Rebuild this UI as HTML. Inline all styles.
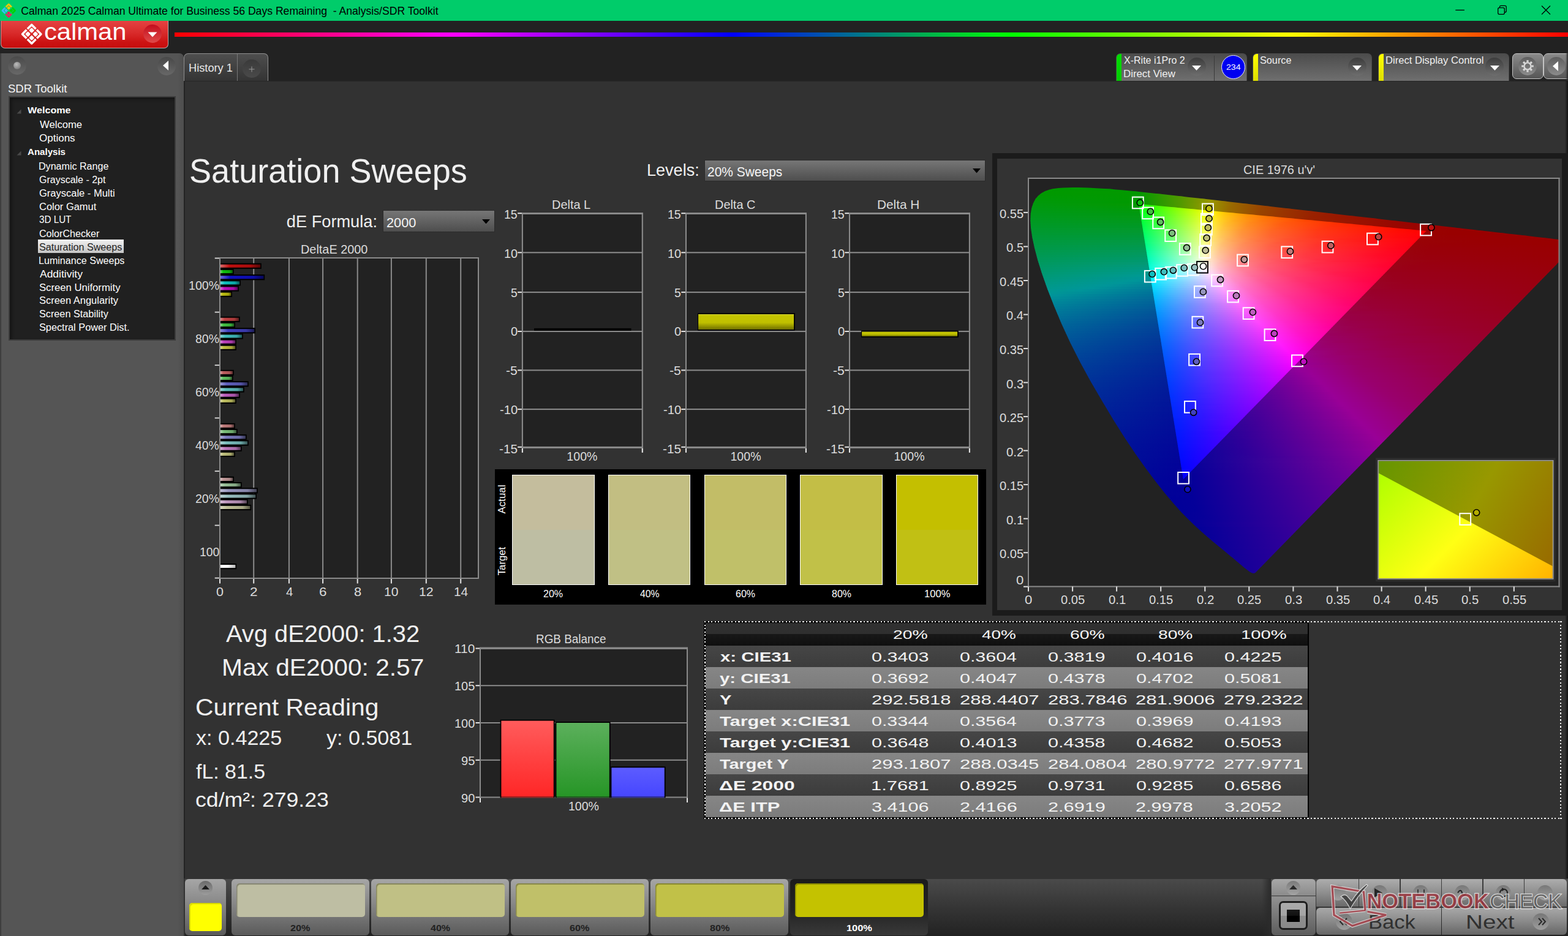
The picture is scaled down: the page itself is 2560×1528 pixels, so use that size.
<!DOCTYPE html>
<html lang="en"><head><meta charset="utf-8"><title>Calman 2025 - Analysis/SDR Toolkit</title>
<style>
*{box-sizing:border-box;margin:0;padding:0}
html,body{width:2560px;height:1528px;overflow:hidden;background:#323232}
body{font-family:"Liberation Sans",sans-serif;color:#f0f0f0}
#app{position:relative;width:2560px;height:1528px;overflow:hidden;background:#323232}
#app div,#app span,#app svg{position:absolute}
.t{white-space:pre;line-height:1;transform-origin:0 0;display:block}
.rb{border-radius:50%}
</style></head>
<body><div id="app">
<div id="titlebar" style="left:0;top:0;width:2560px;height:34px;background:#00cc6a"></div>
<svg style="left:0.8px;top:3.8px" width="26.4" height="26.4" viewBox="-13.2 -13.2 26.4 26.4"><g transform="rotate(45)"><path d="M-7.28 -0.70V-7.28H-0.70" fill="none" stroke="#ffc800" stroke-width="2.7" stroke-linejoin="round"/><rect x="-5.15" y="-5.15" width="4.4" height="4.4" rx="1.2" fill="#ffc800"/><path d="M7.28 -0.70V-7.28H0.70" fill="none" stroke="#00d400" stroke-width="2.7" stroke-linejoin="round"/><rect x="0.75" y="-5.15" width="4.4" height="4.4" rx="1.2" fill="#00d400"/><path d="M7.28 0.70V7.28H0.70" fill="none" stroke="#ff1a60" stroke-width="2.7" stroke-linejoin="round"/><rect x="0.75" y="0.75" width="4.4" height="4.4" rx="1.2" fill="#ff1a60"/><path d="M-7.28 0.70V7.28H-0.70" fill="none" stroke="#38bcff" stroke-width="2.7" stroke-linejoin="round"/><rect x="-5.15" y="0.75" width="4.4" height="4.4" rx="1.2" fill="#38bcff"/></g></svg>
<span class="t" style="left:34.31px;top:9.60px;font-size:17.6px;color:#000;">Calman 2025 Calman Ultimate for Business 56 Days Remaining  - Analysis/SDR Toolkit</span>
<svg style="left:2340px;top:0" width="220" height="34" viewBox="0 0 220 34" fill="none" stroke="#000" stroke-width="1.3">
<path d="M36.3 16.5h14.6"/>
<rect x="105.7" y="12.7" width="10.6" height="10.6" rx="2.2"/><path d="M108.5 12.5v-1.2a2 2 0 0 1 2-2h6.7a2 2 0 0 1 2 2v6.7a2 2 0 0 1-2 2h-1"/>
<path d="M177 9.5l14 14M191 9.5l-14 14"/>
</svg>
<div id="ribbon" style="left:0;top:34px;width:2560px;height:98px;background:#222"></div>
<div style="left:285px;top:52.5px;width:2275px;height:7.5px;background:linear-gradient(90deg,#f00 0%,#f0f 20%,#00f 40%,#0f0 60%,#ff0 80%,#f00 100%)"></div>
<div id="calman" style="left:1px;top:34px;width:274px;height:45px;border:1px solid #b9a9a9;border-top:0;border-radius:0 0 7px 7px;background:linear-gradient(#e44242 0%,#d92b2b 45%,#cc1212 80%,#c80e0e 100%)"></div>
<svg style="left:32.9px;top:36.8px" width="37.4" height="37.4" viewBox="-18.7 -18.7 37.4 37.4"><g transform="rotate(45)"><path d="M-10.77 -1.10V-10.77H-1.10" fill="none" stroke="#fff" stroke-width="3.5" stroke-linejoin="round"/><rect x="-7.60" y="-7.60" width="6.5" height="6.5" rx="1.6" fill="#fff"/><path d="M10.77 -1.10V-10.77H1.10" fill="none" stroke="#fff" stroke-width="3.5" stroke-linejoin="round"/><rect x="1.10" y="-7.60" width="6.5" height="6.5" rx="1.6" fill="#fff"/><path d="M10.77 1.10V10.77H1.10" fill="none" stroke="#fff" stroke-width="3.5" stroke-linejoin="round"/><rect x="1.10" y="1.10" width="6.5" height="6.5" rx="1.6" fill="#fff"/><path d="M-10.77 1.10V10.77H-1.10" fill="none" stroke="#fff" stroke-width="3.5" stroke-linejoin="round"/><rect x="-7.60" y="1.10" width="6.5" height="6.5" rx="1.6" fill="#fff"/></g></svg>
<span class="t" style="left:71.73px;top:32.83px;font-size:38px;color:#fff;transform:scaleX(1.0978);letter-spacing:0">calman</span>
<div class="rb" style="left:234px;top:40px;width:30px;height:30px;background:linear-gradient(#c20d1d,#e04a4a)"></div>
<svg style="left:241px;top:52px" width="16" height="9" viewBox="0 0 16 9"><path d="M0.5 0.5h15l-7.5 8z" fill="#fff"/></svg>
<div style="left:1822px;top:87px;width:214px;height:45px;border-radius:7px 7px 0 0;border:1px solid #4a4a4a;border-bottom:0;background:linear-gradient(#4c4c4c,#6f6f6f);overflow:hidden"><div style="left:0;top:0;width:8px;height:45px;background:linear-gradient(#0d0,#0c0)"></div></div>
<div class="rb" style="left:1938.5px;top:94px;width:30px;height:30px;background:linear-gradient(#3c3c3c,#6e6e6e)"></div>
<svg style="left:1946px;top:106.5px" width="15" height="8" viewBox="0 0 15 8"><path d="M0 0h15l-7.5 8z" fill="#fff"/></svg>
<div style="left:1981.5px;top:91px;width:1px;height:41px;background:#3a3a3a"></div>
<div class="rb" style="left:1994px;top:89.5px;width:39px;height:39px;background:#0000f0;border:1.5px solid #e8e8ff"></div>
<span class="t" style="left:2001.69px;top:103.09px;font-size:13.6px;color:#fff;transform:scaleX(1.0368);">234</span>
<span class="t" style="left:1834.64px;top:90.09px;font-size:16.2px;transform:scaleX(0.9901);">X-Rite i1Pro 2</span>
<span class="t" style="left:1833.62px;top:111.99px;font-size:16.2px;transform:scaleX(1.0402);">Direct View</span>
<div style="left:2045px;top:87px;width:195px;height:45px;border-radius:7px 7px 0 0;border:1px solid #4a4a4a;border-bottom:0;background:linear-gradient(#4c4c4c,#6f6f6f);overflow:hidden"><div style="left:0;top:0;width:8px;height:45px;background:linear-gradient(#ff0,#dd0)"></div></div>
<div class="rb" style="left:2200.5px;top:94px;width:30px;height:30px;background:linear-gradient(#3c3c3c,#6e6e6e)"></div>
<svg style="left:2208px;top:106.5px" width="15" height="8" viewBox="0 0 15 8"><path d="M0 0h15l-7.5 8z" fill="#fff"/></svg>
<span class="t" style="left:2057.26px;top:90.09px;font-size:16.2px;transform:scaleX(1.0032);">Source</span>
<div style="left:2250px;top:87px;width:214px;height:45px;border-radius:7px 7px 0 0;border:1px solid #4a4a4a;border-bottom:0;background:linear-gradient(#4c4c4c,#6f6f6f);overflow:hidden"><div style="left:0;top:0;width:8px;height:45px;background:linear-gradient(#ff0,#dd0)"></div></div>
<div class="rb" style="left:2425px;top:94px;width:30px;height:30px;background:linear-gradient(#3c3c3c,#6e6e6e)"></div>
<svg style="left:2432.5px;top:106.5px" width="15" height="8" viewBox="0 0 15 8"><path d="M0 0h15l-7.5 8z" fill="#fff"/></svg>
<span class="t" style="left:2261.64px;top:90.09px;font-size:16.2px;transform:scaleX(1.0252);">Direct Display Control</span>
<div style="left:2469px;top:86.5px;width:50.5px;height:42px;border-radius:7px;border:1.5px solid #c4c4c4;background:linear-gradient(#8a8a8a,#565656)"></div>
<div class="rb" style="left:2479px;top:92.5px;width:30px;height:30px;background:linear-gradient(#5e5e5e,#8c8c8c)"></div>
<svg style="left:2483px;top:96.5px" width="22" height="22" viewBox="-11 -11 22 22"><g fill="none" stroke="#d9d9d9">
<circle r="5.6" stroke-width="2.4"/><g stroke-width="3.2" stroke-linecap="butt">
<path d="M0 -6.5V-9.8M0 6.5V9.8M-6.5 0H-9.8M6.5 0H9.8M4.6 4.6L6.9 6.9M-4.6 4.6L-6.9 6.9M4.6 -4.6L6.9 -6.9M-4.6 -4.6L-6.9 -6.9"/></g></g></svg>
<div style="left:2520px;top:86.5px;width:50px;height:42px;border-radius:7px;border:1.5px solid #c4c4c4;background:linear-gradient(#8a8a8a,#565656)"></div>
<div class="rb" style="left:2525.5px;top:92.5px;width:30px;height:30px;background:linear-gradient(#5e5e5e,#8c8c8c)"></div>
<svg style="left:2535px;top:99.5px" width="9" height="16" viewBox="0 0 9 16"><path d="M9 0v16l-9 -8z" fill="#fff"/></svg>
<div style="left:2556px;top:86px;width:4px;height:46px;background:linear-gradient(90deg,rgba(30,30,30,0),#2a2a2a)"></div>
<div style="left:300px;top:86.5px;width:138px;height:45.5px;border-radius:7px 7px 0 0;border:1.2px solid #909090;border-bottom:0;background:linear-gradient(#4e4e4e,#343434)"></div>
<div style="left:387.2px;top:88px;width:1.2px;height:44px;background:#787878"></div>
<span class="t" style="left:308.00px;top:101.76px;font-size:18.6px;color:#e8e8e8;transform:scaleX(0.9799);">History 1</span>
<div class="rb" style="left:396.2px;top:97px;width:30px;height:30px;background:linear-gradient(#3a3a3a,#4a4a4a)"></div>
<svg style="left:406.2px;top:107.5px" width="10" height="10" viewBox="0 0 10 10"><path d="M5 0.5v9M0.5 5h9" stroke="#9a9a9a" stroke-width="1" fill="none"/></svg>
<div id="sidebar" style="left:0;top:87px;width:299.5px;height:1441px;border-radius:0 7px 0 0;background:linear-gradient(90deg,#4a4a4a 0,#555 3px,#555 290px,#4e4e4e 100%)"></div>
<div style="left:0;top:87px;width:1.5px;height:1441px;background:#3e3e3e"></div>
<div class="rb" style="left:13px;top:92px;width:30px;height:30px;background:linear-gradient(#4a4a4a,#686868)"></div>
<div class="rb" style="left:21.5px;top:100.5px;width:12px;height:12px;background:radial-gradient(circle at 40% 35%,#bdbdbd,#8a8a8a 60%,#6a6a6a)"></div>
<div class="rb" style="left:256.5px;top:92.5px;width:30px;height:30px;background:linear-gradient(#484848,#686868)"></div>
<svg style="left:266px;top:99px" width="9" height="16" viewBox="0 0 9 16"><path d="M9 0v16l-9 -8z" fill="#fff"/></svg>
<span class="t" style="left:12.66px;top:134.72px;font-size:19px;color:#f4f4f4;transform:scaleX(0.9754);">SDR Toolkit</span>
<div id="tree" style="left:14px;top:157px;width:273px;height:399px;border:2px solid #3c3c3c;background:#202020;box-shadow:inset 3px 3px 5px #141414"></div>
<svg style="left:27px;top:178px" width="8" height="8" viewBox="0 0 8 8"><path d="M7.5 0.5v7h-7z" fill="#4a4a4a"/></svg>
<svg style="left:27px;top:245.5px" width="8" height="8" viewBox="0 0 8 8"><path d="M7.5 0.5v7h-7z" fill="#4a4a4a"/></svg>
<span class="t" style="left:44.98px;top:171.86px;font-size:15.4px;font-weight:700;color:#fff;transform:scaleX(1.0486);">Welcome</span>
<span class="t" style="left:44.62px;top:239.86px;font-size:15.4px;font-weight:700;color:#fff;transform:scaleX(0.9792);">Analysis</span>
<span class="t" style="left:64.73px;top:195.83px;font-size:15.8px;color:#fff;transform:scaleX(1.0542);">Welcome</span>
<span class="t" style="left:63.99px;top:218.03px;font-size:15.8px;color:#fff;transform:scaleX(1.0765);">Options</span>
<span class="t" style="left:63.48px;top:264.03px;font-size:15.8px;color:#fff;transform:scaleX(1.0173);">Dynamic Range</span>
<span class="t" style="left:64.00px;top:286.03px;font-size:15.8px;color:#fff;transform:scaleX(1.0123);">Grayscale - 2pt</span>
<span class="t" style="left:63.97px;top:307.83px;font-size:15.8px;color:#fff;transform:scaleX(1.0442);">Grayscale - Multi</span>
<span class="t" style="left:63.96px;top:329.83px;font-size:15.8px;color:#fff;transform:scaleX(1.0414);">Color Gamut</span>
<span class="t" style="left:64.22px;top:351.13px;font-size:15.8px;color:#fff;transform:scaleX(0.9631);">3D LUT</span>
<span class="t" style="left:63.98px;top:373.83px;font-size:15.8px;color:#fff;transform:scaleX(1.0177);">ColorChecker</span>
<div style="left:62px;top:391px;width:140px;height:22px;background:linear-gradient(#f2f2f2,#c4c4c4)"></div>
<span class="t" style="left:64.07px;top:396.03px;font-size:15.8px;color:#222;transform:scaleX(1.0204);">Saturation Sweeps</span>
<span class="t" style="left:63.48px;top:417.53px;font-size:15.8px;color:#fff;transform:scaleX(1.0183);">Luminance Sweeps</span>
<span class="t" style="left:64.77px;top:439.93px;font-size:15.8px;color:#fff;transform:scaleX(1.1052);">Additivity</span>
<span class="t" style="left:64.04px;top:462.03px;font-size:15.8px;color:#fff;transform:scaleX(1.0553);">Screen Uniformity</span>
<span class="t" style="left:64.05px;top:482.83px;font-size:15.8px;color:#fff;transform:scaleX(1.0416);">Screen Angularity</span>
<span class="t" style="left:64.06px;top:505.03px;font-size:15.8px;color:#fff;transform:scaleX(1.0274);">Screen Stability</span>
<span class="t" style="left:64.06px;top:526.83px;font-size:15.8px;color:#fff;transform:scaleX(1.0309);">Spectral Power Dist.</span>
<div id="content" style="left:300px;top:132px;width:2260px;height:1302px;background:#323232"></div>
<div style="left:300px;top:132px;width:1.6px;height:1302px;background:#242424"></div>
<div style="left:300px;top:132px;width:2260px;height:1.3px;background:#262626"></div>
<div style="left:2554.5px;top:132px;width:5.5px;height:1302px;background:linear-gradient(90deg,rgba(16,16,16,0),rgba(16,16,16,.55) 55%,#121212)"></div>
<span class="t" style="left:309.04px;top:251.77px;font-size:55.2px;color:#f0f0f0;transform:scaleX(0.9798);">Saturation Sweeps</span>
<span class="t" style="left:467.86px;top:348.28px;font-size:27.2px;color:#f0f0f0;">dE Formula:</span>
<div style="left:624.5px;top:342.5px;width:183px;height:36px;border:1.5px solid #2b2b2b;background:linear-gradient(#767676,#4e4e4e)"></div>
<span class="t" style="left:630.91px;top:353.02px;font-size:22.3px;color:#f4f4f4;transform:scaleX(0.9744);">2000</span>
<svg style="left:786.5px;top:357.75px" width="13" height="7.5" viewBox="0 0 13 7.5"><path d="M0 0h13l-6.5 7.5z" fill="#000"/></svg>
<span class="t" style="left:1055.78px;top:264.38px;font-size:27.2px;color:#f0f0f0;transform:scaleX(0.9946);">Levels:</span>
<div style="left:1150px;top:260.5px;width:459px;height:35px;border:1.5px solid #2b2b2b;background:linear-gradient(#767676,#4e4e4e)"></div>
<span class="t" style="left:1155.45px;top:269.92px;font-size:22.3px;color:#f4f4f4;transform:scaleX(0.9397);">20% Sweeps</span>
<svg style="left:1588px;top:275.25px" width="13" height="7.5" viewBox="0 0 13 7.5"><path d="M0 0h13l-6.5 7.5z" fill="#000"/></svg>
<svg id="dechart" style="left:300px;top:400px" width="520" height="570" viewBox="300 400 520 570">
<defs>
<linearGradient id="b1" gradientUnits="userSpaceOnUse" x1="360.0" x2="425.1" y1="0" y2="0"><stop offset="0" stop-color="#d76a6a"/><stop offset=".22" stop-color="#be0f0f"/><stop offset=".75" stop-color="#a70d0d"/><stop offset="1" stop-color="#560707"/></linearGradient>
<linearGradient id="b2" gradientUnits="userSpaceOnUse" x1="360.0" x2="380.0" y1="0" y2="0"><stop offset="0" stop-color="#6ad76a"/><stop offset=".22" stop-color="#0fbe0f"/><stop offset=".75" stop-color="#0da70d"/><stop offset="1" stop-color="#075607"/></linearGradient>
<linearGradient id="b3" gradientUnits="userSpaceOnUse" x1="360.0" x2="430.5" y1="0" y2="0"><stop offset="0" stop-color="#6a6ad7"/><stop offset=".22" stop-color="#0f0fbe"/><stop offset=".75" stop-color="#0d0da7"/><stop offset="1" stop-color="#070756"/></linearGradient>
<linearGradient id="b4" gradientUnits="userSpaceOnUse" x1="360.0" x2="391.3" y1="0" y2="0"><stop offset="0" stop-color="#6ad7d7"/><stop offset=".22" stop-color="#0fbebe"/><stop offset=".75" stop-color="#0da7a7"/><stop offset="1" stop-color="#075656"/></linearGradient>
<linearGradient id="b5" gradientUnits="userSpaceOnUse" x1="360.0" x2="388.3" y1="0" y2="0"><stop offset="0" stop-color="#d76ad7"/><stop offset=".22" stop-color="#be0fbe"/><stop offset=".75" stop-color="#a70da7"/><stop offset="1" stop-color="#560756"/></linearGradient>
<linearGradient id="b6" gradientUnits="userSpaceOnUse" x1="360.0" x2="377.3" y1="0" y2="0"><stop offset="0" stop-color="#d7d76a"/><stop offset=".22" stop-color="#bebe0f"/><stop offset=".75" stop-color="#a7a70d"/><stop offset="1" stop-color="#565607"/></linearGradient>
<linearGradient id="b7" gradientUnits="userSpaceOnUse" x1="360.0" x2="390.0" y1="0" y2="0"><stop offset="0" stop-color="#d78989"/><stop offset=".22" stop-color="#be4141"/><stop offset=".75" stop-color="#a73939"/><stop offset="1" stop-color="#561d1d"/></linearGradient>
<linearGradient id="b8" gradientUnits="userSpaceOnUse" x1="360.0" x2="382.3" y1="0" y2="0"><stop offset="0" stop-color="#89d789"/><stop offset=".22" stop-color="#41be41"/><stop offset=".75" stop-color="#39a739"/><stop offset="1" stop-color="#1d561d"/></linearGradient>
<linearGradient id="b9" gradientUnits="userSpaceOnUse" x1="360.0" x2="415.3" y1="0" y2="0"><stop offset="0" stop-color="#8989d7"/><stop offset=".22" stop-color="#4141be"/><stop offset=".75" stop-color="#3939a7"/><stop offset="1" stop-color="#1d1d56"/></linearGradient>
<linearGradient id="b10" gradientUnits="userSpaceOnUse" x1="360.0" x2="395.1" y1="0" y2="0"><stop offset="0" stop-color="#89d7d7"/><stop offset=".22" stop-color="#41bebe"/><stop offset=".75" stop-color="#39a7a7"/><stop offset="1" stop-color="#1d5656"/></linearGradient>
<linearGradient id="b11" gradientUnits="userSpaceOnUse" x1="360.0" x2="384.2" y1="0" y2="0"><stop offset="0" stop-color="#d789d7"/><stop offset=".22" stop-color="#be41be"/><stop offset=".75" stop-color="#a739a7"/><stop offset="1" stop-color="#561d56"/></linearGradient>
<linearGradient id="b12" gradientUnits="userSpaceOnUse" x1="360.0" x2="384.2" y1="0" y2="0"><stop offset="0" stop-color="#d7d789"/><stop offset=".22" stop-color="#bebe41"/><stop offset=".75" stop-color="#a7a739"/><stop offset="1" stop-color="#56561d"/></linearGradient>
<linearGradient id="b13" gradientUnits="userSpaceOnUse" x1="360.0" x2="380.1" y1="0" y2="0"><stop offset="0" stop-color="#d79c9c"/><stop offset=".22" stop-color="#be5f5f"/><stop offset=".75" stop-color="#a75454"/><stop offset="1" stop-color="#562b2b"/></linearGradient>
<linearGradient id="b14" gradientUnits="userSpaceOnUse" x1="360.0" x2="378.9" y1="0" y2="0"><stop offset="0" stop-color="#9cd79c"/><stop offset=".22" stop-color="#5fbe5f"/><stop offset=".75" stop-color="#54a754"/><stop offset="1" stop-color="#2b562b"/></linearGradient>
<linearGradient id="b15" gradientUnits="userSpaceOnUse" x1="360.0" x2="404.1" y1="0" y2="0"><stop offset="0" stop-color="#9c9cd7"/><stop offset=".22" stop-color="#5f5fbe"/><stop offset=".75" stop-color="#5454a7"/><stop offset="1" stop-color="#2b2b56"/></linearGradient>
<linearGradient id="b16" gradientUnits="userSpaceOnUse" x1="360.0" x2="397.0" y1="0" y2="0"><stop offset="0" stop-color="#9cd7d7"/><stop offset=".22" stop-color="#5fbebe"/><stop offset=".75" stop-color="#54a7a7"/><stop offset="1" stop-color="#2b5656"/></linearGradient>
<linearGradient id="b17" gradientUnits="userSpaceOnUse" x1="360.0" x2="390.1" y1="0" y2="0"><stop offset="0" stop-color="#d79cd7"/><stop offset=".22" stop-color="#be5fbe"/><stop offset=".75" stop-color="#a754a7"/><stop offset="1" stop-color="#562b56"/></linearGradient>
<linearGradient id="b18" gradientUnits="userSpaceOnUse" x1="360.0" x2="384.1" y1="0" y2="0"><stop offset="0" stop-color="#d7d79c"/><stop offset=".22" stop-color="#bebe5f"/><stop offset=".75" stop-color="#a7a754"/><stop offset="1" stop-color="#56562b"/></linearGradient>
<linearGradient id="b19" gradientUnits="userSpaceOnUse" x1="360.0" x2="382.1" y1="0" y2="0"><stop offset="0" stop-color="#d7adad"/><stop offset=".22" stop-color="#be7a7a"/><stop offset=".75" stop-color="#a76b6b"/><stop offset="1" stop-color="#563737"/></linearGradient>
<linearGradient id="b20" gradientUnits="userSpaceOnUse" x1="360.0" x2="386.0" y1="0" y2="0"><stop offset="0" stop-color="#add7ad"/><stop offset=".22" stop-color="#7abe7a"/><stop offset=".75" stop-color="#6ba76b"/><stop offset="1" stop-color="#375637"/></linearGradient>
<linearGradient id="b21" gradientUnits="userSpaceOnUse" x1="360.0" x2="401.0" y1="0" y2="0"><stop offset="0" stop-color="#adadd7"/><stop offset=".22" stop-color="#7a7abe"/><stop offset=".75" stop-color="#6b6ba7"/><stop offset="1" stop-color="#373756"/></linearGradient>
<linearGradient id="b22" gradientUnits="userSpaceOnUse" x1="360.0" x2="404.1" y1="0" y2="0"><stop offset="0" stop-color="#add7d7"/><stop offset=".22" stop-color="#7abebe"/><stop offset=".75" stop-color="#6ba7a7"/><stop offset="1" stop-color="#375656"/></linearGradient>
<linearGradient id="b23" gradientUnits="userSpaceOnUse" x1="360.0" x2="393.0" y1="0" y2="0"><stop offset="0" stop-color="#d7add7"/><stop offset=".22" stop-color="#be7abe"/><stop offset=".75" stop-color="#a76ba7"/><stop offset="1" stop-color="#563756"/></linearGradient>
<linearGradient id="b24" gradientUnits="userSpaceOnUse" x1="360.0" x2="382.1" y1="0" y2="0"><stop offset="0" stop-color="#d7d7ad"/><stop offset=".22" stop-color="#bebe7a"/><stop offset=".75" stop-color="#a7a76b"/><stop offset="1" stop-color="#565637"/></linearGradient>
<linearGradient id="b25" gradientUnits="userSpaceOnUse" x1="360.0" x2="380.3" y1="0" y2="0"><stop offset="0" stop-color="#d7bebe"/><stop offset=".22" stop-color="#be9696"/><stop offset=".75" stop-color="#a78484"/><stop offset="1" stop-color="#564444"/></linearGradient>
<linearGradient id="b26" gradientUnits="userSpaceOnUse" x1="360.0" x2="393.0" y1="0" y2="0"><stop offset="0" stop-color="#bed7be"/><stop offset=".22" stop-color="#96be96"/><stop offset=".75" stop-color="#84a784"/><stop offset="1" stop-color="#445644"/></linearGradient>
<linearGradient id="b27" gradientUnits="userSpaceOnUse" x1="360.0" x2="419.1" y1="0" y2="0"><stop offset="0" stop-color="#bebed7"/><stop offset=".22" stop-color="#9696be"/><stop offset=".75" stop-color="#8484a7"/><stop offset="1" stop-color="#444456"/></linearGradient>
<linearGradient id="b28" gradientUnits="userSpaceOnUse" x1="360.0" x2="417.3" y1="0" y2="0"><stop offset="0" stop-color="#bed7d7"/><stop offset=".22" stop-color="#96bebe"/><stop offset=".75" stop-color="#84a7a7"/><stop offset="1" stop-color="#445656"/></linearGradient>
<linearGradient id="b29" gradientUnits="userSpaceOnUse" x1="360.0" x2="403.0" y1="0" y2="0"><stop offset="0" stop-color="#d7bed7"/><stop offset=".22" stop-color="#be96be"/><stop offset=".75" stop-color="#a784a7"/><stop offset="1" stop-color="#564456"/></linearGradient>
<linearGradient id="b30" gradientUnits="userSpaceOnUse" x1="360.0" x2="408.4" y1="0" y2="0"><stop offset="0" stop-color="#d7d7be"/><stop offset=".22" stop-color="#bebe96"/><stop offset=".75" stop-color="#a7a784"/><stop offset="1" stop-color="#565644"/></linearGradient>
<linearGradient id="bw" gradientUnits="userSpaceOnUse" x1="360.0" x2="384.4" y1="0" y2="0"><stop offset="0" stop-color="#fff"/><stop offset=".5" stop-color="#f4f4f4"/><stop offset="1" stop-color="#b8b8b8"/></linearGradient>
</defs>
<rect x="359.0" y="421.0" width="422.0" height="523.0" fill="#222"/>
<rect x="413.2" y="421.0" width="2" height="523.0" fill="#8a8a8a"/>
<rect x="413.2" y="945.0" width="2" height="7.5" fill="#e4e4e4"/>
<rect x="470.9" y="421.0" width="2" height="523.0" fill="#8a8a8a"/>
<rect x="470.9" y="945.0" width="2" height="7.5" fill="#e4e4e4"/>
<rect x="526.1" y="421.0" width="2" height="523.0" fill="#8a8a8a"/>
<rect x="526.1" y="945.0" width="2" height="7.5" fill="#e4e4e4"/>
<rect x="582.7" y="421.0" width="2" height="523.0" fill="#8a8a8a"/>
<rect x="582.7" y="945.0" width="2" height="7.5" fill="#e4e4e4"/>
<rect x="637.9" y="421.0" width="2" height="523.0" fill="#8a8a8a"/>
<rect x="637.9" y="945.0" width="2" height="7.5" fill="#e4e4e4"/>
<rect x="694.8" y="421.0" width="2" height="523.0" fill="#8a8a8a"/>
<rect x="694.8" y="945.0" width="2" height="7.5" fill="#e4e4e4"/>
<rect x="751.2" y="421.0" width="2" height="523.0" fill="#8a8a8a"/>
<rect x="751.2" y="945.0" width="2" height="7.5" fill="#e4e4e4"/>
<rect x="358.0" y="420.0" width="424.0" height="2" fill="#8a8a8a"/>
<rect x="780.0" y="420.0" width="2" height="525.0" fill="#8a8a8a"/>
<rect x="358.0" y="943.0" width="424.0" height="2" fill="#8a8a8a"/>
<rect x="358.0" y="420.0" width="2" height="525.0" fill="#8a8a8a"/>
<rect x="358.0" y="945.0" width="2" height="7.5" fill="#e4e4e4"/>
<rect x="350.7" y="420.60" width="7.3" height="1.8" fill="#dcdcdc"/>
<rect x="350.7" y="508.70" width="7.3" height="1.8" fill="#dcdcdc"/>
<rect x="350.7" y="595.30" width="7.3" height="1.8" fill="#dcdcdc"/>
<rect x="350.7" y="681.50" width="7.3" height="1.8" fill="#dcdcdc"/>
<rect x="350.7" y="768.30" width="7.3" height="1.8" fill="#dcdcdc"/>
<rect x="350.7" y="856.70" width="7.3" height="1.8" fill="#dcdcdc"/>
<rect x="350.7" y="942.70" width="7.3" height="1.8" fill="#dcdcdc"/>
<rect x="360.0" y="429.70" width="66.8" height="9.2" fill="#000"/>
<rect x="360.0" y="431.70" width="65.1" height="5.1" fill="url(#b1)"/>
<rect x="360.0" y="438.90" width="21.7" height="9.2" fill="#000"/>
<rect x="360.0" y="440.90" width="20.0" height="5.1" fill="url(#b2)"/>
<rect x="360.0" y="448.10" width="72.2" height="9.2" fill="#000"/>
<rect x="360.0" y="450.10" width="70.5" height="5.1" fill="url(#b3)"/>
<rect x="360.0" y="457.30" width="33.0" height="9.2" fill="#000"/>
<rect x="360.0" y="459.30" width="31.3" height="5.1" fill="url(#b4)"/>
<rect x="360.0" y="466.50" width="30.0" height="9.2" fill="#000"/>
<rect x="360.0" y="468.50" width="28.3" height="5.1" fill="url(#b5)"/>
<rect x="360.0" y="475.70" width="19.0" height="9.2" fill="#000"/>
<rect x="360.0" y="477.70" width="17.3" height="5.1" fill="url(#b6)"/>
<rect x="360.0" y="516.75" width="31.7" height="9.2" fill="#000"/>
<rect x="360.0" y="518.75" width="30.0" height="5.1" fill="url(#b7)"/>
<rect x="360.0" y="525.95" width="24.0" height="9.2" fill="#000"/>
<rect x="360.0" y="527.95" width="22.3" height="5.1" fill="url(#b8)"/>
<rect x="360.0" y="535.15" width="57.0" height="9.2" fill="#000"/>
<rect x="360.0" y="537.15" width="55.3" height="5.1" fill="url(#b9)"/>
<rect x="360.0" y="544.35" width="36.8" height="9.2" fill="#000"/>
<rect x="360.0" y="546.35" width="35.1" height="5.1" fill="url(#b10)"/>
<rect x="360.0" y="553.55" width="25.9" height="9.2" fill="#000"/>
<rect x="360.0" y="555.55" width="24.2" height="5.1" fill="url(#b11)"/>
<rect x="360.0" y="562.75" width="25.9" height="9.2" fill="#000"/>
<rect x="360.0" y="564.75" width="24.2" height="5.1" fill="url(#b12)"/>
<rect x="360.0" y="603.80" width="21.8" height="9.2" fill="#000"/>
<rect x="360.0" y="605.80" width="20.1" height="5.1" fill="url(#b13)"/>
<rect x="360.0" y="613.00" width="20.6" height="9.2" fill="#000"/>
<rect x="360.0" y="615.00" width="18.9" height="5.1" fill="url(#b14)"/>
<rect x="360.0" y="622.20" width="45.8" height="9.2" fill="#000"/>
<rect x="360.0" y="624.20" width="44.1" height="5.1" fill="url(#b15)"/>
<rect x="360.0" y="631.40" width="38.7" height="9.2" fill="#000"/>
<rect x="360.0" y="633.40" width="37.0" height="5.1" fill="url(#b16)"/>
<rect x="360.0" y="640.60" width="31.8" height="9.2" fill="#000"/>
<rect x="360.0" y="642.60" width="30.1" height="5.1" fill="url(#b17)"/>
<rect x="360.0" y="649.80" width="25.8" height="9.2" fill="#000"/>
<rect x="360.0" y="651.80" width="24.1" height="5.1" fill="url(#b18)"/>
<rect x="360.0" y="690.85" width="23.8" height="9.2" fill="#000"/>
<rect x="360.0" y="692.85" width="22.1" height="5.1" fill="url(#b19)"/>
<rect x="360.0" y="700.05" width="27.7" height="9.2" fill="#000"/>
<rect x="360.0" y="702.05" width="26.0" height="5.1" fill="url(#b20)"/>
<rect x="360.0" y="709.25" width="42.7" height="9.2" fill="#000"/>
<rect x="360.0" y="711.25" width="41.0" height="5.1" fill="url(#b21)"/>
<rect x="360.0" y="718.45" width="45.8" height="9.2" fill="#000"/>
<rect x="360.0" y="720.45" width="44.1" height="5.1" fill="url(#b22)"/>
<rect x="360.0" y="727.65" width="34.7" height="9.2" fill="#000"/>
<rect x="360.0" y="729.65" width="33.0" height="5.1" fill="url(#b23)"/>
<rect x="360.0" y="736.85" width="23.8" height="9.2" fill="#000"/>
<rect x="360.0" y="738.85" width="22.1" height="5.1" fill="url(#b24)"/>
<rect x="360.0" y="777.90" width="22.0" height="9.2" fill="#000"/>
<rect x="360.0" y="779.90" width="20.3" height="5.1" fill="url(#b25)"/>
<rect x="360.0" y="787.10" width="34.7" height="9.2" fill="#000"/>
<rect x="360.0" y="789.10" width="33.0" height="5.1" fill="url(#b26)"/>
<rect x="360.0" y="796.30" width="60.8" height="9.2" fill="#000"/>
<rect x="360.0" y="798.30" width="59.1" height="5.1" fill="url(#b27)"/>
<rect x="360.0" y="805.50" width="59.0" height="9.2" fill="#000"/>
<rect x="360.0" y="807.50" width="57.3" height="5.1" fill="url(#b28)"/>
<rect x="360.0" y="814.70" width="44.7" height="9.2" fill="#000"/>
<rect x="360.0" y="816.70" width="43.0" height="5.1" fill="url(#b29)"/>
<rect x="360.0" y="823.90" width="50.1" height="9.2" fill="#000"/>
<rect x="360.0" y="825.90" width="48.4" height="5.1" fill="url(#b30)"/>
<rect x="360.0" y="920.00" width="26.1" height="9.2" fill="#000"/>
<rect x="360.0" y="922.00" width="24.4" height="5.1" fill="url(#bw)"/>
</svg>
<span class="t" style="left:490.67px;top:397.51px;font-size:19.6px;color:#dcdcdc;transform:scaleX(1.0145);">DeltaE 2000</span>
<span class="t" style="left:308.01px;top:456.81px;font-size:19.6px;color:#dcdcdc;">100%</span>
<span class="t" style="left:319.05px;top:543.81px;font-size:19.6px;color:#dcdcdc;transform:scaleX(0.9929);">80%</span>
<span class="t" style="left:318.91px;top:630.81px;font-size:19.6px;color:#dcdcdc;transform:scaleX(0.9967);">60%</span>
<span class="t" style="left:319.46px;top:717.81px;font-size:19.6px;color:#dcdcdc;transform:scaleX(0.9824);">40%</span>
<span class="t" style="left:318.92px;top:804.81px;font-size:19.6px;color:#dcdcdc;transform:scaleX(0.9964);">20%</span>
<span class="t" style="left:325.62px;top:891.81px;font-size:19.6px;color:#dcdcdc;transform:scaleX(0.9920);">100</span>
<span class="t" style="left:353.01px;top:957.01px;font-size:19.6px;color:#dcdcdc;transform:scaleX(1.0987);">0</span>
<span class="t" style="left:408.31px;top:957.01px;font-size:19.6px;color:#dcdcdc;transform:scaleX(1.1528);">2</span>
<span class="t" style="left:466.68px;top:957.01px;font-size:19.6px;color:#dcdcdc;transform:scaleX(1.0423);">4</span>
<span class="t" style="left:521.22px;top:957.01px;font-size:19.6px;color:#dcdcdc;transform:scaleX(1.1382);">6</span>
<span class="t" style="left:578.00px;top:957.01px;font-size:19.6px;color:#dcdcdc;transform:scaleX(1.1192);">8</span>
<span class="t" style="left:627.20px;top:957.01px;font-size:19.6px;color:#dcdcdc;transform:scaleX(1.0748);">10</span>
<span class="t" style="left:684.08px;top:957.01px;font-size:19.6px;color:#dcdcdc;transform:scaleX(1.0871);">12</span>
<span class="t" style="left:740.51px;top:957.01px;font-size:19.6px;color:#dcdcdc;transform:scaleX(1.0644);">14</span>
<svg style="left:807px;top:340px" width="260" height="410" viewBox="807 340 260 410">
<rect x="852.9" y="348.5" width="195.89999999999998" height="381.9" fill="#222"/>
<rect x="852.9" y="411.25" width="195.89999999999998" height="2.1" fill="#8a8a8a"/>
<rect x="852.9" y="476.05" width="195.89999999999998" height="2.1" fill="#8a8a8a"/>
<rect x="852.9" y="539.95" width="195.89999999999998" height="2.1" fill="#8a8a8a"/>
<rect x="852.9" y="603.35" width="195.89999999999998" height="2.1" fill="#8a8a8a"/>
<rect x="852.9" y="667.05" width="195.89999999999998" height="2.1" fill="#8a8a8a"/>
<rect x="851.9" y="347.0" width="197.89999999999998" height="3" fill="#8a8a8a"/>
<rect x="851.9" y="728.9" width="197.89999999999998" height="3" fill="#8a8a8a"/>
<rect x="851.85" y="347.5" width="2.1" height="383.9" fill="#8a8a8a"/>
<rect x="1047.75" y="347.5" width="2.1" height="383.9" fill="#8a8a8a"/>
<rect x="851.85" y="731.9" width="2.1" height="7" fill="#e4e4e4"/>
<rect x="1047.75" y="731.9" width="2.1" height="7" fill="#e4e4e4"/>
<rect x="845.1999999999999" y="347.20" width="6.7" height="2" fill="#e4e4e4"/>
<rect x="845.1999999999999" y="411.30" width="6.7" height="2" fill="#e4e4e4"/>
<rect x="845.1999999999999" y="476.10" width="6.7" height="2" fill="#e4e4e4"/>
<rect x="845.1999999999999" y="540.00" width="6.7" height="2" fill="#e4e4e4"/>
<rect x="845.1999999999999" y="603.40" width="6.7" height="2" fill="#e4e4e4"/>
<rect x="845.1999999999999" y="667.10" width="6.7" height="2" fill="#e4e4e4"/>
<rect x="845.1999999999999" y="728.80" width="6.7" height="2" fill="#e4e4e4"/>
<rect x="872.0" y="535.9" width="158.5" height="4.0" fill="#000"/>
</svg>
<span class="t" style="left:901.01px;top:324.74px;font-size:19.8px;color:#dcdcdc;transform:scaleX(1.0082);">Delta L</span>
<span class="t" style="left:823.11px;top:341.01px;font-size:19.6px;color:#dcdcdc;transform:scaleX(0.9958);">15</span>
<span class="t" style="left:822.69px;top:404.79px;font-size:19.6px;color:#dcdcdc;transform:scaleX(1.0134);">10</span>
<span class="t" style="left:834.02px;top:468.57px;font-size:19.6px;color:#dcdcdc;transform:scaleX(0.9894);">5</span>
<span class="t" style="left:833.62px;top:531.75px;font-size:19.6px;color:#dcdcdc;transform:scaleX(1.0240);">0</span>
<span class="t" style="left:826.06px;top:595.53px;font-size:19.6px;color:#dcdcdc;transform:scaleX(1.0798);">-5</span>
<span class="t" style="left:815.50px;top:659.91px;font-size:19.6px;color:#dcdcdc;transform:scaleX(1.0340);">-10</span>
<span class="t" style="left:814.77px;top:723.69px;font-size:19.6px;color:#dcdcdc;transform:scaleX(1.0625);">-15</span>
<span class="t" style="left:925.35px;top:735.81px;font-size:19.6px;color:#dcdcdc;">100%</span>
<svg style="left:1075px;top:340px" width="260" height="410" viewBox="1075 340 260 410">
<rect x="1120.0" y="348.5" width="195.9000000000001" height="381.9" fill="#222"/>
<rect x="1120.0" y="411.25" width="195.9000000000001" height="2.1" fill="#8a8a8a"/>
<rect x="1120.0" y="476.05" width="195.9000000000001" height="2.1" fill="#8a8a8a"/>
<rect x="1120.0" y="539.95" width="195.9000000000001" height="2.1" fill="#8a8a8a"/>
<rect x="1120.0" y="603.35" width="195.9000000000001" height="2.1" fill="#8a8a8a"/>
<rect x="1120.0" y="667.05" width="195.9000000000001" height="2.1" fill="#8a8a8a"/>
<rect x="1119.0" y="347.0" width="197.9000000000001" height="3" fill="#8a8a8a"/>
<rect x="1119.0" y="728.9" width="197.9000000000001" height="3" fill="#8a8a8a"/>
<rect x="1118.95" y="347.5" width="2.1" height="383.9" fill="#8a8a8a"/>
<rect x="1314.8500000000001" y="347.5" width="2.1" height="383.9" fill="#8a8a8a"/>
<rect x="1118.95" y="731.9" width="2.1" height="7" fill="#e4e4e4"/>
<rect x="1314.8500000000001" y="731.9" width="2.1" height="7" fill="#e4e4e4"/>
<rect x="1112.3" y="347.20" width="6.7" height="2" fill="#e4e4e4"/>
<rect x="1112.3" y="411.30" width="6.7" height="2" fill="#e4e4e4"/>
<rect x="1112.3" y="476.10" width="6.7" height="2" fill="#e4e4e4"/>
<rect x="1112.3" y="540.00" width="6.7" height="2" fill="#e4e4e4"/>
<rect x="1112.3" y="603.40" width="6.7" height="2" fill="#e4e4e4"/>
<rect x="1112.3" y="667.10" width="6.7" height="2" fill="#e4e4e4"/>
<rect x="1112.3" y="728.80" width="6.7" height="2" fill="#e4e4e4"/>
<defs><linearGradient id="dg1" x1="0" x2="0" y1="0" y2="1"><stop offset="0" stop-color="#d2d23c"/><stop offset=".08" stop-color="#c4c400"/><stop offset=".55" stop-color="#c0c000"/><stop offset="1" stop-color="#6e6e00"/></linearGradient></defs>
<rect x="1139.1" y="511.0" width="158.80000000000024" height="28.700000000000045" fill="#000"/>
<rect x="1140.1" y="512.9" width="156.00000000000023" height="25.100000000000044" fill="url(#dg1)"/>
</svg>
<span class="t" style="left:1166.57px;top:324.74px;font-size:19.8px;color:#dcdcdc;transform:scaleX(1.0064);">Delta C</span>
<span class="t" style="left:1090.21px;top:341.01px;font-size:19.6px;color:#dcdcdc;transform:scaleX(0.9958);">15</span>
<span class="t" style="left:1089.79px;top:404.79px;font-size:19.6px;color:#dcdcdc;transform:scaleX(1.0134);">10</span>
<span class="t" style="left:1101.12px;top:468.57px;font-size:19.6px;color:#dcdcdc;transform:scaleX(0.9894);">5</span>
<span class="t" style="left:1100.72px;top:531.75px;font-size:19.6px;color:#dcdcdc;transform:scaleX(1.0240);">0</span>
<span class="t" style="left:1093.16px;top:595.53px;font-size:19.6px;color:#dcdcdc;transform:scaleX(1.0798);">-5</span>
<span class="t" style="left:1082.60px;top:659.91px;font-size:19.6px;color:#dcdcdc;transform:scaleX(1.0340);">-10</span>
<span class="t" style="left:1081.87px;top:723.69px;font-size:19.6px;color:#dcdcdc;transform:scaleX(1.0625);">-15</span>
<span class="t" style="left:1192.45px;top:735.81px;font-size:19.6px;color:#dcdcdc;">100%</span>
<svg style="left:1342px;top:340px" width="260" height="410" viewBox="1342 340 260 410">
<rect x="1387.0" y="348.5" width="195.9000000000001" height="381.9" fill="#222"/>
<rect x="1387.0" y="411.25" width="195.9000000000001" height="2.1" fill="#8a8a8a"/>
<rect x="1387.0" y="476.05" width="195.9000000000001" height="2.1" fill="#8a8a8a"/>
<rect x="1387.0" y="539.95" width="195.9000000000001" height="2.1" fill="#8a8a8a"/>
<rect x="1387.0" y="603.35" width="195.9000000000001" height="2.1" fill="#8a8a8a"/>
<rect x="1387.0" y="667.05" width="195.9000000000001" height="2.1" fill="#8a8a8a"/>
<rect x="1386.0" y="347.0" width="197.9000000000001" height="3" fill="#8a8a8a"/>
<rect x="1386.0" y="728.9" width="197.9000000000001" height="3" fill="#8a8a8a"/>
<rect x="1385.95" y="347.5" width="2.1" height="383.9" fill="#8a8a8a"/>
<rect x="1581.8500000000001" y="347.5" width="2.1" height="383.9" fill="#8a8a8a"/>
<rect x="1385.95" y="731.9" width="2.1" height="7" fill="#e4e4e4"/>
<rect x="1581.8500000000001" y="731.9" width="2.1" height="7" fill="#e4e4e4"/>
<rect x="1379.3" y="347.20" width="6.7" height="2" fill="#e4e4e4"/>
<rect x="1379.3" y="411.30" width="6.7" height="2" fill="#e4e4e4"/>
<rect x="1379.3" y="476.10" width="6.7" height="2" fill="#e4e4e4"/>
<rect x="1379.3" y="540.00" width="6.7" height="2" fill="#e4e4e4"/>
<rect x="1379.3" y="603.40" width="6.7" height="2" fill="#e4e4e4"/>
<rect x="1379.3" y="667.10" width="6.7" height="2" fill="#e4e4e4"/>
<rect x="1379.3" y="728.80" width="6.7" height="2" fill="#e4e4e4"/>
<defs><linearGradient id="dg2" x1="0" x2="0" y1="0" y2="1"><stop offset="0" stop-color="#d2d23c"/><stop offset=".08" stop-color="#c4c400"/><stop offset=".55" stop-color="#c0c000"/><stop offset="1" stop-color="#6e6e00"/></linearGradient></defs>
<rect x="1406.1" y="539.6" width="158.80000000000024" height="11.199999999999932" fill="#000"/>
<rect x="1407.1" y="541.5" width="156.00000000000023" height="7.599999999999932" fill="url(#dg2)"/>
</svg>
<span class="t" style="left:1432.49px;top:324.74px;font-size:19.8px;color:#dcdcdc;transform:scaleX(1.0521);">Delta H</span>
<span class="t" style="left:1357.21px;top:341.01px;font-size:19.6px;color:#dcdcdc;transform:scaleX(0.9958);">15</span>
<span class="t" style="left:1356.79px;top:404.79px;font-size:19.6px;color:#dcdcdc;transform:scaleX(1.0134);">10</span>
<span class="t" style="left:1368.12px;top:468.57px;font-size:19.6px;color:#dcdcdc;transform:scaleX(0.9894);">5</span>
<span class="t" style="left:1367.72px;top:531.75px;font-size:19.6px;color:#dcdcdc;transform:scaleX(1.0240);">0</span>
<span class="t" style="left:1360.16px;top:595.53px;font-size:19.6px;color:#dcdcdc;transform:scaleX(1.0798);">-5</span>
<span class="t" style="left:1349.60px;top:659.91px;font-size:19.6px;color:#dcdcdc;transform:scaleX(1.0340);">-10</span>
<span class="t" style="left:1348.87px;top:723.69px;font-size:19.6px;color:#dcdcdc;transform:scaleX(1.0625);">-15</span>
<span class="t" style="left:1459.45px;top:735.81px;font-size:19.6px;color:#dcdcdc;">100%</span>
<div id="swatches" style="left:808px;top:766px;width:801.5px;height:220.5px;background:#000"></div>
<div style="left:836.3px;top:775.4px;width:134.6px;height:179.2px;border:1px solid #fff;background:linear-gradient(#c4bd9d 0,#c4bd9d 49.8%,#bebea3 49.8%)"></div>
<span class="t" style="left:887.44px;top:962.09px;font-size:15.6px;color:#fff;transform:scaleX(1.0275);">20%</span>
<div style="left:992.9px;top:775.4px;width:134.6px;height:179.2px;border:1px solid #fff;background:linear-gradient(#c2be82 0,#c2be82 49.8%,#c0c085 49.8%)"></div>
<span class="t" style="left:1044.54px;top:962.09px;font-size:15.6px;color:#fff;transform:scaleX(1.0130);">40%</span>
<div style="left:1149.6px;top:775.4px;width:134.6px;height:179.2px;border:1px solid #fff;background:linear-gradient(#c2bd67 0,#c2bd67 49.8%,#c0c069 49.8%)"></div>
<span class="t" style="left:1200.74px;top:962.09px;font-size:15.6px;color:#fff;transform:scaleX(1.0278);">60%</span>
<div style="left:1306.2px;top:775.4px;width:134.6px;height:179.2px;border:1px solid #fff;background:linear-gradient(#c3be46 0,#c3be46 49.8%,#c1c148 49.8%)"></div>
<span class="t" style="left:1357.51px;top:962.09px;font-size:15.6px;color:#fff;transform:scaleX(1.0239);">80%</span>
<div style="left:1462.9px;top:775.4px;width:134.6px;height:179.2px;border:1px solid #fff;background:linear-gradient(#c4bf00 0,#c4bf00 49.8%,#c1c014 49.8%)"></div>
<span class="t" style="left:1508.64px;top:962.09px;font-size:15.6px;color:#fff;transform:scaleX(1.0643);">100%</span>
<span class="t" style="left:820.40px;top:814.50px;font-size:15.6px;color:#fff;transform:rotate(-90deg) scaleX(1.0844) translate(-21.67px,-7.64px);">Actual</span>
<span class="t" style="left:820.40px;top:915.50px;font-size:15.6px;color:#fff;transform:rotate(-90deg) scaleX(1.0728) translate(-21.67px,-7.64px);">Target</span>
<div id="ciepanel" style="left:1619.5px;top:249.8px;width:941px;height:755.5px;background:#1b1b1b"></div>
<div style="left:1628px;top:258.7px;width:922px;height:737.5px;background:#333"></div>
<svg id="cie" style="left:1620px;top:250px" width="940" height="755" viewBox="1620 250 940 755">
<defs>
<clipPath id="cl"><path d="M2049.3 935.2L2049.2 935.2L2049.1 935.1L2049.0 935.2L2048.9 935.4L2048.7 935.4L2048.4 935.3L2048.2 935.3L2048.0 935.5L2047.9 935.7L2047.8 935.8L2047.6 935.9L2047.2 935.9L2046.8 935.9L2046.4 935.8L2045.9 935.8L2045.5 935.8L2045.0 935.8L2044.4 935.6L2043.7 935.3L2042.7 934.8L2041.3 933.9L2039.8 932.9L2038.1 931.7L2036.1 930.2L2033.9 928.4L2031.2 926.4L2028.3 924.0L2025.0 921.3L2021.5 918.3L2017.6 914.9L2013.3 911.3L2008.5 907.4L2003.2 903.0L1997.3 898.1L1990.8 892.8L1983.8 887.0L1976.3 880.8L1968.2 873.8L1959.4 866.0L1949.9 857.3L1939.9 847.6L1929.0 836.4L1916.7 822.8L1902.7 806.2L1887.3 786.8L1871.0 765.1L1853.9 740.9L1836.0 714.2L1817.7 685.2L1799.3 654.6L1781.0 623.2L1763.5 591.3L1747.4 559.5L1733.2 528.7L1720.8 499.3L1710.0 471.7L1701.1 446.6L1694.1 424.2L1688.9 404.6L1685.3 387.4L1683.1 372.5L1682.3 359.9L1682.7 348.9L1684.3 339.4L1687.0 331.4L1690.7 324.6L1695.3 319.2L1700.7 314.9L1706.9 311.8L1713.5 309.5L1720.6 308.0L1728.1 307.1L1736.0 306.5L1744.1 306.2L1752.2 306.1L1760.4 306.1L1768.6 306.2L1776.9 306.5L1785.4 306.9L1794.1 307.4L1803.1 307.9L1812.4 308.6L1822.0 309.4L1831.9 310.3L1842.2 311.3L1852.9 312.3L1864.1 313.5L1875.6 314.7L1887.7 316.0L1900.3 317.3L1913.4 318.8L1927.0 320.3L1941.2 321.9L1956.0 323.5L1971.3 325.3L1987.3 327.1L2003.9 329.0L2021.1 331.0L2038.9 333.0L2057.2 335.1L2076.1 337.3L2095.6 339.5L2115.6 341.8L2136.0 344.1L2156.8 346.5L2177.9 348.9L2199.1 351.4L2219.9 353.8L2240.4 356.1L2260.6 358.4L2280.8 360.7L2300.6 363.0L2319.7 365.2L2337.9 367.2L2355.2 369.2L2371.8 371.1L2387.4 372.9L2402.2 374.6L2416.0 376.2L2428.8 377.6L2440.8 379.0L2452.0 380.3L2462.3 381.5L2472.0 382.6L2481.1 383.6L2489.8 384.6L2498.0 385.5L2505.6 386.4L2512.7 387.2L2519.4 388.0L2525.5 388.7L2531.1 389.3L2536.1 389.9L2540.6 390.4L2544.5 390.9L2548.2 391.3L2551.5 391.7L2554.5 392.0L2557.1 392.3L2559.4 392.6L2561.3 392.8L2562.9 393.0L2564.4 393.1L2565.8 393.3L2567.1 393.5L2568.3 393.6L2569.4 393.7L2570.4 393.8L2571.5 394.0L2572.6 394.1L2573.6 394.2L2574.6 394.3L2575.4 394.4L2576.0 394.5L2576.4 394.5L2576.7 394.6L2577.0 394.6L2577.3 394.6L2577.5 394.6L2577.5 394.6Z"/></clipPath><clipPath id="ct"><path d="M2328.6 377.0L1859.2 333.0L1931.9 782.4Z"/></clipPath><clipPath id="cp"><rect x="1679.0" y="291.0" width="866.5" height="666.5"/></clipPath>
<linearGradient id="d0" gradientUnits="userSpaceOnUse" x1="1712" x2="1817" y1="0" y2="0"><stop offset=".000" stop-color="#090"/><stop offset="1.000" stop-color="#090"/></linearGradient>
<linearGradient id="d1" gradientUnits="userSpaceOnUse" x1="1697" x2="1862" y1="0" y2="0"><stop offset=".000" stop-color="#090"/><stop offset=".964" stop-color="#019900"/><stop offset="1.000" stop-color="#079900"/></linearGradient>
<linearGradient id="d2" gradientUnits="userSpaceOnUse" x1="1691" x2="1901" y1="0" y2="0"><stop offset=".000" stop-color="#090"/><stop offset=".800" stop-color="#039900"/><stop offset="1.000" stop-color="#319900"/></linearGradient>
<linearGradient id="d3" gradientUnits="userSpaceOnUse" x1="1688" x2="1937" y1="0" y2="0"><stop offset=".000" stop-color="#009901"/><stop offset=".687" stop-color="#029900"/><stop offset=".964" stop-color="#529900"/><stop offset="1.000" stop-color="#5f9900"/></linearGradient>
<linearGradient id="d4" gradientUnits="userSpaceOnUse" x1="1682" x2="1973" y1="0" y2="0"><stop offset=".000" stop-color="#009904"/><stop offset=".608" stop-color="#029900"/><stop offset=".845" stop-color="#529900"/><stop offset="1.000" stop-color="#969900"/></linearGradient>
<linearGradient id="d5" gradientUnits="userSpaceOnUse" x1="1682" x2="2006" y1="0" y2="0"><stop offset=".000" stop-color="#009907"/><stop offset=".546" stop-color="#019900"/><stop offset=".759" stop-color="#529900"/><stop offset=".907" stop-color="#999700"/><stop offset="1.000" stop-color="#996f00"/></linearGradient>
<linearGradient id="d6" gradientUnits="userSpaceOnUse" x1="1679" x2="2042" y1="0" y2="0"><stop offset=".000" stop-color="#00990a"/><stop offset=".496" stop-color="#090"/><stop offset=".686" stop-color="#529900"/><stop offset=".818" stop-color="#999600"/><stop offset=".909" stop-color="#996b00"/><stop offset="1.000" stop-color="#995000"/></linearGradient>
<linearGradient id="d7" gradientUnits="userSpaceOnUse" x1="1679" x2="2078" y1="0" y2="0"><stop offset=".000" stop-color="#00990d"/><stop offset=".459" stop-color="#039901"/><stop offset=".624" stop-color="#529900"/><stop offset=".737" stop-color="#989900"/><stop offset=".835" stop-color="#996800"/><stop offset=".970" stop-color="#994100"/><stop offset="1.000" stop-color="#993b00"/></linearGradient>
<linearGradient id="d8" gradientUnits="userSpaceOnUse" x1="1679" x2="2111" y1="0" y2="0"><stop offset=".000" stop-color="#009910"/><stop offset=".424" stop-color="#029905"/><stop offset=".576" stop-color="#529900"/><stop offset=".681" stop-color="#989900"/><stop offset=".764" stop-color="#996a00"/><stop offset=".882" stop-color="#940"/><stop offset="1.000" stop-color="#992d00"/></linearGradient>
<linearGradient id="d9" gradientUnits="userSpaceOnUse" x1="1679" x2="2147" y1="0" y2="0"><stop offset=".000" stop-color="#009913"/><stop offset=".391" stop-color="#019909"/><stop offset=".532" stop-color="#529903"/><stop offset=".628" stop-color="#990"/><stop offset=".699" stop-color="#996c00"/><stop offset=".808" stop-color="#994500"/><stop offset=".981" stop-color="#992400"/><stop offset="1.000" stop-color="#992100"/></linearGradient>
<linearGradient id="d10" gradientUnits="userSpaceOnUse" x1="1679" x2="2183" y1="0" y2="0"><stop offset=".000" stop-color="#009916"/><stop offset=".363" stop-color="#01990d"/><stop offset=".494" stop-color="#529907"/><stop offset=".583" stop-color="#999903"/><stop offset=".649" stop-color="#996c00"/><stop offset=".750" stop-color="#940"/><stop offset=".911" stop-color="#992300"/><stop offset="1.000" stop-color="#991800"/></linearGradient>
<linearGradient id="d11" gradientUnits="userSpaceOnUse" x1="1679" x2="2216" y1="0" y2="0"><stop offset=".000" stop-color="#009919"/><stop offset=".341" stop-color="#091"/><stop offset=".464" stop-color="#52990c"/><stop offset=".547" stop-color="#999808"/><stop offset=".609" stop-color="#996b03"/><stop offset=".704" stop-color="#994300"/><stop offset=".860" stop-color="#920"/><stop offset="1.000" stop-color="#910"/></linearGradient>
<linearGradient id="d12" gradientUnits="userSpaceOnUse" x1="1679" x2="2252" y1="0" y2="0"><stop offset=".000" stop-color="#00991c"/><stop offset=".325" stop-color="#039915"/><stop offset=".435" stop-color="#529911"/><stop offset=".513" stop-color="#99970d"/><stop offset=".571" stop-color="#996a07"/><stop offset=".660" stop-color="#994302"/><stop offset=".806" stop-color="#992100"/><stop offset="1.000" stop-color="#990b00"/></linearGradient>
<linearGradient id="d13" gradientUnits="userSpaceOnUse" x1="1679" x2="2285" y1="0" y2="0"><stop offset=".000" stop-color="#00991f"/><stop offset=".307" stop-color="#029919"/><stop offset=".411" stop-color="#529916"/><stop offset=".485" stop-color="#999713"/><stop offset=".540" stop-color="#996a0b"/><stop offset=".619" stop-color="#994405"/><stop offset=".752" stop-color="#920"/><stop offset=".995" stop-color="#990700"/><stop offset="1.000" stop-color="#990700"/></linearGradient>
<linearGradient id="d14" gradientUnits="userSpaceOnUse" x1="1679" x2="2321" y1="0" y2="0"><stop offset=".000" stop-color="#092"/><stop offset=".290" stop-color="#01991d"/><stop offset=".388" stop-color="#52991b"/><stop offset=".458" stop-color="#999618"/><stop offset=".509" stop-color="#99690f"/><stop offset=".584" stop-color="#994308"/><stop offset=".710" stop-color="#992202"/><stop offset=".939" stop-color="#990600"/><stop offset="1.000" stop-color="#990200"/></linearGradient>
<linearGradient id="d15" gradientUnits="userSpaceOnUse" x1="1679" x2="2357" y1="0" y2="0"><stop offset=".000" stop-color="#009925"/><stop offset=".274" stop-color="#019922"/><stop offset=".367" stop-color="#529920"/><stop offset=".429" stop-color="#97991e"/><stop offset=".482" stop-color="#996813"/><stop offset=".553" stop-color="#99430b"/><stop offset=".673" stop-color="#992104"/><stop offset=".889" stop-color="#990600"/><stop offset="1.000" stop-color="#900"/></linearGradient>
<linearGradient id="d16" gradientUnits="userSpaceOnUse" x1="1679" x2="2393" y1="0" y2="0"><stop offset=".000" stop-color="#009928"/><stop offset=".261" stop-color="#009926"/><stop offset=".345" stop-color="#4d9925"/><stop offset=".408" stop-color="#989924"/><stop offset=".454" stop-color="#996b18"/><stop offset=".521" stop-color="#99440f"/><stop offset=".630" stop-color="#992306"/><stop offset=".828" stop-color="#990700"/><stop offset=".983" stop-color="#900"/><stop offset="1.000" stop-color="#900"/></linearGradient>
<linearGradient id="d17" gradientUnits="userSpaceOnUse" x1="1679" x2="2426" y1="0" y2="0"><stop offset=".000" stop-color="#00992c"/><stop offset=".253" stop-color="#03992b"/><stop offset=".333" stop-color="#52992a"/><stop offset=".390" stop-color="#99992a"/><stop offset=".430" stop-color="#996d1d"/><stop offset=".490" stop-color="#994713"/><stop offset=".590" stop-color="#992509"/><stop offset=".771" stop-color="#990901"/><stop offset=".928" stop-color="#900"/><stop offset="1.000" stop-color="#900"/></linearGradient>
<linearGradient id="d18" gradientUnits="userSpaceOnUse" x1="1679" x2="2462" y1="0" y2="0"><stop offset=".000" stop-color="#00992f"/><stop offset=".241" stop-color="#02992f"/><stop offset=".318" stop-color="#52992f"/><stop offset=".372" stop-color="#99992f"/><stop offset=".410" stop-color="#996c22"/><stop offset=".467" stop-color="#994616"/><stop offset=".563" stop-color="#99240c"/><stop offset=".736" stop-color="#990803"/><stop offset=".881" stop-color="#900"/><stop offset="1.000" stop-color="#900"/></linearGradient>
<linearGradient id="d19" gradientUnits="userSpaceOnUse" x1="1679" x2="2495" y1="0" y2="0"><stop offset=".000" stop-color="#009932"/><stop offset=".232" stop-color="#019934"/><stop offset=".305" stop-color="#529935"/><stop offset=".357" stop-color="#999835"/><stop offset=".393" stop-color="#996c26"/><stop offset=".449" stop-color="#994519"/><stop offset=".540" stop-color="#99240e"/><stop offset=".706" stop-color="#990804"/><stop offset=".842" stop-color="#900"/><stop offset="1.000" stop-color="#900"/></linearGradient>
<linearGradient id="d20" gradientUnits="userSpaceOnUse" x1="1679" x2="2531" y1="0" y2="0"><stop offset=".000" stop-color="#009936"/><stop offset=".222" stop-color="#009939"/><stop offset=".292" stop-color="#52993a"/><stop offset=".342" stop-color="#99973b"/><stop offset=".377" stop-color="#996b2b"/><stop offset=".430" stop-color="#99441d"/><stop offset=".518" stop-color="#992310"/><stop offset=".676" stop-color="#990706"/><stop offset=".803" stop-color="#990002"/><stop offset="1.000" stop-color="#900"/></linearGradient>
<linearGradient id="d21" gradientUnits="userSpaceOnUse" x1="1679" x2="2546" y1="0" y2="0"><stop offset=".000" stop-color="#009939"/><stop offset=".218" stop-color="#00993e"/><stop offset=".284" stop-color="#4d9940"/><stop offset=".336" stop-color="#999641"/><stop offset=".370" stop-color="#996a2f"/><stop offset=".422" stop-color="#994420"/><stop offset=".509" stop-color="#992212"/><stop offset=".664" stop-color="#990707"/><stop offset=".789" stop-color="#990003"/><stop offset="1.000" stop-color="#900"/></linearGradient>
<linearGradient id="d22" gradientUnits="userSpaceOnUse" x1="1679" x2="2546" y1="0" y2="0"><stop offset=".000" stop-color="#00993d"/><stop offset=".221" stop-color="#029943"/><stop offset=".287" stop-color="#519946"/><stop offset=".332" stop-color="#979949"/><stop offset=".374" stop-color="#996632"/><stop offset=".429" stop-color="#993f22"/><stop offset=".519" stop-color="#991f14"/><stop offset=".685" stop-color="#990408"/><stop offset=".834" stop-color="#990003"/><stop offset="1.000" stop-color="#900"/></linearGradient>
<linearGradient id="d23" gradientUnits="userSpaceOnUse" x1="1679" x2="2546" y1="0" y2="0"><stop offset=".000" stop-color="#009940"/><stop offset=".221" stop-color="#029948"/><stop offset=".287" stop-color="#51994c"/><stop offset=".332" stop-color="#97994f"/><stop offset=".370" stop-color="#996838"/><stop offset=".422" stop-color="#994227"/><stop offset=".509" stop-color="#992117"/><stop offset=".664" stop-color="#99060a"/><stop offset=".785" stop-color="#990005"/><stop offset="1.000" stop-color="#900"/></linearGradient>
<linearGradient id="d24" gradientUnits="userSpaceOnUse" x1="1679" x2="2546" y1="0" y2="0"><stop offset=".000" stop-color="#094"/><stop offset=".221" stop-color="#01994d"/><stop offset=".287" stop-color="#519952"/><stop offset=".332" stop-color="#989956"/><stop offset=".367" stop-color="#996b3f"/><stop offset=".415" stop-color="#99452c"/><stop offset=".495" stop-color="#99241b"/><stop offset=".640" stop-color="#99090d"/><stop offset=".765" stop-color="#990007"/><stop offset="1.000" stop-color="#990001"/></linearGradient>
<linearGradient id="d25" gradientUnits="userSpaceOnUse" x1="1682" x2="2546" y1="0" y2="0"><stop offset=".000" stop-color="#009947"/><stop offset=".219" stop-color="#009952"/><stop offset=".285" stop-color="#519958"/><stop offset=".330" stop-color="#99995d"/><stop offset=".361" stop-color="#996e46"/><stop offset=".410" stop-color="#994731"/><stop offset=".490" stop-color="#99251e"/><stop offset=".632" stop-color="#99090f"/><stop offset=".757" stop-color="#990009"/><stop offset="1.000" stop-color="#990002"/></linearGradient>
<linearGradient id="d26" gradientUnits="userSpaceOnUse" x1="1682" x2="2546" y1="0" y2="0"><stop offset=".000" stop-color="#00994b"/><stop offset=".222" stop-color="#039958"/><stop offset=".285" stop-color="#51995e"/><stop offset=".330" stop-color="#999864"/><stop offset=".361" stop-color="#996d4b"/><stop offset=".410" stop-color="#994634"/><stop offset=".490" stop-color="#992421"/><stop offset=".632" stop-color="#990811"/><stop offset=".753" stop-color="#99000a"/><stop offset="1.000" stop-color="#990003"/></linearGradient>
<linearGradient id="d27" gradientUnits="userSpaceOnUse" x1="1682" x2="2546" y1="0" y2="0"><stop offset=".000" stop-color="#00994f"/><stop offset=".222" stop-color="#02995e"/><stop offset=".285" stop-color="#519965"/><stop offset=".330" stop-color="#99986a"/><stop offset=".361" stop-color="#996c50"/><stop offset=".410" stop-color="#994538"/><stop offset=".490" stop-color="#992423"/><stop offset=".632" stop-color="#990813"/><stop offset=".750" stop-color="#99000b"/><stop offset="1.000" stop-color="#990004"/></linearGradient>
<linearGradient id="d28" gradientUnits="userSpaceOnUse" x1="1685" x2="2546" y1="0" y2="0"><stop offset=".000" stop-color="#009953"/><stop offset=".220" stop-color="#019963"/><stop offset=".282" stop-color="#51996b"/><stop offset=".328" stop-color="#999771"/><stop offset=".359" stop-color="#996b55"/><stop offset=".408" stop-color="#99443c"/><stop offset=".488" stop-color="#992326"/><stop offset=".631" stop-color="#990814"/><stop offset=".746" stop-color="#99000d"/><stop offset="1.000" stop-color="#990004"/></linearGradient>
<linearGradient id="d29" gradientUnits="userSpaceOnUse" x1="1685" x2="2546" y1="0" y2="0"><stop offset=".000" stop-color="#009957"/><stop offset=".220" stop-color="#019969"/><stop offset=".282" stop-color="#519972"/><stop offset=".328" stop-color="#999678"/><stop offset=".359" stop-color="#996b5a"/><stop offset=".408" stop-color="#99443f"/><stop offset=".488" stop-color="#992229"/><stop offset=".634" stop-color="#990716"/><stop offset=".746" stop-color="#99000e"/><stop offset="1.000" stop-color="#990005"/></linearGradient>
<linearGradient id="d30" gradientUnits="userSpaceOnUse" x1="1685" x2="2546" y1="0" y2="0"><stop offset=".000" stop-color="#00995a"/><stop offset=".220" stop-color="#00996f"/><stop offset=".279" stop-color="#4c9978"/><stop offset=".324" stop-color="#969981"/><stop offset=".362" stop-color="#99665d"/><stop offset=".411" stop-color="#994142"/><stop offset=".495" stop-color="#99202a"/><stop offset=".648" stop-color="#990516"/><stop offset=".780" stop-color="#99000e"/><stop offset="1.000" stop-color="#990006"/></linearGradient>
<linearGradient id="d31" gradientUnits="userSpaceOnUse" x1="1688" x2="2546" y1="0" y2="0"><stop offset=".000" stop-color="#00995f"/><stop offset=".220" stop-color="#039975"/><stop offset=".280" stop-color="#519980"/><stop offset=".322" stop-color="#979989"/><stop offset=".357" stop-color="#996965"/><stop offset=".406" stop-color="#994247"/><stop offset=".486" stop-color="#99212e"/><stop offset=".633" stop-color="#990619"/><stop offset=".745" stop-color="#901"/><stop offset="1.000" stop-color="#990007"/></linearGradient>
<linearGradient id="d32" gradientUnits="userSpaceOnUse" x1="1688" x2="2546" y1="0" y2="0"><stop offset=".000" stop-color="#009963"/><stop offset=".220" stop-color="#02997c"/><stop offset=".280" stop-color="#519987"/><stop offset=".322" stop-color="#989991"/><stop offset=".353" stop-color="#996c6d"/><stop offset=".399" stop-color="#99454e"/><stop offset=".472" stop-color="#992534"/><stop offset=".605" stop-color="#99091d"/><stop offset=".720" stop-color="#990014"/><stop offset="1.000" stop-color="#990008"/></linearGradient>
<linearGradient id="d33" gradientUnits="userSpaceOnUse" x1="1691" x2="2546" y1="0" y2="0"><stop offset=".000" stop-color="#009967"/><stop offset=".218" stop-color="#019982"/><stop offset=".277" stop-color="#51998e"/><stop offset=".319" stop-color="#989899"/><stop offset=".351" stop-color="#996b73"/><stop offset=".396" stop-color="#994552"/><stop offset=".470" stop-color="#992436"/><stop offset=".604" stop-color="#99081f"/><stop offset=".716" stop-color="#990015"/><stop offset="1.000" stop-color="#990009"/></linearGradient>
<linearGradient id="d34" gradientUnits="userSpaceOnUse" x1="1691" x2="2540" y1="0" y2="0"><stop offset=".000" stop-color="#00996b"/><stop offset=".219" stop-color="#098"/><stop offset=".279" stop-color="#519996"/><stop offset=".325" stop-color="#968f99"/><stop offset=".364" stop-color="#995f6f"/><stop offset=".417" stop-color="#993a4d"/><stop offset=".505" stop-color="#991a31"/><stop offset=".671" stop-color="#99001a"/><stop offset="1.000" stop-color="#99000a"/></linearGradient>
<linearGradient id="d35" gradientUnits="userSpaceOnUse" x1="1694" x2="2537" y1="0" y2="0"><stop offset=".000" stop-color="#009970"/><stop offset=".214" stop-color="#00998e"/><stop offset=".224" stop-color="#089990"/><stop offset=".278" stop-color="#4e9599"/><stop offset=".331" stop-color="#998598"/><stop offset=".367" stop-color="#995b71"/><stop offset=".420" stop-color="#99374f"/><stop offset=".512" stop-color="#991832"/><stop offset=".676" stop-color="#99001c"/><stop offset="1.000" stop-color="#99000b"/></linearGradient>
<linearGradient id="d36" gradientUnits="userSpaceOnUse" x1="1694" x2="2534" y1="0" y2="0"><stop offset=".000" stop-color="#009974"/><stop offset=".207" stop-color="#009993"/><stop offset=".221" stop-color="#039996"/><stop offset=".332" stop-color="#937f99"/><stop offset=".339" stop-color="#997a95"/><stop offset=".379" stop-color="#99516d"/><stop offset=".439" stop-color="#992e4b"/><stop offset=".546" stop-color="#99112e"/><stop offset=".693" stop-color="#99001c"/><stop offset="1.000" stop-color="#99000c"/></linearGradient>
<linearGradient id="d37" gradientUnits="userSpaceOnUse" x1="1694" x2="2528" y1="0" y2="0"><stop offset=".000" stop-color="#009978"/><stop offset=".219" stop-color="#009699"/><stop offset=".306" stop-color="#678099"/><stop offset=".345" stop-color="#997497"/><stop offset=".385" stop-color="#994d6f"/><stop offset=".450" stop-color="#992b4c"/><stop offset=".561" stop-color="#990e2e"/><stop offset=".698" stop-color="#99001d"/><stop offset="1.000" stop-color="#99000d"/></linearGradient>
<linearGradient id="d38" gradientUnits="userSpaceOnUse" x1="1697" x2="2525" y1="0" y2="0"><stop offset=".000" stop-color="#00997d"/><stop offset=".188" stop-color="#009699"/><stop offset=".221" stop-color="#018f99"/><stop offset=".348" stop-color="#996f98"/><stop offset=".388" stop-color="#994a71"/><stop offset=".453" stop-color="#99294e"/><stop offset=".565" stop-color="#990d30"/><stop offset=".696" stop-color="#99001f"/><stop offset="1.000" stop-color="#99000e"/></linearGradient>
<linearGradient id="d39" gradientUnits="userSpaceOnUse" x1="1697" x2="2522" y1="0" y2="0"><stop offset=".000" stop-color="#009982"/><stop offset=".160" stop-color="#009699"/><stop offset=".222" stop-color="#008999"/><stop offset=".349" stop-color="#936a99"/><stop offset=".360" stop-color="#996191"/><stop offset=".407" stop-color="#993d69"/><stop offset=".484" stop-color="#991f46"/><stop offset=".618" stop-color="#99052a"/><stop offset=".727" stop-color="#99001e"/><stop offset="1.000" stop-color="#99000f"/></linearGradient>
<linearGradient id="d40" gradientUnits="userSpaceOnUse" x1="1700" x2="2519" y1="0" y2="0"><stop offset=".000" stop-color="#009987"/><stop offset=".128" stop-color="#009699"/><stop offset=".223" stop-color="#038299"/><stop offset=".359" stop-color="#996097"/><stop offset=".403" stop-color="#993f6f"/><stop offset=".473" stop-color="#99214d"/><stop offset=".597" stop-color="#99082f"/><stop offset=".703" stop-color="#902"/><stop offset="1.000" stop-color="#990010"/></linearGradient>
<linearGradient id="d41" gradientUnits="userSpaceOnUse" x1="1700" x2="2513" y1="0" y2="0"><stop offset=".000" stop-color="#00998b"/><stop offset=".103" stop-color="#009699"/><stop offset=".225" stop-color="#027d99"/><stop offset=".365" stop-color="#995c99"/><stop offset=".410" stop-color="#993c71"/><stop offset=".483" stop-color="#991e4d"/><stop offset=".609" stop-color="#990630"/><stop offset=".712" stop-color="#990023"/><stop offset="1.000" stop-color="#901"/></linearGradient>
<linearGradient id="d42" gradientUnits="userSpaceOnUse" x1="1703" x2="2510" y1="0" y2="0"><stop offset=".000" stop-color="#009990"/><stop offset=".074" stop-color="#009599"/><stop offset=".223" stop-color="#017899"/><stop offset=".364" stop-color="#945899"/><stop offset=".379" stop-color="#994e8e"/><stop offset=".431" stop-color="#993068"/><stop offset=".517" stop-color="#991546"/><stop offset=".669" stop-color="#990029"/><stop offset=".981" stop-color="#990013"/><stop offset="1.000" stop-color="#990012"/></linearGradient>
<linearGradient id="d43" gradientUnits="userSpaceOnUse" x1="1703" x2="2507" y1="0" y2="0"><stop offset=".000" stop-color="#009995"/><stop offset=".093" stop-color="#008d99"/><stop offset=".224" stop-color="#007399"/><stop offset=".369" stop-color="#935399"/><stop offset=".381" stop-color="#994d93"/><stop offset=".433" stop-color="#992f6b"/><stop offset=".519" stop-color="#991448"/><stop offset=".668" stop-color="#99002b"/><stop offset=".970" stop-color="#990014"/><stop offset="1.000" stop-color="#990013"/></linearGradient>
<linearGradient id="d44" gradientUnits="userSpaceOnUse" x1="1706" x2="2501" y1="0" y2="0"><stop offset=".000" stop-color="#009799"/><stop offset=".223" stop-color="#006f99"/><stop offset=".370" stop-color="#8d4f99"/><stop offset=".385" stop-color="#994995"/><stop offset=".438" stop-color="#992c6d"/><stop offset=".525" stop-color="#99134a"/><stop offset=".672" stop-color="#99002d"/><stop offset=".970" stop-color="#990016"/><stop offset="1.000" stop-color="#990014"/></linearGradient>
<linearGradient id="d45" gradientUnits="userSpaceOnUse" x1="1706" x2="2498" y1="0" y2="0"><stop offset=".000" stop-color="#009299"/><stop offset=".227" stop-color="#026a99"/><stop offset=".383" stop-color="#944999"/><stop offset=".402" stop-color="#993e8c"/><stop offset=".462" stop-color="#992365"/><stop offset=".561" stop-color="#990c43"/><stop offset=".682" stop-color="#99002e"/><stop offset=".985" stop-color="#990016"/><stop offset="1.000" stop-color="#990016"/></linearGradient>
<linearGradient id="d46" gradientUnits="userSpaceOnUse" x1="1709" x2="2495" y1="0" y2="0"><stop offset=".000" stop-color="#008d99"/><stop offset=".225" stop-color="#026699"/><stop offset=".385" stop-color="#934599"/><stop offset=".401" stop-color="#993d90"/><stop offset=".462" stop-color="#992268"/><stop offset=".561" stop-color="#990b46"/><stop offset=".676" stop-color="#990031"/><stop offset=".966" stop-color="#990018"/><stop offset="1.000" stop-color="#990017"/></linearGradient>
<linearGradient id="d47" gradientUnits="userSpaceOnUse" x1="1709" x2="2489" y1="0" y2="0"><stop offset=".000" stop-color="#008999"/><stop offset=".227" stop-color="#016299"/><stop offset=".392" stop-color="#924199"/><stop offset=".404" stop-color="#993c95"/><stop offset=".462" stop-color="#99236d"/><stop offset=".554" stop-color="#990d4b"/><stop offset=".673" stop-color="#903"/><stop offset=".950" stop-color="#99001b"/><stop offset="1.000" stop-color="#990018"/></linearGradient>
<linearGradient id="d48" gradientUnits="userSpaceOnUse" x1="1712" x2="2486" y1="0" y2="0"><stop offset=".000" stop-color="#008499"/><stop offset=".225" stop-color="#005f99"/><stop offset=".395" stop-color="#913d99"/><stop offset=".407" stop-color="#993996"/><stop offset=".465" stop-color="#99216f"/><stop offset=".558" stop-color="#990b4c"/><stop offset=".674" stop-color="#990035"/><stop offset=".950" stop-color="#99001c"/><stop offset="1.000" stop-color="#990019"/></linearGradient>
<linearGradient id="d49" gradientUnits="userSpaceOnUse" x1="1712" x2="2483" y1="0" y2="0"><stop offset=".000" stop-color="#008099"/><stop offset=".230" stop-color="#025b99"/><stop offset=".405" stop-color="#933899"/><stop offset=".420" stop-color="#993291"/><stop offset=".486" stop-color="#991a69"/><stop offset=".591" stop-color="#990647"/><stop offset=".689" stop-color="#990035"/><stop offset=".969" stop-color="#99001c"/><stop offset="1.000" stop-color="#99001a"/></linearGradient>
<linearGradient id="d50" gradientUnits="userSpaceOnUse" x1="1715" x2="2480" y1="0" y2="0"><stop offset=".000" stop-color="#007c99"/><stop offset=".227" stop-color="#025799"/><stop offset=".412" stop-color="#963499"/><stop offset=".467" stop-color="#991f76"/><stop offset=".557" stop-color="#990b52"/><stop offset=".667" stop-color="#99003a"/><stop offset=".922" stop-color="#990020"/><stop offset="1.000" stop-color="#99001c"/></linearGradient>
<linearGradient id="d51" gradientUnits="userSpaceOnUse" x1="1718" x2="2474" y1="0" y2="0"><stop offset=".000" stop-color="#007899"/><stop offset=".226" stop-color="#015499"/><stop offset=".417" stop-color="#953199"/><stop offset=".440" stop-color="#99288b"/><stop offset=".516" stop-color="#991263"/><stop offset=".639" stop-color="#990042"/><stop offset=".861" stop-color="#990026"/><stop offset="1.000" stop-color="#99001d"/></linearGradient>
<linearGradient id="d52" gradientUnits="userSpaceOnUse" x1="1718" x2="2471" y1="0" y2="0"><stop offset=".000" stop-color="#007599"/><stop offset=".227" stop-color="#015199"/><stop offset=".422" stop-color="#942e99"/><stop offset=".438" stop-color="#992992"/><stop offset=".510" stop-color="#991369"/><stop offset=".625" stop-color="#990147"/><stop offset=".829" stop-color="#99002b"/><stop offset="1.000" stop-color="#99001e"/></linearGradient>
<linearGradient id="d53" gradientUnits="userSpaceOnUse" x1="1721" x2="2468" y1="0" y2="0"><stop offset=".000" stop-color="#007199"/><stop offset=".229" stop-color="#034e99"/><stop offset=".430" stop-color="#962a99"/><stop offset=".514" stop-color="#99126b"/><stop offset=".631" stop-color="#990048"/><stop offset=".835" stop-color="#99002c"/><stop offset="1.000" stop-color="#99001f"/></linearGradient>
<linearGradient id="d54" gradientUnits="userSpaceOnUse" x1="1721" x2="2462" y1="0" y2="0"><stop offset=".000" stop-color="#006e99"/><stop offset=".231" stop-color="#024b99"/><stop offset=".437" stop-color="#952799"/><stop offset=".466" stop-color="#991e89"/><stop offset=".547" stop-color="#990b63"/><stop offset=".656" stop-color="#990046"/><stop offset=".879" stop-color="#99002a"/><stop offset="1.000" stop-color="#990021"/></linearGradient>
<linearGradient id="d55" gradientUnits="userSpaceOnUse" x1="1724" x2="2459" y1="0" y2="0"><stop offset=".000" stop-color="#006a99"/><stop offset=".229" stop-color="#014999"/><stop offset=".441" stop-color="#942599"/><stop offset=".457" stop-color="#992092"/><stop offset=".535" stop-color="#990d6a"/><stop offset=".649" stop-color="#99004a"/><stop offset=".861" stop-color="#99002d"/><stop offset="1.000" stop-color="#902"/></linearGradient>
<linearGradient id="d56" gradientUnits="userSpaceOnUse" x1="1724" x2="2456" y1="0" y2="0"><stop offset=".000" stop-color="#006799"/><stop offset=".230" stop-color="#014699"/><stop offset=".447" stop-color="#932299"/><stop offset=".463" stop-color="#991e93"/><stop offset=".541" stop-color="#990b6b"/><stop offset=".648" stop-color="#99004d"/><stop offset=".852" stop-color="#99002f"/><stop offset="1.000" stop-color="#990024"/></linearGradient>
<linearGradient id="d57" gradientUnits="userSpaceOnUse" x1="1727" x2="2450" y1="0" y2="0"><stop offset=".000" stop-color="#006499"/><stop offset=".232" stop-color="#034399"/><stop offset=".456" stop-color="#951f99"/><stop offset=".490" stop-color="#991687"/><stop offset=".581" stop-color="#990561"/><stop offset=".685" stop-color="#990048"/><stop offset=".917" stop-color="#99002b"/><stop offset="1.000" stop-color="#990025"/></linearGradient>
<linearGradient id="d58" gradientUnits="userSpaceOnUse" x1="1730" x2="2447" y1="0" y2="0"><stop offset=".000" stop-color="#006199"/><stop offset=".230" stop-color="#024199"/><stop offset=".460" stop-color="#941c99"/><stop offset=".481" stop-color="#991790"/><stop offset=".569" stop-color="#990668"/><stop offset=".661" stop-color="#99004f"/><stop offset=".870" stop-color="#990031"/><stop offset="1.000" stop-color="#990026"/></linearGradient>
<linearGradient id="d59" gradientUnits="userSpaceOnUse" x1="1730" x2="2444" y1="0" y2="0"><stop offset=".000" stop-color="#005e99"/><stop offset=".231" stop-color="#023f99"/><stop offset=".466" stop-color="#931a99"/><stop offset=".483" stop-color="#991693"/><stop offset=".567" stop-color="#99066c"/><stop offset=".660" stop-color="#990052"/><stop offset=".866" stop-color="#903"/><stop offset="1.000" stop-color="#990028"/></linearGradient>
<linearGradient id="d60" gradientUnits="userSpaceOnUse" x1="1733" x2="2441" y1="0" y2="0"><stop offset=".000" stop-color="#005b99"/><stop offset=".229" stop-color="#013d99"/><stop offset=".475" stop-color="#951799"/><stop offset=".517" stop-color="#990e84"/><stop offset=".619" stop-color="#99005e"/><stop offset=".788" stop-color="#99003e"/><stop offset="1.000" stop-color="#990029"/></linearGradient>
<linearGradient id="d61" gradientUnits="userSpaceOnUse" x1="1733" x2="2435" y1="0" y2="0"><stop offset=".000" stop-color="#005999"/><stop offset=".235" stop-color="#033a99"/><stop offset=".483" stop-color="#941599"/><stop offset=".504" stop-color="#991190"/><stop offset=".598" stop-color="#990168"/><stop offset=".748" stop-color="#990046"/><stop offset="1.000" stop-color="#99002b"/></linearGradient>
<linearGradient id="d62" gradientUnits="userSpaceOnUse" x1="1736" x2="2432" y1="0" y2="0"><stop offset=".000" stop-color="#005699"/><stop offset=".233" stop-color="#023899"/><stop offset=".491" stop-color="#961299"/><stop offset=".599" stop-color="#99006b"/><stop offset=".750" stop-color="#990048"/><stop offset="1.000" stop-color="#99002c"/></linearGradient>
<linearGradient id="d63" gradientUnits="userSpaceOnUse" x1="1739" x2="2429" y1="0" y2="0"><stop offset=".000" stop-color="#005399"/><stop offset=".230" stop-color="#023699"/><stop offset=".496" stop-color="#951099"/><stop offset=".552" stop-color="#99067f"/><stop offset=".643" stop-color="#990060"/><stop offset=".822" stop-color="#99003f"/><stop offset="1.000" stop-color="#99002e"/></linearGradient>
<linearGradient id="d64" gradientUnits="userSpaceOnUse" x1="1739" x2="2423" y1="0" y2="0"><stop offset=".000" stop-color="#005199"/><stop offset=".232" stop-color="#013599"/><stop offset=".504" stop-color="#950f99"/><stop offset=".531" stop-color="#990a8f"/><stop offset=".623" stop-color="#99006a"/><stop offset=".781" stop-color="#990048"/><stop offset="1.000" stop-color="#990030"/></linearGradient>
<linearGradient id="d65" gradientUnits="userSpaceOnUse" x1="1742" x2="2420" y1="0" y2="0"><stop offset=".000" stop-color="#004e99"/><stop offset=".235" stop-color="#033299"/><stop offset=".513" stop-color="#960c99"/><stop offset=".615" stop-color="#99006f"/><stop offset=".770" stop-color="#99004c"/><stop offset="1.000" stop-color="#990031"/></linearGradient>
<linearGradient id="d66" gradientUnits="userSpaceOnUse" x1="1745" x2="2417" y1="0" y2="0"><stop offset=".000" stop-color="#004c99"/><stop offset=".232" stop-color="#023199"/><stop offset=".518" stop-color="#960a99"/><stop offset=".589" stop-color="#99007b"/><stop offset=".723" stop-color="#990056"/><stop offset=".951" stop-color="#990037"/><stop offset="1.000" stop-color="#903"/></linearGradient>
<linearGradient id="d67" gradientUnits="userSpaceOnUse" x1="1745" x2="2411" y1="0" y2="0"><stop offset=".000" stop-color="#004a99"/><stop offset=".234" stop-color="#022f99"/><stop offset=".527" stop-color="#950999"/><stop offset=".559" stop-color="#99048d"/><stop offset=".671" stop-color="#906"/><stop offset=".856" stop-color="#904"/><stop offset="1.000" stop-color="#990034"/></linearGradient>
<linearGradient id="d68" gradientUnits="userSpaceOnUse" x1="1748" x2="2408" y1="0" y2="0"><stop offset=".000" stop-color="#004799"/><stop offset=".232" stop-color="#012d99"/><stop offset=".532" stop-color="#940799"/><stop offset=".555" stop-color="#990492"/><stop offset=".664" stop-color="#99006a"/><stop offset=".841" stop-color="#990048"/><stop offset="1.000" stop-color="#990036"/></linearGradient>
<linearGradient id="d69" gradientUnits="userSpaceOnUse" x1="1751" x2="2405" y1="0" y2="0"><stop offset=".000" stop-color="#004599"/><stop offset=".234" stop-color="#032b99"/><stop offset=".541" stop-color="#960599"/><stop offset=".638" stop-color="#990075"/><stop offset=".794" stop-color="#990051"/><stop offset="1.000" stop-color="#990038"/></linearGradient>
<linearGradient id="d70" gradientUnits="userSpaceOnUse" x1="1751" x2="2402" y1="0" y2="0"><stop offset=".000" stop-color="#004399"/><stop offset=".235" stop-color="#032a99"/><stop offset=".548" stop-color="#950399"/><stop offset=".581" stop-color="#99008d"/><stop offset=".700" stop-color="#906"/><stop offset=".899" stop-color="#904"/><stop offset="1.000" stop-color="#990039"/></linearGradient>
<linearGradient id="d71" gradientUnits="userSpaceOnUse" x1="1754" x2="2396" y1="0" y2="0"><stop offset=".000" stop-color="#004199"/><stop offset=".234" stop-color="#022999"/><stop offset=".556" stop-color="#940299"/><stop offset=".579" stop-color="#990092"/><stop offset=".696" stop-color="#99006b"/><stop offset=".888" stop-color="#990048"/><stop offset="1.000" stop-color="#99003b"/></linearGradient>
<linearGradient id="d72" gradientUnits="userSpaceOnUse" x1="1757" x2="2393" y1="0" y2="0"><stop offset=".000" stop-color="#003f99"/><stop offset=".231" stop-color="#022799"/><stop offset=".566" stop-color="#960099"/><stop offset=".712" stop-color="#990069"/><stop offset=".910" stop-color="#990047"/><stop offset="1.000" stop-color="#99003d"/></linearGradient>
<linearGradient id="d73" gradientUnits="userSpaceOnUse" x1="1757" x2="2390" y1="0" y2="0"><stop offset=".000" stop-color="#003d99"/><stop offset=".232" stop-color="#012699"/><stop offset=".573" stop-color="#950099"/><stop offset=".611" stop-color="#99008c"/><stop offset=".744" stop-color="#990065"/><stop offset=".962" stop-color="#990043"/><stop offset="1.000" stop-color="#99003f"/></linearGradient>
<linearGradient id="d74" gradientUnits="userSpaceOnUse" x1="1760" x2="2384" y1="0" y2="0"><stop offset=".000" stop-color="#003b99"/><stop offset=".236" stop-color="#032499"/><stop offset=".587" stop-color="#970099"/><stop offset=".731" stop-color="#99006b"/><stop offset=".933" stop-color="#990048"/><stop offset="1.000" stop-color="#990041"/></linearGradient>
<linearGradient id="d75" gradientUnits="userSpaceOnUse" x1="1763" x2="2381" y1="0" y2="0"><stop offset=".000" stop-color="#003a99"/><stop offset=".233" stop-color="#022399"/><stop offset=".583" stop-color="#920099"/><stop offset=".612" stop-color="#990094"/><stop offset=".743" stop-color="#99006b"/><stop offset=".951" stop-color="#990048"/><stop offset="1.000" stop-color="#990043"/></linearGradient>
<linearGradient id="d76" gradientUnits="userSpaceOnUse" x1="1766" x2="2378" y1="0" y2="0"><stop offset=".000" stop-color="#003899"/><stop offset=".230" stop-color="#022299"/><stop offset=".574" stop-color="#8b0099"/><stop offset=".613" stop-color="#990096"/><stop offset=".740" stop-color="#99006e"/><stop offset=".946" stop-color="#99004b"/><stop offset="1.000" stop-color="#990045"/></linearGradient>
<linearGradient id="d77" gradientUnits="userSpaceOnUse" x1="1766" x2="2372" y1="0" y2="0"><stop offset=".000" stop-color="#003699"/><stop offset=".233" stop-color="#012199"/><stop offset=".574" stop-color="#860099"/><stop offset=".624" stop-color="#990097"/><stop offset=".752" stop-color="#99006f"/><stop offset=".960" stop-color="#99004b"/><stop offset="1.000" stop-color="#990047"/></linearGradient>
<linearGradient id="d78" gradientUnits="userSpaceOnUse" x1="1769" x2="2369" y1="0" y2="0"><stop offset=".000" stop-color="#003499"/><stop offset=".235" stop-color="#031f99"/><stop offset=".570" stop-color="#820099"/><stop offset=".635" stop-color="#990096"/><stop offset=".770" stop-color="#99006d"/><stop offset=".990" stop-color="#99004a"/><stop offset="1.000" stop-color="#990049"/></linearGradient>
<linearGradient id="d79" gradientUnits="userSpaceOnUse" x1="1772" x2="2366" y1="0" y2="0"><stop offset=".000" stop-color="#039"/><stop offset=".232" stop-color="#021e99"/><stop offset=".566" stop-color="#7d0099"/><stop offset=".641" stop-color="#990097"/><stop offset=".778" stop-color="#99006e"/><stop offset="1.000" stop-color="#99004b"/></linearGradient>
<linearGradient id="d80" gradientUnits="userSpaceOnUse" x1="1775" x2="2360" y1="0" y2="0"><stop offset=".000" stop-color="#003199"/><stop offset=".231" stop-color="#021d99"/><stop offset=".564" stop-color="#790099"/><stop offset=".651" stop-color="#990097"/><stop offset=".790" stop-color="#99006f"/><stop offset="1.000" stop-color="#99004d"/></linearGradient>
<linearGradient id="d81" gradientUnits="userSpaceOnUse" x1="1775" x2="2357" y1="0" y2="0"><stop offset=".000" stop-color="#003099"/><stop offset=".232" stop-color="#021c99"/><stop offset=".557" stop-color="#730099"/><stop offset=".665" stop-color="#990096"/><stop offset=".809" stop-color="#99006d"/><stop offset="1.000" stop-color="#99004f"/></linearGradient>
<linearGradient id="d82" gradientUnits="userSpaceOnUse" x1="1778" x2="2354" y1="0" y2="0"><stop offset=".000" stop-color="#002e99"/><stop offset=".234" stop-color="#031a99"/><stop offset=".552" stop-color="#6f0099"/><stop offset=".672" stop-color="#990097"/><stop offset=".818" stop-color="#99006e"/><stop offset="1.000" stop-color="#990051"/></linearGradient>
<linearGradient id="d83" gradientUnits="userSpaceOnUse" x1="1781" x2="2351" y1="0" y2="0"><stop offset=".000" stop-color="#002c99"/><stop offset=".232" stop-color="#021999"/><stop offset=".547" stop-color="#6b0099"/><stop offset=".679" stop-color="#990097"/><stop offset=".832" stop-color="#99006e"/><stop offset="1.000" stop-color="#990053"/></linearGradient>
<linearGradient id="d84" gradientUnits="userSpaceOnUse" x1="1784" x2="2345" y1="0" y2="0"><stop offset=".000" stop-color="#002b99"/><stop offset=".230" stop-color="#021899"/><stop offset=".545" stop-color="#680099"/><stop offset=".695" stop-color="#990096"/><stop offset=".850" stop-color="#99006e"/><stop offset="1.000" stop-color="#990056"/></linearGradient>
<linearGradient id="d85" gradientUnits="userSpaceOnUse" x1="1784" x2="2342" y1="0" y2="0"><stop offset=".000" stop-color="#002a99"/><stop offset=".231" stop-color="#021799"/><stop offset=".543" stop-color="#640099"/><stop offset=".704" stop-color="#990097"/><stop offset=".866" stop-color="#99006d"/><stop offset="1.000" stop-color="#990058"/></linearGradient>
<linearGradient id="d86" gradientUnits="userSpaceOnUse" x1="1787" x2="2339" y1="0" y2="0"><stop offset=".000" stop-color="#002899"/><stop offset=".234" stop-color="#031699"/><stop offset=".538" stop-color="#610099"/><stop offset=".712" stop-color="#990097"/><stop offset=".875" stop-color="#99006e"/><stop offset="1.000" stop-color="#99005a"/></linearGradient>
<linearGradient id="d87" gradientUnits="userSpaceOnUse" x1="1790" x2="2333" y1="0" y2="0"><stop offset=".000" stop-color="#002799"/><stop offset=".232" stop-color="#031599"/><stop offset=".530" stop-color="#5b0099"/><stop offset=".729" stop-color="#990096"/><stop offset=".895" stop-color="#99006e"/><stop offset="1.000" stop-color="#99005d"/></linearGradient>
<linearGradient id="d88" gradientUnits="userSpaceOnUse" x1="1793" x2="2330" y1="0" y2="0"><stop offset=".000" stop-color="#002599"/><stop offset=".229" stop-color="#021499"/><stop offset=".525" stop-color="#580099"/><stop offset=".737" stop-color="#990097"/><stop offset=".911" stop-color="#99006e"/><stop offset="1.000" stop-color="#990060"/></linearGradient>
<linearGradient id="d89" gradientUnits="userSpaceOnUse" x1="1796" x2="2327" y1="0" y2="0"><stop offset=".000" stop-color="#002499"/><stop offset=".226" stop-color="#021499"/><stop offset=".520" stop-color="#509"/><stop offset=".746" stop-color="#990097"/><stop offset=".921" stop-color="#99006e"/><stop offset="1.000" stop-color="#990062"/></linearGradient>
<linearGradient id="d90" gradientUnits="userSpaceOnUse" x1="1796" x2="2321" y1="0" y2="0"><stop offset=".000" stop-color="#002399"/><stop offset=".234" stop-color="#031299"/><stop offset=".520" stop-color="#520099"/><stop offset=".766" stop-color="#990096"/><stop offset=".949" stop-color="#99006d"/><stop offset="1.000" stop-color="#990065"/></linearGradient>
<linearGradient id="d91" gradientUnits="userSpaceOnUse" x1="1799" x2="2318" y1="0" y2="0"><stop offset=".000" stop-color="#029"/><stop offset=".231" stop-color="#031299"/><stop offset=".514" stop-color="#4f0099"/><stop offset=".775" stop-color="#990097"/><stop offset=".960" stop-color="#99006e"/><stop offset="1.000" stop-color="#990067"/></linearGradient>
<linearGradient id="d92" gradientUnits="userSpaceOnUse" x1="1802" x2="2315" y1="0" y2="0"><stop offset=".000" stop-color="#002099"/><stop offset=".228" stop-color="#021199"/><stop offset=".509" stop-color="#4c0099"/><stop offset=".789" stop-color="#990096"/><stop offset=".982" stop-color="#99006d"/><stop offset="1.000" stop-color="#99006a"/></linearGradient>
<linearGradient id="d93" gradientUnits="userSpaceOnUse" x1="1805" x2="2312" y1="0" y2="0"><stop offset=".000" stop-color="#001f99"/><stop offset=".225" stop-color="#021099"/><stop offset=".503" stop-color="#490099"/><stop offset=".799" stop-color="#990096"/><stop offset=".994" stop-color="#99006d"/><stop offset="1.000" stop-color="#99006c"/></linearGradient>
<linearGradient id="d94" gradientUnits="userSpaceOnUse" x1="1808" x2="2306" y1="0" y2="0"><stop offset=".000" stop-color="#001e99"/><stop offset=".229" stop-color="#030f99"/><stop offset=".500" stop-color="#460099"/><stop offset=".813" stop-color="#990097"/><stop offset="1.000" stop-color="#990070"/></linearGradient>
<linearGradient id="d95" gradientUnits="userSpaceOnUse" x1="1808" x2="2303" y1="0" y2="0"><stop offset=".000" stop-color="#001d99"/><stop offset=".230" stop-color="#030e99"/><stop offset=".497" stop-color="#409"/><stop offset=".830" stop-color="#990096"/><stop offset="1.000" stop-color="#990073"/></linearGradient>
<linearGradient id="d96" gradientUnits="userSpaceOnUse" x1="1811" x2="2300" y1="0" y2="0"><stop offset=".000" stop-color="#001c99"/><stop offset=".227" stop-color="#020e99"/><stop offset=".491" stop-color="#410099"/><stop offset=".840" stop-color="#990097"/><stop offset="1.000" stop-color="#990075"/></linearGradient>
<linearGradient id="d97" gradientUnits="userSpaceOnUse" x1="1814" x2="2294" y1="0" y2="0"><stop offset=".000" stop-color="#001b99"/><stop offset=".225" stop-color="#020d99"/><stop offset=".481" stop-color="#3d0099"/><stop offset=".856" stop-color="#990097"/><stop offset="1.000" stop-color="#990079"/></linearGradient>
<linearGradient id="d98" gradientUnits="userSpaceOnUse" x1="1817" x2="2291" y1="0" y2="0"><stop offset=".000" stop-color="#001999"/><stop offset=".228" stop-color="#030c99"/><stop offset=".481" stop-color="#3c0099"/><stop offset=".873" stop-color="#990096"/><stop offset="1.000" stop-color="#99007c"/></linearGradient>
<linearGradient id="d99" gradientUnits="userSpaceOnUse" x1="1820" x2="2288" y1="0" y2="0"><stop offset=".000" stop-color="#001899"/><stop offset=".224" stop-color="#030b99"/><stop offset=".474" stop-color="#3a0099"/><stop offset=".885" stop-color="#990097"/><stop offset="1.000" stop-color="#99007f"/></linearGradient>
<linearGradient id="d100" gradientUnits="userSpaceOnUse" x1="1823" x2="2282" y1="0" y2="0"><stop offset=".000" stop-color="#001799"/><stop offset=".222" stop-color="#020b99"/><stop offset=".471" stop-color="#370099"/><stop offset=".902" stop-color="#990097"/><stop offset="1.000" stop-color="#990083"/></linearGradient>
<linearGradient id="d101" gradientUnits="userSpaceOnUse" x1="1823" x2="2279" y1="0" y2="0"><stop offset=".000" stop-color="#001699"/><stop offset=".224" stop-color="#020a99"/><stop offset=".467" stop-color="#350099"/><stop offset=".921" stop-color="#990096"/><stop offset="1.000" stop-color="#990086"/></linearGradient>
<linearGradient id="d102" gradientUnits="userSpaceOnUse" x1="1826" x2="2276" y1="0" y2="0"><stop offset=".000" stop-color="#001599"/><stop offset=".227" stop-color="#030999"/><stop offset=".460" stop-color="#309"/><stop offset=".933" stop-color="#990097"/><stop offset="1.000" stop-color="#990089"/></linearGradient>
<linearGradient id="d103" gradientUnits="userSpaceOnUse" x1="1829" x2="2273" y1="0" y2="0"><stop offset=".000" stop-color="#001499"/><stop offset=".223" stop-color="#030899"/><stop offset=".453" stop-color="#300099"/><stop offset=".946" stop-color="#990097"/><stop offset="1.000" stop-color="#99008c"/></linearGradient>
<linearGradient id="d104" gradientUnits="userSpaceOnUse" x1="1832" x2="2267" y1="0" y2="0"><stop offset=".000" stop-color="#001399"/><stop offset=".221" stop-color="#030899"/><stop offset=".455" stop-color="#300099"/><stop offset=".972" stop-color="#990096"/><stop offset="1.000" stop-color="#990091"/></linearGradient>
<linearGradient id="d105" gradientUnits="userSpaceOnUse" x1="1835" x2="2264" y1="0" y2="0"><stop offset=".000" stop-color="#001299"/><stop offset=".217" stop-color="#020799"/><stop offset=".455" stop-color="#2f0099"/><stop offset=".986" stop-color="#990097"/><stop offset="1.000" stop-color="#990094"/></linearGradient>
<linearGradient id="d106" gradientUnits="userSpaceOnUse" x1="1838" x2="2261" y1="0" y2="0"><stop offset=".000" stop-color="#019"/><stop offset=".220" stop-color="#030699"/><stop offset=".454" stop-color="#2e0099"/><stop offset="1.000" stop-color="#990097"/></linearGradient>
<linearGradient id="d107" gradientUnits="userSpaceOnUse" x1="1841" x2="2255" y1="0" y2="0"><stop offset=".000" stop-color="#001099"/><stop offset=".217" stop-color="#030699"/><stop offset=".457" stop-color="#2d0099"/><stop offset="1.000" stop-color="#960099"/></linearGradient>
<linearGradient id="d108" gradientUnits="userSpaceOnUse" x1="1844" x2="2252" y1="0" y2="0"><stop offset=".000" stop-color="#000f99"/><stop offset=".213" stop-color="#030599"/><stop offset=".463" stop-color="#2e0099"/><stop offset="1.000" stop-color="#920099"/></linearGradient>
<linearGradient id="d109" gradientUnits="userSpaceOnUse" x1="1844" x2="2249" y1="0" y2="0"><stop offset=".000" stop-color="#000f99"/><stop offset=".215" stop-color="#020599"/><stop offset=".489" stop-color="#310099"/><stop offset="1.000" stop-color="#8f0099"/></linearGradient>
<linearGradient id="d110" gradientUnits="userSpaceOnUse" x1="1847" x2="2243" y1="0" y2="0"><stop offset=".000" stop-color="#000e99"/><stop offset=".220" stop-color="#030499"/><stop offset=".598" stop-color="#420099"/><stop offset="1.000" stop-color="#8a0099"/></linearGradient>
<linearGradient id="d111" gradientUnits="userSpaceOnUse" x1="1850" x2="2240" y1="0" y2="0"><stop offset=".000" stop-color="#000d99"/><stop offset=".215" stop-color="#030399"/><stop offset=".831" stop-color="#690099"/><stop offset="1.000" stop-color="#870099"/></linearGradient>
<linearGradient id="d112" gradientUnits="userSpaceOnUse" x1="1853" x2="2237" y1="0" y2="0"><stop offset=".000" stop-color="#000c99"/><stop offset=".211" stop-color="#030399"/><stop offset="1.000" stop-color="#840099"/></linearGradient>
<linearGradient id="d113" gradientUnits="userSpaceOnUse" x1="1856" x2="2231" y1="0" y2="0"><stop offset=".000" stop-color="#000b99"/><stop offset=".208" stop-color="#020299"/><stop offset="1.000" stop-color="#800099"/></linearGradient>
<linearGradient id="d114" gradientUnits="userSpaceOnUse" x1="1859" x2="2228" y1="0" y2="0"><stop offset=".000" stop-color="#000a99"/><stop offset=".211" stop-color="#030299"/><stop offset="1.000" stop-color="#7d0099"/></linearGradient>
<linearGradient id="d115" gradientUnits="userSpaceOnUse" x1="1862" x2="2225" y1="0" y2="0"><stop offset=".000" stop-color="#000999"/><stop offset=".207" stop-color="#030199"/><stop offset="1.000" stop-color="#7a0099"/></linearGradient>
<linearGradient id="d116" gradientUnits="userSpaceOnUse" x1="1865" x2="2222" y1="0" y2="0"><stop offset=".000" stop-color="#000999"/><stop offset=".202" stop-color="#030199"/><stop offset="1.000" stop-color="#709"/></linearGradient>
<linearGradient id="d117" gradientUnits="userSpaceOnUse" x1="1868" x2="2216" y1="0" y2="0"><stop offset=".000" stop-color="#000899"/><stop offset=".207" stop-color="#040099"/><stop offset="1.000" stop-color="#730099"/></linearGradient>
<linearGradient id="d118" gradientUnits="userSpaceOnUse" x1="1871" x2="2213" y1="0" y2="0"><stop offset=".000" stop-color="#000799"/><stop offset=".202" stop-color="#030099"/><stop offset="1.000" stop-color="#710099"/></linearGradient>
<linearGradient id="d119" gradientUnits="userSpaceOnUse" x1="1874" x2="2210" y1="0" y2="0"><stop offset=".000" stop-color="#000699"/><stop offset=".196" stop-color="#030099"/><stop offset="1.000" stop-color="#6e0099"/></linearGradient>
<linearGradient id="d120" gradientUnits="userSpaceOnUse" x1="1877" x2="2204" y1="0" y2="0"><stop offset=".000" stop-color="#000599"/><stop offset=".193" stop-color="#030099"/><stop offset="1.000" stop-color="#6a0099"/></linearGradient>
<linearGradient id="d121" gradientUnits="userSpaceOnUse" x1="1880" x2="2201" y1="0" y2="0"><stop offset=".000" stop-color="#000599"/><stop offset=".196" stop-color="#040099"/><stop offset="1.000" stop-color="#680099"/></linearGradient>
<linearGradient id="d122" gradientUnits="userSpaceOnUse" x1="1883" x2="2198" y1="0" y2="0"><stop offset=".000" stop-color="#000499"/><stop offset=".190" stop-color="#030099"/><stop offset="1.000" stop-color="#650099"/></linearGradient>
<linearGradient id="d123" gradientUnits="userSpaceOnUse" x1="1886" x2="2192" y1="0" y2="0"><stop offset=".000" stop-color="#000399"/><stop offset=".186" stop-color="#030099"/><stop offset="1.000" stop-color="#620099"/></linearGradient>
<linearGradient id="d124" gradientUnits="userSpaceOnUse" x1="1889" x2="2189" y1="0" y2="0"><stop offset=".000" stop-color="#000299"/><stop offset=".180" stop-color="#030099"/><stop offset="1.000" stop-color="#5f0099"/></linearGradient>
<linearGradient id="d125" gradientUnits="userSpaceOnUse" x1="1892" x2="2186" y1="0" y2="0"><stop offset=".000" stop-color="#000299"/><stop offset=".184" stop-color="#040099"/><stop offset="1.000" stop-color="#5d0099"/></linearGradient>
<linearGradient id="d126" gradientUnits="userSpaceOnUse" x1="1895" x2="2183" y1="0" y2="0"><stop offset=".000" stop-color="#000199"/><stop offset=".177" stop-color="#030099"/><stop offset="1.000" stop-color="#5b0099"/></linearGradient>
<linearGradient id="d127" gradientUnits="userSpaceOnUse" x1="1901" x2="2177" y1="0" y2="0"><stop offset=".000" stop-color="#009"/><stop offset=".163" stop-color="#030099"/><stop offset="1.000" stop-color="#580099"/></linearGradient>
<linearGradient id="d128" gradientUnits="userSpaceOnUse" x1="1904" x2="2174" y1="0" y2="0"><stop offset=".000" stop-color="#009"/><stop offset=".167" stop-color="#040099"/><stop offset="1.000" stop-color="#509"/></linearGradient>
<linearGradient id="d129" gradientUnits="userSpaceOnUse" x1="1907" x2="2171" y1="0" y2="0"><stop offset=".000" stop-color="#009"/><stop offset=".159" stop-color="#040099"/><stop offset="1.000" stop-color="#530099"/></linearGradient>
<linearGradient id="d130" gradientUnits="userSpaceOnUse" x1="1910" x2="2165" y1="0" y2="0"><stop offset=".000" stop-color="#009"/><stop offset=".165" stop-color="#040099"/><stop offset="1.000" stop-color="#500099"/></linearGradient>
<linearGradient id="d131" gradientUnits="userSpaceOnUse" x1="1913" x2="2162" y1="0" y2="0"><stop offset=".000" stop-color="#009"/><stop offset=".157" stop-color="#040099"/><stop offset="1.000" stop-color="#4e0099"/></linearGradient>
<linearGradient id="d132" gradientUnits="userSpaceOnUse" x1="1916" x2="2159" y1="0" y2="0"><stop offset=".000" stop-color="#009"/><stop offset=".148" stop-color="#040099"/><stop offset="1.000" stop-color="#4c0099"/></linearGradient>
<linearGradient id="d133" gradientUnits="userSpaceOnUse" x1="1922" x2="2153" y1="0" y2="0"><stop offset=".000" stop-color="#009"/><stop offset=".156" stop-color="#060099"/><stop offset="1.000" stop-color="#490099"/></linearGradient>
<linearGradient id="d134" gradientUnits="userSpaceOnUse" x1="1925" x2="2150" y1="0" y2="0"><stop offset=".000" stop-color="#009"/><stop offset=".173" stop-color="#070099"/><stop offset="1.000" stop-color="#470099"/></linearGradient>
<linearGradient id="d135" gradientUnits="userSpaceOnUse" x1="1928" x2="2147" y1="0" y2="0"><stop offset=".000" stop-color="#009"/><stop offset=".192" stop-color="#090099"/><stop offset="1.000" stop-color="#450099"/></linearGradient>
<linearGradient id="d136" gradientUnits="userSpaceOnUse" x1="1931" x2="2144" y1="0" y2="0"><stop offset=".000" stop-color="#009"/><stop offset=".254" stop-color="#0e0099"/><stop offset="1.000" stop-color="#409"/></linearGradient>
<linearGradient id="d137" gradientUnits="userSpaceOnUse" x1="1937" x2="2138" y1="0" y2="0"><stop offset=".000" stop-color="#009"/><stop offset="1.000" stop-color="#410099"/></linearGradient>
<linearGradient id="d138" gradientUnits="userSpaceOnUse" x1="1940" x2="2135" y1="0" y2="0"><stop offset=".000" stop-color="#009"/><stop offset="1.000" stop-color="#3f0099"/></linearGradient>
<linearGradient id="d139" gradientUnits="userSpaceOnUse" x1="1946" x2="2132" y1="0" y2="0"><stop offset=".000" stop-color="#009"/><stop offset="1.000" stop-color="#3d0099"/></linearGradient>
<linearGradient id="d140" gradientUnits="userSpaceOnUse" x1="1949" x2="2126" y1="0" y2="0"><stop offset=".000" stop-color="#010099"/><stop offset="1.000" stop-color="#3b0099"/></linearGradient>
<linearGradient id="d141" gradientUnits="userSpaceOnUse" x1="1955" x2="2123" y1="0" y2="0"><stop offset=".000" stop-color="#030099"/><stop offset="1.000" stop-color="#390099"/></linearGradient>
<linearGradient id="d142" gradientUnits="userSpaceOnUse" x1="1958" x2="2120" y1="0" y2="0"><stop offset=".000" stop-color="#030099"/><stop offset="1.000" stop-color="#370099"/></linearGradient>
<linearGradient id="d143" gradientUnits="userSpaceOnUse" x1="1964" x2="2114" y1="0" y2="0"><stop offset=".000" stop-color="#050099"/><stop offset="1.000" stop-color="#350099"/></linearGradient>
<linearGradient id="d144" gradientUnits="userSpaceOnUse" x1="1967" x2="2111" y1="0" y2="0"><stop offset=".000" stop-color="#060099"/><stop offset="1.000" stop-color="#309"/></linearGradient>
<linearGradient id="d145" gradientUnits="userSpaceOnUse" x1="1973" x2="2108" y1="0" y2="0"><stop offset=".000" stop-color="#070099"/><stop offset="1.000" stop-color="#320099"/></linearGradient>
<linearGradient id="d146" gradientUnits="userSpaceOnUse" x1="1976" x2="2102" y1="0" y2="0"><stop offset=".000" stop-color="#080099"/><stop offset="1.000" stop-color="#2f0099"/></linearGradient>
<linearGradient id="d147" gradientUnits="userSpaceOnUse" x1="1982" x2="2099" y1="0" y2="0"><stop offset=".000" stop-color="#0a0099"/><stop offset="1.000" stop-color="#2e0099"/></linearGradient>
<linearGradient id="d148" gradientUnits="userSpaceOnUse" x1="1988" x2="2096" y1="0" y2="0"><stop offset=".000" stop-color="#0b0099"/><stop offset="1.000" stop-color="#2c0099"/></linearGradient>
<linearGradient id="d149" gradientUnits="userSpaceOnUse" x1="1991" x2="2093" y1="0" y2="0"><stop offset=".000" stop-color="#0c0099"/><stop offset="1.000" stop-color="#2b0099"/></linearGradient>
<linearGradient id="d150" gradientUnits="userSpaceOnUse" x1="1997" x2="2087" y1="0" y2="0"><stop offset=".000" stop-color="#0d0099"/><stop offset="1.000" stop-color="#280099"/></linearGradient>
<linearGradient id="d151" gradientUnits="userSpaceOnUse" x1="2000" x2="2084" y1="0" y2="0"><stop offset=".000" stop-color="#0e0099"/><stop offset="1.000" stop-color="#270099"/></linearGradient>
<linearGradient id="d152" gradientUnits="userSpaceOnUse" x1="2006" x2="2081" y1="0" y2="0"><stop offset=".000" stop-color="#0f0099"/><stop offset="1.000" stop-color="#260099"/></linearGradient>
<linearGradient id="d153" gradientUnits="userSpaceOnUse" x1="2012" x2="2075" y1="0" y2="0"><stop offset=".000" stop-color="#109"/><stop offset="1.000" stop-color="#230099"/></linearGradient>
<linearGradient id="d154" gradientUnits="userSpaceOnUse" x1="2015" x2="2072" y1="0" y2="0"><stop offset=".000" stop-color="#109"/><stop offset="1.000" stop-color="#209"/></linearGradient>
<linearGradient id="d155" gradientUnits="userSpaceOnUse" x1="2021" x2="2069" y1="0" y2="0"><stop offset=".000" stop-color="#130099"/><stop offset="1.000" stop-color="#210099"/></linearGradient>
<linearGradient id="d156" gradientUnits="userSpaceOnUse" x1="2024" x2="2063" y1="0" y2="0"><stop offset=".000" stop-color="#130099"/><stop offset="1.000" stop-color="#1f0099"/></linearGradient>
<linearGradient id="d157" gradientUnits="userSpaceOnUse" x1="2030" x2="2060" y1="0" y2="0"><stop offset=".000" stop-color="#150099"/><stop offset="1.000" stop-color="#1d0099"/></linearGradient>
<linearGradient id="d158" gradientUnits="userSpaceOnUse" x1="2036" x2="2057" y1="0" y2="0"><stop offset=".000" stop-color="#160099"/><stop offset="1.000" stop-color="#1c0099"/></linearGradient>
<linearGradient id="t0" gradientUnits="userSpaceOnUse" x1="1853" x2="1892" y1="0" y2="0"><stop offset=".000" stop-color="#00ff03"/><stop offset=".154" stop-color="#00ff02"/><stop offset="1.000" stop-color="#49ff00"/></linearGradient>
<linearGradient id="t1" gradientUnits="userSpaceOnUse" x1="1853" x2="1925" y1="0" y2="0"><stop offset=".000" stop-color="#00ff0a"/><stop offset=".083" stop-color="#00ff09"/><stop offset=".875" stop-color="#7bff00"/><stop offset="1.000" stop-color="#8eff00"/></linearGradient>
<linearGradient id="t2" gradientUnits="userSpaceOnUse" x1="1853" x2="1958" y1="0" y2="0"><stop offset=".000" stop-color="#0f1"/><stop offset=".057" stop-color="#00ff10"/><stop offset=".857" stop-color="#b6ff00"/><stop offset="1.000" stop-color="#d9ff00"/></linearGradient>
<linearGradient id="t3" gradientUnits="userSpaceOnUse" x1="1853" x2="1988" y1="0" y2="0"><stop offset=".000" stop-color="#00ff17"/><stop offset=".067" stop-color="#04ff16"/><stop offset=".800" stop-color="#e1ff00"/><stop offset=".889" stop-color="#ff0"/><stop offset="1.000" stop-color="#fd0"/></linearGradient>
<linearGradient id="t4" gradientUnits="userSpaceOnUse" x1="1853" x2="2021" y1="0" y2="0"><stop offset=".000" stop-color="#00ff1d"/><stop offset=".054" stop-color="#03ff1c"/><stop offset=".643" stop-color="#e1ff0a"/><stop offset=".714" stop-color="#fffe07"/><stop offset=".875" stop-color="#ffc600"/><stop offset="1.000" stop-color="#ffa600"/></linearGradient>
<linearGradient id="t5" gradientUnits="userSpaceOnUse" x1="1853" x2="2054" y1="0" y2="0"><stop offset=".000" stop-color="#00ff23"/><stop offset=".045" stop-color="#01ff22"/><stop offset=".537" stop-color="#e2ff12"/><stop offset=".597" stop-color="#fffe10"/><stop offset=".731" stop-color="#ffc507"/><stop offset=".910" stop-color="#ff9300"/><stop offset="1.000" stop-color="#ff8000"/></linearGradient>
<linearGradient id="t6" gradientUnits="userSpaceOnUse" x1="1853" x2="2084" y1="0" y2="0"><stop offset=".000" stop-color="#00ff29"/><stop offset=".039" stop-color="#00ff28"/><stop offset=".247" stop-color="#6cff22"/><stop offset=".519" stop-color="#fffd18"/><stop offset=".636" stop-color="#ffc40e"/><stop offset=".792" stop-color="#ff9205"/><stop offset="1.000" stop-color="#ff6700"/></linearGradient>
<linearGradient id="t7" gradientUnits="userSpaceOnUse" x1="1856" x2="2117" y1="0" y2="0"><stop offset=".000" stop-color="#00ff2f"/><stop offset=".023" stop-color="#00ff2e"/><stop offset=".391" stop-color="#dbff22"/><stop offset=".448" stop-color="#fffc20"/><stop offset=".552" stop-color="#ffc415"/><stop offset=".690" stop-color="#ff910b"/><stop offset=".897" stop-color="#ff6100"/><stop offset="1.000" stop-color="#ff5000"/></linearGradient>
<linearGradient id="t8" gradientUnits="userSpaceOnUse" x1="1856" x2="2150" y1="0" y2="0"><stop offset=".000" stop-color="#00ff34"/><stop offset=".020" stop-color="#00ff34"/><stop offset=".337" stop-color="#d4ff2a"/><stop offset=".398" stop-color="#fffc27"/><stop offset=".490" stop-color="#ffc31b"/><stop offset=".612" stop-color="#ff9110"/><stop offset=".796" stop-color="#ff6105"/><stop offset="1.000" stop-color="#ff3f00"/></linearGradient>
<linearGradient id="t9" gradientUnits="userSpaceOnUse" x1="1856" x2="2180" y1="0" y2="0"><stop offset=".000" stop-color="#00ff3a"/><stop offset=".019" stop-color="#00ff3a"/><stop offset=".296" stop-color="#cdff32"/><stop offset=".352" stop-color="#fbff30"/><stop offset=".398" stop-color="#ffdf28"/><stop offset=".491" stop-color="#ffaa1c"/><stop offset=".630" stop-color="#ff7810"/><stop offset=".833" stop-color="#ff4a04"/><stop offset="1.000" stop-color="#ff3100"/></linearGradient>
<linearGradient id="t10" gradientUnits="userSpaceOnUse" x1="1856" x2="2213" y1="0" y2="0"><stop offset=".000" stop-color="#00ff40"/><stop offset=".025" stop-color="#03ff3f"/><stop offset=".286" stop-color="#ddff39"/><stop offset=".319" stop-color="#fcff38"/><stop offset=".412" stop-color="#ffbc26"/><stop offset=".521" stop-color="#ff8819"/><stop offset=".681" stop-color="#ff590d"/><stop offset=".924" stop-color="#ff2e00"/><stop offset="1.000" stop-color="#ff2400"/></linearGradient>
<linearGradient id="t11" gradientUnits="userSpaceOnUse" x1="1856" x2="2246" y1="0" y2="0"><stop offset=".000" stop-color="#00ff46"/><stop offset=".023" stop-color="#02ff45"/><stop offset=".269" stop-color="#e5ff40"/><stop offset=".292" stop-color="#fdff3f"/><stop offset=".369" stop-color="#ffc02e"/><stop offset=".462" stop-color="#ff8e20"/><stop offset=".600" stop-color="#ff5e12"/><stop offset=".815" stop-color="#ff3205"/><stop offset="1.000" stop-color="#ff1900"/></linearGradient>
<linearGradient id="t12" gradientUnits="userSpaceOnUse" x1="1856" x2="2276" y1="0" y2="0"><stop offset=".000" stop-color="#00ff4b"/><stop offset=".021" stop-color="#00ff4b"/><stop offset=".114" stop-color="#5dff4a"/><stop offset=".257" stop-color="#edff47"/><stop offset=".271" stop-color="#feff47"/><stop offset=".343" stop-color="#ffbf34"/><stop offset=".429" stop-color="#ff8d25"/><stop offset=".557" stop-color="#ff5e16"/><stop offset=".757" stop-color="#ff3109"/><stop offset="1.000" stop-color="#ff1000"/></linearGradient>
<linearGradient id="t13" gradientUnits="userSpaceOnUse" x1="1859" x2="2309" y1="0" y2="0"><stop offset=".000" stop-color="#00ff51"/><stop offset=".013" stop-color="#00ff51"/><stop offset=".220" stop-color="#deff4f"/><stop offset=".247" stop-color="#feff4e"/><stop offset=".307" stop-color="#ffc43c"/><stop offset=".387" stop-color="#ff902b"/><stop offset=".500" stop-color="#ff611c"/><stop offset=".673" stop-color="#ff360e"/><stop offset=".980" stop-color="#ff0900"/><stop offset="1.000" stop-color="#ff0700"/></linearGradient>
<linearGradient id="t14" gradientUnits="userSpaceOnUse" x1="1859" x2="2336" y1="0" y2="0"><stop offset=".000" stop-color="#00ff57"/><stop offset=".013" stop-color="#00ff57"/><stop offset=".201" stop-color="#d7ff56"/><stop offset=".233" stop-color="#ffff56"/><stop offset=".283" stop-color="#ffc843"/><stop offset=".352" stop-color="#ff9632"/><stop offset=".453" stop-color="#ff6722"/><stop offset=".610" stop-color="#ff3a13"/><stop offset=".874" stop-color="#ff0f04"/><stop offset="1.000" stop-color="#f00"/></linearGradient>
<linearGradient id="t15" gradientUnits="userSpaceOnUse" x1="1859" x2="2336" y1="0" y2="0"><stop offset=".000" stop-color="#00ff5d"/><stop offset=".013" stop-color="#00ff5d"/><stop offset=".195" stop-color="#d0ff5e"/><stop offset=".233" stop-color="#fffe5d"/><stop offset=".283" stop-color="#ffc84a"/><stop offset=".352" stop-color="#ff9537"/><stop offset=".453" stop-color="#ff6626"/><stop offset=".610" stop-color="#ff3a16"/><stop offset=".874" stop-color="#ff0e06"/><stop offset="1.000" stop-color="#ff0001"/></linearGradient>
<linearGradient id="t16" gradientUnits="userSpaceOnUse" x1="1859" x2="2333" y1="0" y2="0"><stop offset=".000" stop-color="#00ff63"/><stop offset=".019" stop-color="#04ff63"/><stop offset=".209" stop-color="#e0ff65"/><stop offset=".234" stop-color="#fffd65"/><stop offset=".285" stop-color="#ffc750"/><stop offset=".354" stop-color="#ff943c"/><stop offset=".456" stop-color="#ff652a"/><stop offset=".614" stop-color="#ff3919"/><stop offset=".886" stop-color="#ff0d09"/><stop offset="1.000" stop-color="#ff0004"/></linearGradient>
<linearGradient id="t17" gradientUnits="userSpaceOnUse" x1="1859" x2="2330" y1="0" y2="0"><stop offset=".000" stop-color="#00ff69"/><stop offset=".019" stop-color="#02ff69"/><stop offset=".210" stop-color="#e0ff6c"/><stop offset=".236" stop-color="#fffd6c"/><stop offset=".287" stop-color="#ffc656"/><stop offset=".357" stop-color="#ff9341"/><stop offset=".459" stop-color="#ff642e"/><stop offset=".618" stop-color="#ff381c"/><stop offset=".892" stop-color="#ff0c0b"/><stop offset="1.000" stop-color="#ff0007"/></linearGradient>
<linearGradient id="t18" gradientUnits="userSpaceOnUse" x1="1859" x2="2327" y1="0" y2="0"><stop offset=".000" stop-color="#00ff6e"/><stop offset=".019" stop-color="#00ff6f"/><stop offset=".096" stop-color="#5aff71"/><stop offset=".218" stop-color="#e9ff74"/><stop offset=".237" stop-color="#fffc73"/><stop offset=".288" stop-color="#ffc55c"/><stop offset=".359" stop-color="#ff9346"/><stop offset=".462" stop-color="#ff6432"/><stop offset=".622" stop-color="#ff371f"/><stop offset=".897" stop-color="#ff0b0e"/><stop offset="1.000" stop-color="#ff0009"/></linearGradient>
<linearGradient id="t19" gradientUnits="userSpaceOnUse" x1="1862" x2="2324" y1="0" y2="0"><stop offset=".000" stop-color="#00ff75"/><stop offset=".013" stop-color="#00ff75"/><stop offset=".208" stop-color="#e1ff7b"/><stop offset=".227" stop-color="#fbff7c"/><stop offset=".247" stop-color="#ffeb73"/><stop offset=".305" stop-color="#ffb45b"/><stop offset=".390" stop-color="#ff8143"/><stop offset=".513" stop-color="#ff522e"/><stop offset=".708" stop-color="#ff271b"/><stop offset="1.000" stop-color="#ff000c"/></linearGradient>
<linearGradient id="t20" gradientUnits="userSpaceOnUse" x1="1862" x2="2321" y1="0" y2="0"><stop offset=".000" stop-color="#00ff7b"/><stop offset=".013" stop-color="#00ff7b"/><stop offset=".203" stop-color="#daff83"/><stop offset=".229" stop-color="#fbff84"/><stop offset=".261" stop-color="#ffdc74"/><stop offset=".327" stop-color="#ffa559"/><stop offset=".418" stop-color="#ff7442"/><stop offset=".556" stop-color="#ff462d"/><stop offset=".778" stop-color="#ff1b1a"/><stop offset="1.000" stop-color="#ff000e"/></linearGradient>
<linearGradient id="t21" gradientUnits="userSpaceOnUse" x1="1862" x2="2318" y1="0" y2="0"><stop offset=".000" stop-color="#00ff81"/><stop offset=".013" stop-color="#00ff81"/><stop offset=".197" stop-color="#d2ff8a"/><stop offset=".230" stop-color="#fcff8c"/><stop offset=".296" stop-color="#ffbd6b"/><stop offset=".375" stop-color="#ff8951"/><stop offset=".487" stop-color="#ff5a3a"/><stop offset=".664" stop-color="#ff2e25"/><stop offset=".987" stop-color="#f01"/><stop offset="1.000" stop-color="#ff0010"/></linearGradient>
<linearGradient id="t22" gradientUnits="userSpaceOnUse" x1="1862" x2="2315" y1="0" y2="0"><stop offset=".000" stop-color="#00ff87"/><stop offset=".020" stop-color="#04ff87"/><stop offset=".205" stop-color="#dbff92"/><stop offset=".232" stop-color="#fdff94"/><stop offset=".291" stop-color="#ffc174"/><stop offset=".364" stop-color="#ff8f5a"/><stop offset=".470" stop-color="#ff6042"/><stop offset=".636" stop-color="#ff342b"/><stop offset=".934" stop-color="#ff0716"/><stop offset="1.000" stop-color="#ff0013"/></linearGradient>
<linearGradient id="t23" gradientUnits="userSpaceOnUse" x1="1862" x2="2312" y1="0" y2="0"><stop offset=".000" stop-color="#00ff8d"/><stop offset=".020" stop-color="#02ff8e"/><stop offset=".213" stop-color="#e4ff9a"/><stop offset=".233" stop-color="#feff9c"/><stop offset=".293" stop-color="#ffc07a"/><stop offset=".367" stop-color="#ff8e5e"/><stop offset=".473" stop-color="#ff5f45"/><stop offset=".640" stop-color="#ff332e"/><stop offset=".947" stop-color="#ff0518"/><stop offset="1.000" stop-color="#ff0015"/></linearGradient>
<linearGradient id="t24" gradientUnits="userSpaceOnUse" x1="1862" x2="2309" y1="0" y2="0"><stop offset=".000" stop-color="#00ff93"/><stop offset=".020" stop-color="#01ff94"/><stop offset=".107" stop-color="#66ff9a"/><stop offset=".221" stop-color="#edffa3"/><stop offset=".235" stop-color="#feffa4"/><stop offset=".289" stop-color="#ffc583"/><stop offset=".362" stop-color="#ff9165"/><stop offset=".470" stop-color="#ff614a"/><stop offset=".631" stop-color="#ff3533"/><stop offset=".919" stop-color="#ff081c"/><stop offset="1.000" stop-color="#ff0017"/></linearGradient>
<linearGradient id="t25" gradientUnits="userSpaceOnUse" x1="1865" x2="2306" y1="0" y2="0"><stop offset=".000" stop-color="#0f9"/><stop offset=".014" stop-color="#00ff9a"/><stop offset=".204" stop-color="#dcffa9"/><stop offset=".231" stop-color="#ffffac"/><stop offset=".286" stop-color="#ffc489"/><stop offset=".361" stop-color="#ff906a"/><stop offset=".469" stop-color="#ff604e"/><stop offset=".633" stop-color="#ff3536"/><stop offset=".925" stop-color="#ff081e"/><stop offset="1.000" stop-color="#ff001a"/></linearGradient>
<linearGradient id="t26" gradientUnits="userSpaceOnUse" x1="1865" x2="2303" y1="0" y2="0"><stop offset=".000" stop-color="#00ffa0"/><stop offset=".014" stop-color="#00ffa1"/><stop offset=".205" stop-color="#ddffb1"/><stop offset=".233" stop-color="#fffeb4"/><stop offset=".288" stop-color="#ffc38f"/><stop offset=".363" stop-color="#ff8f6f"/><stop offset=".473" stop-color="#ff5f52"/><stop offset=".637" stop-color="#ff3439"/><stop offset=".938" stop-color="#ff0620"/><stop offset="1.000" stop-color="#ff001c"/></linearGradient>
<linearGradient id="t27" gradientUnits="userSpaceOnUse" x1="1865" x2="2300" y1="0" y2="0"><stop offset=".000" stop-color="#00ffa6"/><stop offset=".014" stop-color="#00ffa7"/><stop offset=".200" stop-color="#d5ffb9"/><stop offset=".234" stop-color="#fffdbb"/><stop offset=".283" stop-color="#ffc999"/><stop offset=".352" stop-color="#ff9679"/><stop offset=".455" stop-color="#ff655b"/><stop offset=".614" stop-color="#ff393f"/><stop offset=".883" stop-color="#ff0d26"/><stop offset="1.000" stop-color="#ff001f"/></linearGradient>
<linearGradient id="t28" gradientUnits="userSpaceOnUse" x1="1865" x2="2297" y1="0" y2="0"><stop offset=".000" stop-color="#00ffac"/><stop offset=".014" stop-color="#00ffae"/><stop offset=".035" stop-color="#16ffaf"/><stop offset=".201" stop-color="#d5ffc1"/><stop offset=".236" stop-color="#fffcc3"/><stop offset=".285" stop-color="#ffc8a0"/><stop offset=".354" stop-color="#ff957e"/><stop offset=".458" stop-color="#ff655f"/><stop offset=".618" stop-color="#ff3842"/><stop offset=".889" stop-color="#ff0c28"/><stop offset="1.000" stop-color="#ff0021"/></linearGradient>
<linearGradient id="t29" gradientUnits="userSpaceOnUse" x1="1865" x2="2297" y1="0" y2="0"><stop offset=".000" stop-color="#00ffb3"/><stop offset=".021" stop-color="#03ffb5"/><stop offset=".208" stop-color="#deffca"/><stop offset=".236" stop-color="#fffbcb"/><stop offset=".285" stop-color="#ffc7a6"/><stop offset=".354" stop-color="#ff9483"/><stop offset=".458" stop-color="#ff6463"/><stop offset=".618" stop-color="#ff3745"/><stop offset=".896" stop-color="#ff0b2a"/><stop offset="1.000" stop-color="#ff0023"/></linearGradient>
<linearGradient id="t30" gradientUnits="userSpaceOnUse" x1="1865" x2="2294" y1="0" y2="0"><stop offset=".000" stop-color="#00ffb9"/><stop offset=".021" stop-color="#01ffbb"/><stop offset=".126" stop-color="#7affc7"/><stop offset=".231" stop-color="#faffd5"/><stop offset=".245" stop-color="#fff2cc"/><stop offset=".301" stop-color="#ffbaa4"/><stop offset=".378" stop-color="#ff8780"/><stop offset=".490" stop-color="#ff5960"/><stop offset=".664" stop-color="#ff2e42"/><stop offset=".986" stop-color="#ff0026"/><stop offset="1.000" stop-color="#ff0025"/></linearGradient>
<linearGradient id="t31" gradientUnits="userSpaceOnUse" x1="1865" x2="2291" y1="0" y2="0"><stop offset=".000" stop-color="#00ffc0"/><stop offset=".021" stop-color="#00ffc2"/><stop offset=".211" stop-color="#e0ffda"/><stop offset=".232" stop-color="#fbffde"/><stop offset=".261" stop-color="#ffe0c8"/><stop offset=".324" stop-color="#ffa99e"/><stop offset=".408" stop-color="#ff797b"/><stop offset=".535" stop-color="#ff4c5b"/><stop offset=".739" stop-color="#ff213d"/><stop offset="1.000" stop-color="#ff0028"/></linearGradient>
<linearGradient id="t32" gradientUnits="userSpaceOnUse" x1="1868" x2="2288" y1="0" y2="0"><stop offset=".000" stop-color="#00ffc7"/><stop offset=".014" stop-color="#00ffc9"/><stop offset=".200" stop-color="#d7ffe2"/><stop offset=".229" stop-color="#fcffe7"/><stop offset=".293" stop-color="#ffbeb5"/><stop offset=".371" stop-color="#ff898d"/><stop offset=".486" stop-color="#ff5a69"/><stop offset=".664" stop-color="#ff2e49"/><stop offset=".986" stop-color="#ff002b"/><stop offset="1.000" stop-color="#ff002a"/></linearGradient>
<linearGradient id="t33" gradientUnits="userSpaceOnUse" x1="1868" x2="2285" y1="0" y2="0"><stop offset=".000" stop-color="#00ffce"/><stop offset=".014" stop-color="#00ffd0"/><stop offset=".194" stop-color="#cfffe9"/><stop offset=".230" stop-color="#fdfff0"/><stop offset=".288" stop-color="#ffc3c0"/><stop offset=".360" stop-color="#ff9098"/><stop offset=".468" stop-color="#ff6072"/><stop offset=".633" stop-color="#ff3451"/><stop offset=".928" stop-color="#ff0732"/><stop offset="1.000" stop-color="#ff002d"/></linearGradient>
<linearGradient id="t34" gradientUnits="userSpaceOnUse" x1="1868" x2="2282" y1="0" y2="0"><stop offset=".000" stop-color="#00ffd5"/><stop offset=".014" stop-color="#00ffd6"/><stop offset=".043" stop-color="#20ffda"/><stop offset=".196" stop-color="#cffff2"/><stop offset=".232" stop-color="#fefff9"/><stop offset=".290" stop-color="#ffc2c6"/><stop offset=".362" stop-color="#ff8f9d"/><stop offset=".471" stop-color="#ff5f76"/><stop offset=".638" stop-color="#ff3354"/><stop offset=".942" stop-color="#ff0533"/><stop offset="1.000" stop-color="#ff002f"/></linearGradient>
<linearGradient id="t35" gradientUnits="userSpaceOnUse" x1="1868" x2="2279" y1="0" y2="0"><stop offset=".000" stop-color="#00ffdc"/><stop offset=".022" stop-color="#03ffde"/><stop offset=".212" stop-color="#e2fffd"/><stop offset=".234" stop-color="#fcfcff"/><stop offset=".299" stop-color="#ffbac8"/><stop offset=".380" stop-color="#ff869c"/><stop offset=".496" stop-color="#ff5774"/><stop offset=".679" stop-color="#ff2b52"/><stop offset=".985" stop-color="#f03"/><stop offset="1.000" stop-color="#ff0032"/></linearGradient>
<linearGradient id="t36" gradientUnits="userSpaceOnUse" x1="1868" x2="2276" y1="0" y2="0"><stop offset=".000" stop-color="#00ffe2"/><stop offset=".022" stop-color="#01ffe5"/><stop offset=".191" stop-color="#c5fcff"/><stop offset=".243" stop-color="#fcf2ff"/><stop offset=".309" stop-color="#ffb4c9"/><stop offset=".390" stop-color="#ff819d"/><stop offset=".507" stop-color="#ff5476"/><stop offset=".691" stop-color="#ff2953"/><stop offset=".993" stop-color="#ff0035"/><stop offset="1.000" stop-color="#ff0034"/></linearGradient>
<linearGradient id="t37" gradientUnits="userSpaceOnUse" x1="1868" x2="2273" y1="0" y2="0"><stop offset=".000" stop-color="#00ffe9"/><stop offset=".022" stop-color="#00ffed"/><stop offset=".133" stop-color="#81ffff"/><stop offset=".252" stop-color="#fce8ff"/><stop offset=".326" stop-color="#ffa8c5"/><stop offset=".415" stop-color="#ff7699"/><stop offset=".548" stop-color="#ff4871"/><stop offset=".763" stop-color="#ff1d4d"/><stop offset="1.000" stop-color="#ff0037"/></linearGradient>
<linearGradient id="t38" gradientUnits="userSpaceOnUse" x1="1871" x2="2270" y1="0" y2="0"><stop offset=".000" stop-color="#00fff2"/><stop offset=".015" stop-color="#00fff4"/><stop offset=".105" stop-color="#66fbff"/><stop offset=".256" stop-color="#fcdfff"/><stop offset=".331" stop-color="#ffa1c6"/><stop offset=".421" stop-color="#ff729b"/><stop offset=".556" stop-color="#ff4573"/><stop offset=".774" stop-color="#ff1b4f"/><stop offset="1.000" stop-color="#ff0039"/></linearGradient>
<linearGradient id="t39" gradientUnits="userSpaceOnUse" x1="1871" x2="2267" y1="0" y2="0"><stop offset=".000" stop-color="#00fff9"/><stop offset=".015" stop-color="#00fffb"/><stop offset=".121" stop-color="#71f1ff"/><stop offset=".265" stop-color="#fcd6ff"/><stop offset=".341" stop-color="#ff9bc8"/><stop offset=".439" stop-color="#ff6a99"/><stop offset=".583" stop-color="#ff3f71"/><stop offset=".818" stop-color="#ff154d"/><stop offset="1.000" stop-color="#ff003c"/></linearGradient>
<linearGradient id="t40" gradientUnits="userSpaceOnUse" x1="1871" x2="2264" y1="0" y2="0"><stop offset=".000" stop-color="#00feff"/><stop offset=".015" stop-color="#00fcff"/><stop offset=".145" stop-color="#83e6ff"/><stop offset=".275" stop-color="#fcceff"/><stop offset=".359" stop-color="#ff91c4"/><stop offset=".466" stop-color="#ff6196"/><stop offset=".626" stop-color="#ff356d"/><stop offset=".885" stop-color="#ff0c49"/><stop offset="1.000" stop-color="#ff003f"/></linearGradient>
<linearGradient id="t41" gradientUnits="userSpaceOnUse" x1="1871" x2="2261" y1="0" y2="0"><stop offset=".000" stop-color="#00f7ff"/><stop offset=".023" stop-color="#04f3ff"/><stop offset=".100" stop-color="#54e7ff"/><stop offset=".285" stop-color="#fcc6ff"/><stop offset=".369" stop-color="#ff8cc5"/><stop offset=".477" stop-color="#ff5d97"/><stop offset=".638" stop-color="#ff336e"/><stop offset=".900" stop-color="#ff0a4a"/><stop offset="1.000" stop-color="#ff0041"/></linearGradient>
<linearGradient id="t42" gradientUnits="userSpaceOnUse" x1="1871" x2="2258" y1="0" y2="0"><stop offset=".000" stop-color="#00f0ff"/><stop offset=".023" stop-color="#02edff"/><stop offset=".093" stop-color="#4ae1ff"/><stop offset=".295" stop-color="#fcbeff"/><stop offset=".380" stop-color="#ff87c6"/><stop offset=".488" stop-color="#ff5a99"/><stop offset=".651" stop-color="#ff3070"/><stop offset=".915" stop-color="#ff084c"/><stop offset="1.000" stop-color="#f04"/></linearGradient>
<linearGradient id="t43" gradientUnits="userSpaceOnUse" x1="1871" x2="2255" y1="0" y2="0"><stop offset=".000" stop-color="#00eaff"/><stop offset=".023" stop-color="#00e6ff"/><stop offset=".086" stop-color="#40dcff"/><stop offset=".305" stop-color="#fcb6ff"/><stop offset=".398" stop-color="#ff7ec4"/><stop offset=".516" stop-color="#ff5195"/><stop offset=".695" stop-color="#ff286c"/><stop offset=".984" stop-color="#ff0048"/><stop offset="1.000" stop-color="#ff0047"/></linearGradient>
<linearGradient id="t44" gradientUnits="userSpaceOnUse" x1="1874" x2="2252" y1="0" y2="0"><stop offset=".000" stop-color="#00e2ff"/><stop offset=".016" stop-color="#00e0ff"/><stop offset=".103" stop-color="#53d2ff"/><stop offset=".310" stop-color="#fcafff"/><stop offset=".405" stop-color="#ff79c5"/><stop offset=".524" stop-color="#ff4e97"/><stop offset=".706" stop-color="#ff266e"/><stop offset=".992" stop-color="#ff004a"/><stop offset="1.000" stop-color="#ff004a"/></linearGradient>
<linearGradient id="t45" gradientUnits="userSpaceOnUse" x1="1874" x2="2249" y1="0" y2="0"><stop offset=".000" stop-color="#00dcff"/><stop offset=".016" stop-color="#00daff"/><stop offset=".128" stop-color="#64c9ff"/><stop offset=".320" stop-color="#fda8ff"/><stop offset=".416" stop-color="#ff74c6"/><stop offset=".536" stop-color="#ff4b98"/><stop offset=".720" stop-color="#ff246f"/><stop offset=".992" stop-color="#ff004d"/><stop offset="1.000" stop-color="#ff004c"/></linearGradient>
<linearGradient id="t46" gradientUnits="userSpaceOnUse" x1="1874" x2="2246" y1="0" y2="0"><stop offset=".000" stop-color="#00d7ff"/><stop offset=".016" stop-color="#00d4ff"/><stop offset=".153" stop-color="#74bfff"/><stop offset=".331" stop-color="#fda1ff"/><stop offset=".435" stop-color="#ff6cc3"/><stop offset=".565" stop-color="#ff4495"/><stop offset=".758" stop-color="#ff1e6d"/><stop offset="1.000" stop-color="#ff004f"/></linearGradient>
<linearGradient id="t47" gradientUnits="userSpaceOnUse" x1="1874" x2="2243" y1="0" y2="0"><stop offset=".000" stop-color="#00d1ff"/><stop offset=".024" stop-color="#04ceff"/><stop offset=".114" stop-color="#51c0ff"/><stop offset=".341" stop-color="#fd9bff"/><stop offset=".447" stop-color="#ff68c4"/><stop offset=".577" stop-color="#ff4196"/><stop offset=".780" stop-color="#ff1a6d"/><stop offset="1.000" stop-color="#ff0052"/></linearGradient>
<linearGradient id="t48" gradientUnits="userSpaceOnUse" x1="1874" x2="2240" y1="0" y2="0"><stop offset=".000" stop-color="#0cf"/><stop offset=".025" stop-color="#02c8ff"/><stop offset=".107" stop-color="#48bdff"/><stop offset=".352" stop-color="#fd95ff"/><stop offset=".459" stop-color="#ff64c5"/><stop offset=".590" stop-color="#ff3e98"/><stop offset=".795" stop-color="#ff186e"/><stop offset="1.000" stop-color="#f05"/></linearGradient>
<linearGradient id="t49" gradientUnits="userSpaceOnUse" x1="1874" x2="2237" y1="0" y2="0"><stop offset=".000" stop-color="#00c7ff"/><stop offset=".025" stop-color="#00c3ff"/><stop offset=".099" stop-color="#40b9ff"/><stop offset=".364" stop-color="#fd8fff"/><stop offset=".471" stop-color="#ff60c6"/><stop offset=".612" stop-color="#ff3997"/><stop offset=".826" stop-color="#ff146d"/><stop offset="1.000" stop-color="#ff0058"/></linearGradient>
<linearGradient id="t50" gradientUnits="userSpaceOnUse" x1="1877" x2="2234" y1="0" y2="0"><stop offset=".000" stop-color="#00c1ff"/><stop offset=".017" stop-color="#00beff"/><stop offset=".118" stop-color="#50b0ff"/><stop offset=".370" stop-color="#fd89ff"/><stop offset=".487" stop-color="#ff59c3"/><stop offset=".630" stop-color="#ff3496"/><stop offset=".849" stop-color="#ff116d"/><stop offset="1.000" stop-color="#ff005b"/></linearGradient>
<linearGradient id="t51" gradientUnits="userSpaceOnUse" x1="1877" x2="2231" y1="0" y2="0"><stop offset=".000" stop-color="#00bcff"/><stop offset=".017" stop-color="#00baff"/><stop offset=".144" stop-color="#5fa8ff"/><stop offset=".381" stop-color="#fd84ff"/><stop offset=".500" stop-color="#ff55c4"/><stop offset=".653" stop-color="#ff3095"/><stop offset=".881" stop-color="#ff0c6c"/><stop offset="1.000" stop-color="#ff005e"/></linearGradient>
<linearGradient id="t52" gradientUnits="userSpaceOnUse" x1="1877" x2="2228" y1="0" y2="0"><stop offset=".000" stop-color="#00b8ff"/><stop offset=".017" stop-color="#00b5ff"/><stop offset=".171" stop-color="#6ea0ff"/><stop offset=".393" stop-color="#fd7eff"/><stop offset=".513" stop-color="#ff52c5"/><stop offset=".667" stop-color="#ff2d97"/><stop offset=".897" stop-color="#ff0a6e"/><stop offset="1.000" stop-color="#ff0061"/></linearGradient>
<linearGradient id="t53" gradientUnits="userSpaceOnUse" x1="1877" x2="2225" y1="0" y2="0"><stop offset=".000" stop-color="#00b3ff"/><stop offset=".026" stop-color="#03b0ff"/><stop offset=".129" stop-color="#4fa2ff"/><stop offset=".405" stop-color="#fd79ff"/><stop offset=".526" stop-color="#ff4ec6"/><stop offset=".681" stop-color="#ff2b98"/><stop offset=".914" stop-color="#ff086f"/><stop offset="1.000" stop-color="#ff0064"/></linearGradient>
<linearGradient id="t54" gradientUnits="userSpaceOnUse" x1="1877" x2="2222" y1="0" y2="0"><stop offset=".000" stop-color="#00afff"/><stop offset=".026" stop-color="#02acff"/><stop offset=".122" stop-color="#479fff"/><stop offset=".426" stop-color="#ff71fc"/><stop offset=".530" stop-color="#ff4dca"/><stop offset=".687" stop-color="#ff2a9b"/><stop offset=".922" stop-color="#ff0771"/><stop offset="1.000" stop-color="#ff0068"/></linearGradient>
<linearGradient id="t55" gradientUnits="userSpaceOnUse" x1="1877" x2="2219" y1="0" y2="0"><stop offset=".000" stop-color="#00abff"/><stop offset=".026" stop-color="#00a8ff"/><stop offset=".114" stop-color="#3f9cff"/><stop offset=".439" stop-color="#ff6cfc"/><stop offset=".553" stop-color="#ff47c8"/><stop offset=".711" stop-color="#ff269a"/><stop offset=".956" stop-color="#ff0370"/><stop offset="1.000" stop-color="#ff006b"/></linearGradient>
<linearGradient id="t56" gradientUnits="userSpaceOnUse" x1="1880" x2="2216" y1="0" y2="0"><stop offset=".000" stop-color="#00a6ff"/><stop offset=".018" stop-color="#00a4ff"/><stop offset=".125" stop-color="#4896ff"/><stop offset=".446" stop-color="#ff68fc"/><stop offset=".562" stop-color="#ff44c8"/><stop offset=".732" stop-color="#f29"/><stop offset=".991" stop-color="#ff006f"/><stop offset="1.000" stop-color="#ff006e"/></linearGradient>
<linearGradient id="t57" gradientUnits="userSpaceOnUse" x1="1880" x2="2213" y1="0" y2="0"><stop offset=".000" stop-color="#00a2ff"/><stop offset=".018" stop-color="#00a0ff"/><stop offset=".153" stop-color="#568fff"/><stop offset=".459" stop-color="#ff63fc"/><stop offset=".577" stop-color="#ff40c9"/><stop offset=".748" stop-color="#ff1f9a"/><stop offset=".991" stop-color="#ff0073"/><stop offset="1.000" stop-color="#ff0072"/></linearGradient>
<linearGradient id="t58" gradientUnits="userSpaceOnUse" x1="1880" x2="2210" y1="0" y2="0"><stop offset=".000" stop-color="#009eff"/><stop offset=".018" stop-color="#009cff"/><stop offset=".182" stop-color="#6488ff"/><stop offset=".473" stop-color="#ff5ffc"/><stop offset=".591" stop-color="#ff3dca"/><stop offset=".764" stop-color="#ff1d9b"/><stop offset=".991" stop-color="#ff0076"/><stop offset="1.000" stop-color="#ff0075"/></linearGradient>
<linearGradient id="t59" gradientUnits="userSpaceOnUse" x1="1880" x2="2207" y1="0" y2="0"><stop offset=".000" stop-color="#009bff"/><stop offset=".028" stop-color="#0397ff"/><stop offset=".156" stop-color="#5288ff"/><stop offset=".486" stop-color="#ff5afc"/><stop offset=".615" stop-color="#ff38c8"/><stop offset=".798" stop-color="#ff1899"/><stop offset=".991" stop-color="#ff007a"/><stop offset="1.000" stop-color="#ff0078"/></linearGradient>
<linearGradient id="t60" gradientUnits="userSpaceOnUse" x1="1880" x2="2204" y1="0" y2="0"><stop offset=".000" stop-color="#0097ff"/><stop offset=".028" stop-color="#0294ff"/><stop offset=".148" stop-color="#4b86ff"/><stop offset=".500" stop-color="#ff56fc"/><stop offset=".630" stop-color="#ff35c8"/><stop offset=".815" stop-color="#ff159a"/><stop offset=".991" stop-color="#ff007d"/><stop offset="1.000" stop-color="#ff007c"/></linearGradient>
<linearGradient id="t61" gradientUnits="userSpaceOnUse" x1="1880" x2="2201" y1="0" y2="0"><stop offset=".000" stop-color="#0094ff"/><stop offset=".028" stop-color="#0191ff"/><stop offset=".131" stop-color="#3f85ff"/><stop offset=".514" stop-color="#ff52fc"/><stop offset=".645" stop-color="#ff32c9"/><stop offset=".832" stop-color="#ff139b"/><stop offset=".991" stop-color="#ff0081"/><stop offset="1.000" stop-color="#ff0080"/></linearGradient>
<linearGradient id="t62" gradientUnits="userSpaceOnUse" x1="1883" x2="2198" y1="0" y2="0"><stop offset=".000" stop-color="#008fff"/><stop offset=".019" stop-color="#008dff"/><stop offset=".143" stop-color="#477fff"/><stop offset=".524" stop-color="#ff4efd"/><stop offset=".657" stop-color="#ff2fca"/><stop offset=".848" stop-color="#ff119c"/><stop offset="1.000" stop-color="#ff0083"/></linearGradient>
<linearGradient id="t63" gradientUnits="userSpaceOnUse" x1="1883" x2="2195" y1="0" y2="0"><stop offset=".000" stop-color="#008cff"/><stop offset=".019" stop-color="#008aff"/><stop offset=".173" stop-color="#5479ff"/><stop offset=".538" stop-color="#ff4afd"/><stop offset=".673" stop-color="#ff2cca"/><stop offset=".875" stop-color="#ff0d9b"/><stop offset="1.000" stop-color="#ff0087"/></linearGradient>
<linearGradient id="t64" gradientUnits="userSpaceOnUse" x1="1883" x2="2192" y1="0" y2="0"><stop offset=".000" stop-color="#0089ff"/><stop offset=".029" stop-color="#0486ff"/><stop offset=".184" stop-color="#5775ff"/><stop offset=".553" stop-color="#ff47fd"/><stop offset=".699" stop-color="#ff27c8"/><stop offset=".903" stop-color="#ff099a"/><stop offset="1.000" stop-color="#ff008b"/></linearGradient>
<linearGradient id="t65" gradientUnits="userSpaceOnUse" x1="1883" x2="2189" y1="0" y2="0"><stop offset=".000" stop-color="#0086ff"/><stop offset=".029" stop-color="#0383ff"/><stop offset=".176" stop-color="#5073ff"/><stop offset=".569" stop-color="#ff43fd"/><stop offset=".716" stop-color="#ff25c9"/><stop offset=".931" stop-color="#ff069a"/><stop offset="1.000" stop-color="#ff008f"/></linearGradient>
<linearGradient id="t66" gradientUnits="userSpaceOnUse" x1="1883" x2="2186" y1="0" y2="0"><stop offset=".000" stop-color="#0083ff"/><stop offset=".030" stop-color="#0280ff"/><stop offset=".168" stop-color="#4a72ff"/><stop offset=".584" stop-color="#ff3ffd"/><stop offset=".733" stop-color="#ff22ca"/><stop offset=".950" stop-color="#ff039b"/><stop offset="1.000" stop-color="#ff0093"/></linearGradient>
<linearGradient id="t67" gradientUnits="userSpaceOnUse" x1="1883" x2="2183" y1="0" y2="0"><stop offset=".000" stop-color="#0080ff"/><stop offset=".030" stop-color="#017dff"/><stop offset=".160" stop-color="#4370ff"/><stop offset=".600" stop-color="#ff3cfd"/><stop offset=".750" stop-color="#ff1fca"/><stop offset=".970" stop-color="#ff009c"/><stop offset="1.000" stop-color="#ff0097"/></linearGradient>
<linearGradient id="t68" gradientUnits="userSpaceOnUse" x1="1883" x2="2180" y1="0" y2="0"><stop offset=".000" stop-color="#007eff"/><stop offset=".030" stop-color="#007bff"/><stop offset=".162" stop-color="#426dff"/><stop offset=".616" stop-color="#ff38fd"/><stop offset=".778" stop-color="#ff1bc8"/><stop offset=".990" stop-color="#ff009c"/><stop offset="1.000" stop-color="#ff009b"/></linearGradient>
<linearGradient id="t69" gradientUnits="userSpaceOnUse" x1="1886" x2="2177" y1="0" y2="0"><stop offset=".000" stop-color="#007aff"/><stop offset=".021" stop-color="#0078ff"/><stop offset=".196" stop-color="#5267ff"/><stop offset=".629" stop-color="#ff35fd"/><stop offset=".794" stop-color="#ff18c9"/><stop offset=".990" stop-color="#ff00a1"/><stop offset="1.000" stop-color="#ff009f"/></linearGradient>
<linearGradient id="t70" gradientUnits="userSpaceOnUse" x1="1886" x2="2174" y1="0" y2="0"><stop offset=".000" stop-color="#07f"/><stop offset=".031" stop-color="#0474ff"/><stop offset=".208" stop-color="#5463ff"/><stop offset=".646" stop-color="#ff31fd"/><stop offset=".812" stop-color="#ff15c9"/><stop offset=".990" stop-color="#ff00a5"/><stop offset="1.000" stop-color="#ff00a3"/></linearGradient>
<linearGradient id="t71" gradientUnits="userSpaceOnUse" x1="1886" x2="2171" y1="0" y2="0"><stop offset=".000" stop-color="#0075ff"/><stop offset=".032" stop-color="#0372ff"/><stop offset=".200" stop-color="#4e62ff"/><stop offset=".663" stop-color="#ff2efd"/><stop offset=".832" stop-color="#ff13ca"/><stop offset=".989" stop-color="#f0a"/><stop offset="1.000" stop-color="#ff00a8"/></linearGradient>
<linearGradient id="t72" gradientUnits="userSpaceOnUse" x1="1886" x2="2168" y1="0" y2="0"><stop offset=".000" stop-color="#0072ff"/><stop offset=".032" stop-color="#026fff"/><stop offset=".202" stop-color="#4d5fff"/><stop offset=".681" stop-color="#ff2bfd"/><stop offset=".851" stop-color="#ff10cb"/><stop offset="1.000" stop-color="#ff00ac"/></linearGradient>
<linearGradient id="t73" gradientUnits="userSpaceOnUse" x1="1886" x2="2165" y1="0" y2="0"><stop offset=".000" stop-color="#0070ff"/><stop offset=".032" stop-color="#016dff"/><stop offset=".183" stop-color="#435fff"/><stop offset=".699" stop-color="#ff28fd"/><stop offset=".882" stop-color="#ff0cc9"/><stop offset="1.000" stop-color="#ff00b1"/></linearGradient>
<linearGradient id="t74" gradientUnits="userSpaceOnUse" x1="1886" x2="2162" y1="0" y2="0"><stop offset=".000" stop-color="#006dff"/><stop offset=".033" stop-color="#006bff"/><stop offset=".185" stop-color="#415dff"/><stop offset=".717" stop-color="#ff24fd"/><stop offset=".902" stop-color="#ff0ac9"/><stop offset="1.000" stop-color="#ff00b5"/></linearGradient>
<linearGradient id="t75" gradientUnits="userSpaceOnUse" x1="1889" x2="2159" y1="0" y2="0"><stop offset=".000" stop-color="#006aff"/><stop offset=".022" stop-color="#0068ff"/><stop offset=".211" stop-color="#4c58ff"/><stop offset=".733" stop-color="#ff21fd"/><stop offset=".922" stop-color="#ff07ca"/><stop offset="1.000" stop-color="#ff00ba"/></linearGradient>
<linearGradient id="t76" gradientUnits="userSpaceOnUse" x1="1889" x2="2159" y1="0" y2="0"><stop offset=".000" stop-color="#0068ff"/><stop offset=".033" stop-color="#0465ff"/><stop offset=".244" stop-color="#5752ff"/><stop offset=".744" stop-color="#ff1efd"/><stop offset=".933" stop-color="#ff04cb"/><stop offset="1.000" stop-color="#ff00bd"/></linearGradient>
<linearGradient id="t77" gradientUnits="userSpaceOnUse" x1="1889" x2="2156" y1="0" y2="0"><stop offset=".000" stop-color="#06f"/><stop offset=".034" stop-color="#0363ff"/><stop offset=".236" stop-color="#5151ff"/><stop offset=".764" stop-color="#ff1bfd"/><stop offset=".966" stop-color="#ff00c9"/><stop offset="1.000" stop-color="#ff00c2"/></linearGradient>
<linearGradient id="t78" gradientUnits="userSpaceOnUse" x1="1889" x2="2153" y1="0" y2="0"><stop offset=".000" stop-color="#0064ff"/><stop offset=".034" stop-color="#0261ff"/><stop offset=".227" stop-color="#4c50ff"/><stop offset=".784" stop-color="#ff18fd"/><stop offset=".977" stop-color="#f0c"/><stop offset="1.000" stop-color="#ff00c7"/></linearGradient>
<linearGradient id="t79" gradientUnits="userSpaceOnUse" x1="1889" x2="2150" y1="0" y2="0"><stop offset=".000" stop-color="#0062ff"/><stop offset=".034" stop-color="#015fff"/><stop offset=".218" stop-color="#464fff"/><stop offset=".805" stop-color="#ff15fd"/><stop offset=".977" stop-color="#ff00d1"/><stop offset="1.000" stop-color="#f0c"/></linearGradient>
<linearGradient id="t80" gradientUnits="userSpaceOnUse" x1="1889" x2="2147" y1="0" y2="0"><stop offset=".000" stop-color="#005fff"/><stop offset=".035" stop-color="#005dff"/><stop offset=".198" stop-color="#3d4fff"/><stop offset=".826" stop-color="#ff12fd"/><stop offset=".988" stop-color="#ff00d4"/><stop offset="1.000" stop-color="#ff00d1"/></linearGradient>
<linearGradient id="t81" gradientUnits="userSpaceOnUse" x1="1892" x2="2144" y1="0" y2="0"><stop offset=".000" stop-color="#005dff"/><stop offset=".024" stop-color="#005bff"/><stop offset=".238" stop-color="#4b4aff"/><stop offset=".845" stop-color="#ff0ffd"/><stop offset=".988" stop-color="#ff00d9"/><stop offset="1.000" stop-color="#ff00d7"/></linearGradient>
<linearGradient id="t82" gradientUnits="userSpaceOnUse" x1="1892" x2="2141" y1="0" y2="0"><stop offset=".000" stop-color="#005bff"/><stop offset=".036" stop-color="#0458ff"/><stop offset=".277" stop-color="#5545ff"/><stop offset=".867" stop-color="#ff0cfd"/><stop offset=".988" stop-color="#ff00df"/><stop offset="1.000" stop-color="#ff00dc"/></linearGradient>
<linearGradient id="t83" gradientUnits="userSpaceOnUse" x1="1892" x2="2138" y1="0" y2="0"><stop offset=".000" stop-color="#0059ff"/><stop offset=".037" stop-color="#0356ff"/><stop offset=".268" stop-color="#5044ff"/><stop offset=".890" stop-color="#ff09fd"/><stop offset=".988" stop-color="#ff00e5"/><stop offset="1.000" stop-color="#ff00e2"/></linearGradient>
<linearGradient id="t84" gradientUnits="userSpaceOnUse" x1="1892" x2="2135" y1="0" y2="0"><stop offset=".000" stop-color="#0057ff"/><stop offset=".037" stop-color="#0254ff"/><stop offset=".259" stop-color="#4a43ff"/><stop offset=".901" stop-color="#fd08ff"/><stop offset="1.000" stop-color="#ff00e8"/></linearGradient>
<linearGradient id="t85" gradientUnits="userSpaceOnUse" x1="1892" x2="2132" y1="0" y2="0"><stop offset=".000" stop-color="#05f"/><stop offset=".037" stop-color="#0152ff"/><stop offset=".250" stop-color="#4643ff"/><stop offset=".900" stop-color="#f608ff"/><stop offset=".950" stop-color="#ff01fa"/><stop offset="1.000" stop-color="#f0e"/></linearGradient>
<linearGradient id="t86" gradientUnits="userSpaceOnUse" x1="1892" x2="2129" y1="0" y2="0"><stop offset=".000" stop-color="#0053ff"/><stop offset=".038" stop-color="#0050ff"/><stop offset=".228" stop-color="#3d43ff"/><stop offset=".899" stop-color="#f008ff"/><stop offset=".962" stop-color="#ff00fe"/><stop offset="1.000" stop-color="#ff00f4"/></linearGradient>
<linearGradient id="t87" gradientUnits="userSpaceOnUse" x1="1895" x2="2126" y1="0" y2="0"><stop offset=".000" stop-color="#0050ff"/><stop offset=".026" stop-color="#004fff"/><stop offset=".260" stop-color="#473eff"/><stop offset=".909" stop-color="#ed06ff"/><stop offset=".987" stop-color="#ff00fe"/><stop offset="1.000" stop-color="#ff00fa"/></linearGradient>
<linearGradient id="t88" gradientUnits="userSpaceOnUse" x1="1895" x2="2123" y1="0" y2="0"><stop offset=".000" stop-color="#004fff"/><stop offset=".039" stop-color="#044cff"/><stop offset=".316" stop-color="#5339ff"/><stop offset=".934" stop-color="#ed03ff"/><stop offset="1.000" stop-color="#fd00ff"/></linearGradient>
<linearGradient id="t89" gradientUnits="userSpaceOnUse" x1="1895" x2="2120" y1="0" y2="0"><stop offset=".000" stop-color="#004dff"/><stop offset=".040" stop-color="#034aff"/><stop offset=".320" stop-color="#5237ff"/><stop offset=".933" stop-color="#e703ff"/><stop offset="1.000" stop-color="#f700ff"/></linearGradient>
<linearGradient id="t90" gradientUnits="userSpaceOnUse" x1="1895" x2="2117" y1="0" y2="0"><stop offset=".000" stop-color="#004bff"/><stop offset=".041" stop-color="#0249ff"/><stop offset=".311" stop-color="#4d37ff"/><stop offset=".932" stop-color="#e103ff"/><stop offset="1.000" stop-color="#f000ff"/></linearGradient>
<linearGradient id="t91" gradientUnits="userSpaceOnUse" x1="1895" x2="2114" y1="0" y2="0"><stop offset=".000" stop-color="#004aff"/><stop offset=".041" stop-color="#0147ff"/><stop offset=".301" stop-color="#4836ff"/><stop offset=".932" stop-color="#db03ff"/><stop offset="1.000" stop-color="#ea00ff"/></linearGradient>
<linearGradient id="t92" gradientUnits="userSpaceOnUse" x1="1895" x2="2111" y1="0" y2="0"><stop offset=".000" stop-color="#0048ff"/><stop offset=".042" stop-color="#0046ff"/><stop offset=".278" stop-color="#4036ff"/><stop offset=".931" stop-color="#d503ff"/><stop offset="1.000" stop-color="#e400ff"/></linearGradient>
<linearGradient id="t93" gradientUnits="userSpaceOnUse" x1="1898" x2="2108" y1="0" y2="0"><stop offset=".000" stop-color="#0046ff"/><stop offset=".029" stop-color="#04f"/><stop offset=".300" stop-color="#4633ff"/><stop offset=".943" stop-color="#d201ff"/><stop offset="1.000" stop-color="#df00ff"/></linearGradient>
<linearGradient id="t94" gradientUnits="userSpaceOnUse" x1="1898" x2="2105" y1="0" y2="0"><stop offset=".000" stop-color="#04f"/><stop offset=".043" stop-color="#0442ff"/><stop offset=".377" stop-color="#552dff"/><stop offset=".986" stop-color="#d600ff"/><stop offset="1.000" stop-color="#d900ff"/></linearGradient>
<linearGradient id="t95" gradientUnits="userSpaceOnUse" x1="1898" x2="2102" y1="0" y2="0"><stop offset=".000" stop-color="#0043ff"/><stop offset=".044" stop-color="#0340ff"/><stop offset=".368" stop-color="#502dff"/><stop offset=".985" stop-color="#d000ff"/><stop offset="1.000" stop-color="#d300ff"/></linearGradient>
<linearGradient id="t96" gradientUnits="userSpaceOnUse" x1="1898" x2="2099" y1="0" y2="0"><stop offset=".000" stop-color="#0041ff"/><stop offset=".045" stop-color="#023fff"/><stop offset=".358" stop-color="#4c2cff"/><stop offset=".985" stop-color="#cb00ff"/><stop offset="1.000" stop-color="#ce00ff"/></linearGradient>
<linearGradient id="t97" gradientUnits="userSpaceOnUse" x1="1898" x2="2096" y1="0" y2="0"><stop offset=".000" stop-color="#0040ff"/><stop offset=".045" stop-color="#013dff"/><stop offset=".348" stop-color="#482cff"/><stop offset=".985" stop-color="#c500ff"/><stop offset="1.000" stop-color="#c800ff"/></linearGradient>
<linearGradient id="t98" gradientUnits="userSpaceOnUse" x1="1898" x2="2093" y1="0" y2="0"><stop offset=".000" stop-color="#003eff"/><stop offset=".046" stop-color="#003cff"/><stop offset=".323" stop-color="#402cff"/><stop offset=".985" stop-color="#c000ff"/><stop offset="1.000" stop-color="#c300ff"/></linearGradient>
<linearGradient id="t99" gradientUnits="userSpaceOnUse" x1="1898" x2="2090" y1="0" y2="0"><stop offset=".000" stop-color="#003dff"/><stop offset=".047" stop-color="#003aff"/><stop offset=".344" stop-color="#422aff"/><stop offset=".984" stop-color="#b0f"/><stop offset="1.000" stop-color="#be00ff"/></linearGradient>
<linearGradient id="t100" gradientUnits="userSpaceOnUse" x1="1901" x2="2087" y1="0" y2="0"><stop offset=".000" stop-color="#003bff"/><stop offset=".048" stop-color="#0438ff"/><stop offset=".435" stop-color="#5323ff"/><stop offset=".984" stop-color="#b600ff"/><stop offset="1.000" stop-color="#b900ff"/></linearGradient>
<linearGradient id="t101" gradientUnits="userSpaceOnUse" x1="1901" x2="2084" y1="0" y2="0"><stop offset=".000" stop-color="#0039ff"/><stop offset=".049" stop-color="#0337ff"/><stop offset=".426" stop-color="#4f23ff"/><stop offset="1.000" stop-color="#b400ff"/></linearGradient>
<linearGradient id="t102" gradientUnits="userSpaceOnUse" x1="1901" x2="2081" y1="0" y2="0"><stop offset=".000" stop-color="#0038ff"/><stop offset=".050" stop-color="#0236ff"/><stop offset=".417" stop-color="#4b23ff"/><stop offset="1.000" stop-color="#af00ff"/></linearGradient>
<linearGradient id="t103" gradientUnits="userSpaceOnUse" x1="1901" x2="2078" y1="0" y2="0"><stop offset=".000" stop-color="#0037ff"/><stop offset=".068" stop-color="#0633ff"/><stop offset=".542" stop-color="#5e1bff"/><stop offset="1.000" stop-color="#a0f"/></linearGradient>
<linearGradient id="t104" gradientUnits="userSpaceOnUse" x1="1901" x2="2075" y1="0" y2="0"><stop offset=".000" stop-color="#0035ff"/><stop offset=".052" stop-color="#0133ff"/><stop offset=".397" stop-color="#4322ff"/><stop offset="1.000" stop-color="#a600ff"/></linearGradient>
<linearGradient id="t105" gradientUnits="userSpaceOnUse" x1="1901" x2="2072" y1="0" y2="0"><stop offset=".000" stop-color="#0034ff"/><stop offset=".053" stop-color="#0032ff"/><stop offset=".404" stop-color="#4221ff"/><stop offset="1.000" stop-color="#a100ff"/></linearGradient>
<linearGradient id="t106" gradientUnits="userSpaceOnUse" x1="1904" x2="2069" y1="0" y2="0"><stop offset=".000" stop-color="#0032ff"/><stop offset=".055" stop-color="#0430ff"/><stop offset=".527" stop-color="#5519ff"/><stop offset="1.000" stop-color="#9c00ff"/></linearGradient>
<linearGradient id="t107" gradientUnits="userSpaceOnUse" x1="1904" x2="2066" y1="0" y2="0"><stop offset=".000" stop-color="#0031ff"/><stop offset=".056" stop-color="#032fff"/><stop offset=".519" stop-color="#5119ff"/><stop offset="1.000" stop-color="#9800ff"/></linearGradient>
<linearGradient id="t108" gradientUnits="userSpaceOnUse" x1="1904" x2="2063" y1="0" y2="0"><stop offset=".000" stop-color="#0030ff"/><stop offset=".057" stop-color="#022dff"/><stop offset=".509" stop-color="#4d19ff"/><stop offset="1.000" stop-color="#9400ff"/></linearGradient>
<linearGradient id="t109" gradientUnits="userSpaceOnUse" x1="1904" x2="2060" y1="0" y2="0"><stop offset=".000" stop-color="#002fff"/><stop offset=".077" stop-color="#062bff"/><stop offset=".635" stop-color="#5c12ff"/><stop offset="1.000" stop-color="#8f00ff"/></linearGradient>
<linearGradient id="t110" gradientUnits="userSpaceOnUse" x1="1904" x2="2057" y1="0" y2="0"><stop offset=".000" stop-color="#002dff"/><stop offset=".059" stop-color="#012bff"/><stop offset=".471" stop-color="#4319ff"/><stop offset="1.000" stop-color="#8b00ff"/></linearGradient>
<linearGradient id="t111" gradientUnits="userSpaceOnUse" x1="1904" x2="2054" y1="0" y2="0"><stop offset=".000" stop-color="#002cff"/><stop offset=".060" stop-color="#002aff"/><stop offset=".460" stop-color="#3f19ff"/><stop offset="1.000" stop-color="#8700ff"/></linearGradient>
<linearGradient id="t112" gradientUnits="userSpaceOnUse" x1="1907" x2="2051" y1="0" y2="0"><stop offset=".000" stop-color="#002aff"/><stop offset=".062" stop-color="#0428ff"/><stop offset=".625" stop-color="#5411ff"/><stop offset="1.000" stop-color="#8300ff"/></linearGradient>
<linearGradient id="t113" gradientUnits="userSpaceOnUse" x1="1907" x2="2048" y1="0" y2="0"><stop offset=".000" stop-color="#0029ff"/><stop offset=".064" stop-color="#0327ff"/><stop offset=".617" stop-color="#5011ff"/><stop offset="1.000" stop-color="#7f00ff"/></linearGradient>
<linearGradient id="t114" gradientUnits="userSpaceOnUse" x1="1907" x2="2045" y1="0" y2="0"><stop offset=".000" stop-color="#0028ff"/><stop offset=".065" stop-color="#0226ff"/><stop offset=".609" stop-color="#4c10ff"/><stop offset="1.000" stop-color="#7b00ff"/></linearGradient>
<linearGradient id="t115" gradientUnits="userSpaceOnUse" x1="1907" x2="2042" y1="0" y2="0"><stop offset=".000" stop-color="#0027ff"/><stop offset=".089" stop-color="#0624ff"/><stop offset=".778" stop-color="#5d09ff"/><stop offset="1.000" stop-color="#70f"/></linearGradient>
<linearGradient id="t116" gradientUnits="userSpaceOnUse" x1="1907" x2="2039" y1="0" y2="0"><stop offset=".000" stop-color="#0026ff"/><stop offset=".091" stop-color="#0523ff"/><stop offset=".773" stop-color="#5a09ff"/><stop offset="1.000" stop-color="#7300ff"/></linearGradient>
<linearGradient id="t117" gradientUnits="userSpaceOnUse" x1="1907" x2="2036" y1="0" y2="0"><stop offset=".000" stop-color="#0025ff"/><stop offset=".070" stop-color="#02f"/><stop offset=".558" stop-color="#3f11ff"/><stop offset="1.000" stop-color="#6f00ff"/></linearGradient>
<linearGradient id="t118" gradientUnits="userSpaceOnUse" x1="1910" x2="2033" y1="0" y2="0"><stop offset=".000" stop-color="#0023ff"/><stop offset=".073" stop-color="#0421ff"/><stop offset=".756" stop-color="#5208ff"/><stop offset="1.000" stop-color="#6c00ff"/></linearGradient>
<linearGradient id="t119" gradientUnits="userSpaceOnUse" x1="1910" x2="2030" y1="0" y2="0"><stop offset=".000" stop-color="#02f"/><stop offset=".075" stop-color="#0320ff"/><stop offset=".750" stop-color="#4f08ff"/><stop offset="1.000" stop-color="#6800ff"/></linearGradient>
<linearGradient id="t120" gradientUnits="userSpaceOnUse" x1="1910" x2="2027" y1="0" y2="0"><stop offset=".000" stop-color="#0021ff"/><stop offset=".077" stop-color="#021fff"/><stop offset=".769" stop-color="#4e07ff"/><stop offset="1.000" stop-color="#6400ff"/></linearGradient>
<linearGradient id="t121" gradientUnits="userSpaceOnUse" x1="1910" x2="2024" y1="0" y2="0"><stop offset=".000" stop-color="#0020ff"/><stop offset=".105" stop-color="#051dff"/><stop offset=".947" stop-color="#5c00ff"/><stop offset="1.000" stop-color="#6100ff"/></linearGradient>
<linearGradient id="t122" gradientUnits="userSpaceOnUse" x1="1910" x2="2021" y1="0" y2="0"><stop offset=".000" stop-color="#001fff"/><stop offset=".108" stop-color="#051cff"/><stop offset=".946" stop-color="#5800ff"/><stop offset="1.000" stop-color="#5d00ff"/></linearGradient>
<linearGradient id="t123" gradientUnits="userSpaceOnUse" x1="1910" x2="2021" y1="0" y2="0"><stop offset=".000" stop-color="#001eff"/><stop offset=".081" stop-color="#001cff"/><stop offset=".676" stop-color="#3f09ff"/><stop offset="1.000" stop-color="#5c00ff"/></linearGradient>
<linearGradient id="t124" gradientUnits="userSpaceOnUse" x1="1913" x2="2018" y1="0" y2="0"><stop offset=".000" stop-color="#001cff"/><stop offset=".086" stop-color="#041aff"/><stop offset=".943" stop-color="#5400ff"/><stop offset="1.000" stop-color="#5900ff"/></linearGradient>
<linearGradient id="t125" gradientUnits="userSpaceOnUse" x1="1913" x2="2015" y1="0" y2="0"><stop offset=".000" stop-color="#001bff"/><stop offset=".088" stop-color="#0319ff"/><stop offset=".941" stop-color="#5000ff"/><stop offset="1.000" stop-color="#50f"/></linearGradient>
<linearGradient id="t126" gradientUnits="userSpaceOnUse" x1="1913" x2="2012" y1="0" y2="0"><stop offset=".000" stop-color="#001aff"/><stop offset=".121" stop-color="#0617ff"/><stop offset="1.000" stop-color="#5200ff"/></linearGradient>
<linearGradient id="t127" gradientUnits="userSpaceOnUse" x1="1913" x2="2009" y1="0" y2="0"><stop offset=".000" stop-color="#0019ff"/><stop offset=".125" stop-color="#0516ff"/><stop offset="1.000" stop-color="#4e00ff"/></linearGradient>
<linearGradient id="t128" gradientUnits="userSpaceOnUse" x1="1913" x2="2006" y1="0" y2="0"><stop offset=".000" stop-color="#0018ff"/><stop offset=".129" stop-color="#0515ff"/><stop offset="1.000" stop-color="#4b00ff"/></linearGradient>
<linearGradient id="t129" gradientUnits="userSpaceOnUse" x1="1913" x2="2003" y1="0" y2="0"><stop offset=".000" stop-color="#0018ff"/><stop offset=".133" stop-color="#0414ff"/><stop offset="1.000" stop-color="#4800ff"/></linearGradient>
<linearGradient id="t130" gradientUnits="userSpaceOnUse" x1="1916" x2="2000" y1="0" y2="0"><stop offset=".000" stop-color="#0016ff"/><stop offset=".107" stop-color="#0414ff"/><stop offset="1.000" stop-color="#4500ff"/></linearGradient>
<linearGradient id="t131" gradientUnits="userSpaceOnUse" x1="1916" x2="1997" y1="0" y2="0"><stop offset=".000" stop-color="#0015ff"/><stop offset=".111" stop-color="#0313ff"/><stop offset="1.000" stop-color="#4200ff"/></linearGradient>
<linearGradient id="t132" gradientUnits="userSpaceOnUse" x1="1916" x2="1994" y1="0" y2="0"><stop offset=".000" stop-color="#0014ff"/><stop offset=".154" stop-color="#0611ff"/><stop offset="1.000" stop-color="#3e00ff"/></linearGradient>
<linearGradient id="t133" gradientUnits="userSpaceOnUse" x1="1916" x2="1991" y1="0" y2="0"><stop offset=".000" stop-color="#0013ff"/><stop offset=".160" stop-color="#0510ff"/><stop offset="1.000" stop-color="#3b00ff"/></linearGradient>
<linearGradient id="t134" gradientUnits="userSpaceOnUse" x1="1916" x2="1988" y1="0" y2="0"><stop offset=".000" stop-color="#0012ff"/><stop offset=".167" stop-color="#050fff"/><stop offset="1.000" stop-color="#3800ff"/></linearGradient>
<linearGradient id="t135" gradientUnits="userSpaceOnUse" x1="1916" x2="1985" y1="0" y2="0"><stop offset=".000" stop-color="#01f"/><stop offset=".174" stop-color="#040eff"/><stop offset="1.000" stop-color="#3500ff"/></linearGradient>
<linearGradient id="t136" gradientUnits="userSpaceOnUse" x1="1916" x2="1982" y1="0" y2="0"><stop offset=".000" stop-color="#01f"/><stop offset=".182" stop-color="#040dff"/><stop offset="1.000" stop-color="#3200ff"/></linearGradient>
<linearGradient id="t137" gradientUnits="userSpaceOnUse" x1="1919" x2="1979" y1="0" y2="0"><stop offset=".000" stop-color="#000fff"/><stop offset=".150" stop-color="#030dff"/><stop offset="1.000" stop-color="#2f00ff"/></linearGradient>
<linearGradient id="t138" gradientUnits="userSpaceOnUse" x1="1919" x2="1976" y1="0" y2="0"><stop offset=".000" stop-color="#000eff"/><stop offset=".211" stop-color="#060bff"/><stop offset="1.000" stop-color="#2c00ff"/></linearGradient>
<linearGradient id="t139" gradientUnits="userSpaceOnUse" x1="1919" x2="1973" y1="0" y2="0"><stop offset=".000" stop-color="#000dff"/><stop offset=".222" stop-color="#050aff"/><stop offset="1.000" stop-color="#2900ff"/></linearGradient>
<linearGradient id="t140" gradientUnits="userSpaceOnUse" x1="1919" x2="1970" y1="0" y2="0"><stop offset=".000" stop-color="#000cff"/><stop offset=".235" stop-color="#0509ff"/><stop offset="1.000" stop-color="#2600ff"/></linearGradient>
<linearGradient id="t141" gradientUnits="userSpaceOnUse" x1="1919" x2="1967" y1="0" y2="0"><stop offset=".000" stop-color="#000cff"/><stop offset=".250" stop-color="#0408ff"/><stop offset="1.000" stop-color="#2300ff"/></linearGradient>
<linearGradient id="t142" gradientUnits="userSpaceOnUse" x1="1919" x2="1964" y1="0" y2="0"><stop offset=".000" stop-color="#000bff"/><stop offset=".267" stop-color="#0407ff"/><stop offset="1.000" stop-color="#2000ff"/></linearGradient>
<linearGradient id="t143" gradientUnits="userSpaceOnUse" x1="1922" x2="1961" y1="0" y2="0"><stop offset=".000" stop-color="#0009ff"/><stop offset=".231" stop-color="#0307ff"/><stop offset="1.000" stop-color="#1d00ff"/></linearGradient>
<linearGradient id="t144" gradientUnits="userSpaceOnUse" x1="1922" x2="1958" y1="0" y2="0"><stop offset=".000" stop-color="#0008ff"/><stop offset=".333" stop-color="#0605ff"/><stop offset="1.000" stop-color="#1a00ff"/></linearGradient>
<linearGradient id="t145" gradientUnits="userSpaceOnUse" x1="1922" x2="1955" y1="0" y2="0"><stop offset=".000" stop-color="#0007ff"/><stop offset=".364" stop-color="#0504ff"/><stop offset="1.000" stop-color="#1700ff"/></linearGradient>
<linearGradient id="t146" gradientUnits="userSpaceOnUse" x1="1922" x2="1952" y1="0" y2="0"><stop offset=".000" stop-color="#0007ff"/><stop offset=".400" stop-color="#0503ff"/><stop offset="1.000" stop-color="#1400ff"/></linearGradient>
<linearGradient id="t147" gradientUnits="userSpaceOnUse" x1="1922" x2="1949" y1="0" y2="0"><stop offset=".000" stop-color="#0006ff"/><stop offset=".444" stop-color="#0402ff"/><stop offset="1.000" stop-color="#10f"/></linearGradient>
<linearGradient id="t148" gradientUnits="userSpaceOnUse" x1="1922" x2="1946" y1="0" y2="0"><stop offset=".000" stop-color="#0005ff"/><stop offset=".500" stop-color="#0301ff"/><stop offset="1.000" stop-color="#0e00ff"/></linearGradient>
<linearGradient id="t149" gradientUnits="userSpaceOnUse" x1="1925" x2="1943" y1="0" y2="0"><stop offset=".000" stop-color="#0003ff"/><stop offset=".667" stop-color="#0600ff"/><stop offset="1.000" stop-color="#0b00ff"/></linearGradient>
</defs>
<rect x="1679.0" y="291.0" width="866.5" height="666.5" fill="#222"/>
<g clip-path="url(#cp)"><g clip-path="url(#cl)">
<rect x="1712" y="304" width="105" height="4.6" fill="url(#d0)"/>
<rect x="1697" y="308" width="165" height="4.6" fill="url(#d1)"/>
<rect x="1691" y="312" width="210" height="4.6" fill="url(#d2)"/>
<rect x="1688" y="316" width="249" height="4.6" fill="url(#d3)"/>
<rect x="1682" y="320" width="291" height="4.6" fill="url(#d4)"/>
<rect x="1682" y="324" width="324" height="4.6" fill="url(#d5)"/>
<rect x="1679" y="328" width="363" height="4.6" fill="url(#d6)"/>
<rect x="1679" y="332" width="399" height="4.6" fill="url(#d7)"/>
<rect x="1679" y="336" width="432" height="4.6" fill="url(#d8)"/>
<rect x="1679" y="340" width="468" height="4.6" fill="url(#d9)"/>
<rect x="1679" y="344" width="504" height="4.6" fill="url(#d10)"/>
<rect x="1679" y="348" width="537" height="4.6" fill="url(#d11)"/>
<rect x="1679" y="352" width="573" height="4.6" fill="url(#d12)"/>
<rect x="1679" y="356" width="606" height="4.6" fill="url(#d13)"/>
<rect x="1679" y="360" width="642" height="4.6" fill="url(#d14)"/>
<rect x="1679" y="364" width="678" height="4.6" fill="url(#d15)"/>
<rect x="1679" y="368" width="714" height="4.6" fill="url(#d16)"/>
<rect x="1679" y="372" width="747" height="4.6" fill="url(#d17)"/>
<rect x="1679" y="376" width="783" height="4.6" fill="url(#d18)"/>
<rect x="1679" y="380" width="816" height="4.6" fill="url(#d19)"/>
<rect x="1679" y="384" width="852" height="4.6" fill="url(#d20)"/>
<rect x="1679" y="388" width="867" height="4.6" fill="url(#d21)"/>
<rect x="1679" y="392" width="867" height="4.6" fill="url(#d22)"/>
<rect x="1679" y="396" width="867" height="4.6" fill="url(#d23)"/>
<rect x="1679" y="400" width="867" height="4.6" fill="url(#d24)"/>
<rect x="1682" y="404" width="864" height="4.6" fill="url(#d25)"/>
<rect x="1682" y="408" width="864" height="4.6" fill="url(#d26)"/>
<rect x="1682" y="412" width="864" height="4.6" fill="url(#d27)"/>
<rect x="1685" y="416" width="861" height="4.6" fill="url(#d28)"/>
<rect x="1685" y="420" width="861" height="4.6" fill="url(#d29)"/>
<rect x="1685" y="424" width="861" height="4.6" fill="url(#d30)"/>
<rect x="1688" y="428" width="858" height="4.6" fill="url(#d31)"/>
<rect x="1688" y="432" width="858" height="4.6" fill="url(#d32)"/>
<rect x="1691" y="436" width="855" height="4.6" fill="url(#d33)"/>
<rect x="1691" y="440" width="849" height="4.6" fill="url(#d34)"/>
<rect x="1694" y="444" width="843" height="4.6" fill="url(#d35)"/>
<rect x="1694" y="448" width="840" height="4.6" fill="url(#d36)"/>
<rect x="1694" y="452" width="834" height="4.6" fill="url(#d37)"/>
<rect x="1697" y="456" width="828" height="4.6" fill="url(#d38)"/>
<rect x="1697" y="460" width="825" height="4.6" fill="url(#d39)"/>
<rect x="1700" y="464" width="819" height="4.6" fill="url(#d40)"/>
<rect x="1700" y="468" width="813" height="4.6" fill="url(#d41)"/>
<rect x="1703" y="472" width="807" height="4.6" fill="url(#d42)"/>
<rect x="1703" y="476" width="804" height="4.6" fill="url(#d43)"/>
<rect x="1706" y="480" width="795" height="4.6" fill="url(#d44)"/>
<rect x="1706" y="484" width="792" height="4.6" fill="url(#d45)"/>
<rect x="1709" y="488" width="786" height="4.6" fill="url(#d46)"/>
<rect x="1709" y="492" width="780" height="4.6" fill="url(#d47)"/>
<rect x="1712" y="496" width="774" height="4.6" fill="url(#d48)"/>
<rect x="1712" y="500" width="771" height="4.6" fill="url(#d49)"/>
<rect x="1715" y="504" width="765" height="4.6" fill="url(#d50)"/>
<rect x="1718" y="508" width="756" height="4.6" fill="url(#d51)"/>
<rect x="1718" y="512" width="753" height="4.6" fill="url(#d52)"/>
<rect x="1721" y="516" width="747" height="4.6" fill="url(#d53)"/>
<rect x="1721" y="520" width="741" height="4.6" fill="url(#d54)"/>
<rect x="1724" y="524" width="735" height="4.6" fill="url(#d55)"/>
<rect x="1724" y="528" width="732" height="4.6" fill="url(#d56)"/>
<rect x="1727" y="532" width="723" height="4.6" fill="url(#d57)"/>
<rect x="1730" y="536" width="717" height="4.6" fill="url(#d58)"/>
<rect x="1730" y="540" width="714" height="4.6" fill="url(#d59)"/>
<rect x="1733" y="544" width="708" height="4.6" fill="url(#d60)"/>
<rect x="1733" y="548" width="702" height="4.6" fill="url(#d61)"/>
<rect x="1736" y="552" width="696" height="4.6" fill="url(#d62)"/>
<rect x="1739" y="556" width="690" height="4.6" fill="url(#d63)"/>
<rect x="1739" y="560" width="684" height="4.6" fill="url(#d64)"/>
<rect x="1742" y="564" width="678" height="4.6" fill="url(#d65)"/>
<rect x="1745" y="568" width="672" height="4.6" fill="url(#d66)"/>
<rect x="1745" y="572" width="666" height="4.6" fill="url(#d67)"/>
<rect x="1748" y="576" width="660" height="4.6" fill="url(#d68)"/>
<rect x="1751" y="580" width="654" height="4.6" fill="url(#d69)"/>
<rect x="1751" y="584" width="651" height="4.6" fill="url(#d70)"/>
<rect x="1754" y="588" width="642" height="4.6" fill="url(#d71)"/>
<rect x="1757" y="592" width="636" height="4.6" fill="url(#d72)"/>
<rect x="1757" y="596" width="633" height="4.6" fill="url(#d73)"/>
<rect x="1760" y="600" width="624" height="4.6" fill="url(#d74)"/>
<rect x="1763" y="604" width="618" height="4.6" fill="url(#d75)"/>
<rect x="1766" y="608" width="612" height="4.6" fill="url(#d76)"/>
<rect x="1766" y="612" width="606" height="4.6" fill="url(#d77)"/>
<rect x="1769" y="616" width="600" height="4.6" fill="url(#d78)"/>
<rect x="1772" y="620" width="594" height="4.6" fill="url(#d79)"/>
<rect x="1775" y="624" width="585" height="4.6" fill="url(#d80)"/>
<rect x="1775" y="628" width="582" height="4.6" fill="url(#d81)"/>
<rect x="1778" y="632" width="576" height="4.6" fill="url(#d82)"/>
<rect x="1781" y="636" width="570" height="4.6" fill="url(#d83)"/>
<rect x="1784" y="640" width="561" height="4.6" fill="url(#d84)"/>
<rect x="1784" y="644" width="558" height="4.6" fill="url(#d85)"/>
<rect x="1787" y="648" width="552" height="4.6" fill="url(#d86)"/>
<rect x="1790" y="652" width="543" height="4.6" fill="url(#d87)"/>
<rect x="1793" y="656" width="537" height="4.6" fill="url(#d88)"/>
<rect x="1796" y="660" width="531" height="4.6" fill="url(#d89)"/>
<rect x="1796" y="664" width="525" height="4.6" fill="url(#d90)"/>
<rect x="1799" y="668" width="519" height="4.6" fill="url(#d91)"/>
<rect x="1802" y="672" width="513" height="4.6" fill="url(#d92)"/>
<rect x="1805" y="676" width="507" height="4.6" fill="url(#d93)"/>
<rect x="1808" y="680" width="498" height="4.6" fill="url(#d94)"/>
<rect x="1808" y="684" width="495" height="4.6" fill="url(#d95)"/>
<rect x="1811" y="688" width="489" height="4.6" fill="url(#d96)"/>
<rect x="1814" y="692" width="480" height="4.6" fill="url(#d97)"/>
<rect x="1817" y="696" width="474" height="4.6" fill="url(#d98)"/>
<rect x="1820" y="700" width="468" height="4.6" fill="url(#d99)"/>
<rect x="1823" y="704" width="459" height="4.6" fill="url(#d100)"/>
<rect x="1823" y="708" width="456" height="4.6" fill="url(#d101)"/>
<rect x="1826" y="712" width="450" height="4.6" fill="url(#d102)"/>
<rect x="1829" y="716" width="444" height="4.6" fill="url(#d103)"/>
<rect x="1832" y="720" width="435" height="4.6" fill="url(#d104)"/>
<rect x="1835" y="724" width="429" height="4.6" fill="url(#d105)"/>
<rect x="1838" y="728" width="423" height="4.6" fill="url(#d106)"/>
<rect x="1841" y="732" width="414" height="4.6" fill="url(#d107)"/>
<rect x="1844" y="736" width="408" height="4.6" fill="url(#d108)"/>
<rect x="1844" y="740" width="405" height="4.6" fill="url(#d109)"/>
<rect x="1847" y="744" width="396" height="4.6" fill="url(#d110)"/>
<rect x="1850" y="748" width="390" height="4.6" fill="url(#d111)"/>
<rect x="1853" y="752" width="384" height="4.6" fill="url(#d112)"/>
<rect x="1856" y="756" width="375" height="4.6" fill="url(#d113)"/>
<rect x="1859" y="760" width="369" height="4.6" fill="url(#d114)"/>
<rect x="1862" y="764" width="363" height="4.6" fill="url(#d115)"/>
<rect x="1865" y="768" width="357" height="4.6" fill="url(#d116)"/>
<rect x="1868" y="772" width="348" height="4.6" fill="url(#d117)"/>
<rect x="1871" y="776" width="342" height="4.6" fill="url(#d118)"/>
<rect x="1874" y="780" width="336" height="4.6" fill="url(#d119)"/>
<rect x="1877" y="784" width="327" height="4.6" fill="url(#d120)"/>
<rect x="1880" y="788" width="321" height="4.6" fill="url(#d121)"/>
<rect x="1883" y="792" width="315" height="4.6" fill="url(#d122)"/>
<rect x="1886" y="796" width="306" height="4.6" fill="url(#d123)"/>
<rect x="1889" y="800" width="300" height="4.6" fill="url(#d124)"/>
<rect x="1892" y="804" width="294" height="4.6" fill="url(#d125)"/>
<rect x="1895" y="808" width="288" height="4.6" fill="url(#d126)"/>
<rect x="1901" y="812" width="276" height="4.6" fill="url(#d127)"/>
<rect x="1904" y="816" width="270" height="4.6" fill="url(#d128)"/>
<rect x="1907" y="820" width="264" height="4.6" fill="url(#d129)"/>
<rect x="1910" y="824" width="255" height="4.6" fill="url(#d130)"/>
<rect x="1913" y="828" width="249" height="4.6" fill="url(#d131)"/>
<rect x="1916" y="832" width="243" height="4.6" fill="url(#d132)"/>
<rect x="1922" y="836" width="231" height="4.6" fill="url(#d133)"/>
<rect x="1925" y="840" width="225" height="4.6" fill="url(#d134)"/>
<rect x="1928" y="844" width="219" height="4.6" fill="url(#d135)"/>
<rect x="1931" y="848" width="213" height="4.6" fill="url(#d136)"/>
<rect x="1937" y="852" width="201" height="4.6" fill="url(#d137)"/>
<rect x="1940" y="856" width="195" height="4.6" fill="url(#d138)"/>
<rect x="1946" y="860" width="186" height="4.6" fill="url(#d139)"/>
<rect x="1949" y="864" width="177" height="4.6" fill="url(#d140)"/>
<rect x="1955" y="868" width="168" height="4.6" fill="url(#d141)"/>
<rect x="1958" y="872" width="162" height="4.6" fill="url(#d142)"/>
<rect x="1964" y="876" width="150" height="4.6" fill="url(#d143)"/>
<rect x="1967" y="880" width="144" height="4.6" fill="url(#d144)"/>
<rect x="1973" y="884" width="135" height="4.6" fill="url(#d145)"/>
<rect x="1976" y="888" width="126" height="4.6" fill="url(#d146)"/>
<rect x="1982" y="892" width="117" height="4.6" fill="url(#d147)"/>
<rect x="1988" y="896" width="108" height="4.6" fill="url(#d148)"/>
<rect x="1991" y="900" width="102" height="4.6" fill="url(#d149)"/>
<rect x="1997" y="904" width="90" height="4.6" fill="url(#d150)"/>
<rect x="2000" y="908" width="84" height="4.6" fill="url(#d151)"/>
<rect x="2006" y="912" width="75" height="4.6" fill="url(#d152)"/>
<rect x="2012" y="916" width="63" height="4.6" fill="url(#d153)"/>
<rect x="2015" y="920" width="57" height="4.6" fill="url(#d154)"/>
<rect x="2021" y="924" width="48" height="4.6" fill="url(#d155)"/>
<rect x="2024" y="928" width="39" height="4.6" fill="url(#d156)"/>
<rect x="2030" y="932" width="30" height="4.6" fill="url(#d157)"/>
<rect x="2036" y="936" width="21" height="4.6" fill="url(#d158)"/>
</g>
<g clip-path="url(#ct)">
<rect x="1853" y="332" width="39" height="3.6" fill="url(#t0)"/>
<rect x="1853" y="335" width="72" height="3.6" fill="url(#t1)"/>
<rect x="1853" y="338" width="105" height="3.6" fill="url(#t2)"/>
<rect x="1853" y="341" width="135" height="3.6" fill="url(#t3)"/>
<rect x="1853" y="344" width="168" height="3.6" fill="url(#t4)"/>
<rect x="1853" y="347" width="201" height="3.6" fill="url(#t5)"/>
<rect x="1853" y="350" width="231" height="3.6" fill="url(#t6)"/>
<rect x="1856" y="353" width="261" height="3.6" fill="url(#t7)"/>
<rect x="1856" y="356" width="294" height="3.6" fill="url(#t8)"/>
<rect x="1856" y="359" width="324" height="3.6" fill="url(#t9)"/>
<rect x="1856" y="362" width="357" height="3.6" fill="url(#t10)"/>
<rect x="1856" y="365" width="390" height="3.6" fill="url(#t11)"/>
<rect x="1856" y="368" width="420" height="3.6" fill="url(#t12)"/>
<rect x="1859" y="371" width="450" height="3.6" fill="url(#t13)"/>
<rect x="1859" y="374" width="477" height="3.6" fill="url(#t14)"/>
<rect x="1859" y="377" width="477" height="3.6" fill="url(#t15)"/>
<rect x="1859" y="380" width="474" height="3.6" fill="url(#t16)"/>
<rect x="1859" y="383" width="471" height="3.6" fill="url(#t17)"/>
<rect x="1859" y="386" width="468" height="3.6" fill="url(#t18)"/>
<rect x="1862" y="389" width="462" height="3.6" fill="url(#t19)"/>
<rect x="1862" y="392" width="459" height="3.6" fill="url(#t20)"/>
<rect x="1862" y="395" width="456" height="3.6" fill="url(#t21)"/>
<rect x="1862" y="398" width="453" height="3.6" fill="url(#t22)"/>
<rect x="1862" y="401" width="450" height="3.6" fill="url(#t23)"/>
<rect x="1862" y="404" width="447" height="3.6" fill="url(#t24)"/>
<rect x="1865" y="407" width="441" height="3.6" fill="url(#t25)"/>
<rect x="1865" y="410" width="438" height="3.6" fill="url(#t26)"/>
<rect x="1865" y="413" width="435" height="3.6" fill="url(#t27)"/>
<rect x="1865" y="416" width="432" height="3.6" fill="url(#t28)"/>
<rect x="1865" y="419" width="432" height="3.6" fill="url(#t29)"/>
<rect x="1865" y="422" width="429" height="3.6" fill="url(#t30)"/>
<rect x="1865" y="425" width="426" height="3.6" fill="url(#t31)"/>
<rect x="1868" y="428" width="420" height="3.6" fill="url(#t32)"/>
<rect x="1868" y="431" width="417" height="3.6" fill="url(#t33)"/>
<rect x="1868" y="434" width="414" height="3.6" fill="url(#t34)"/>
<rect x="1868" y="437" width="411" height="3.6" fill="url(#t35)"/>
<rect x="1868" y="440" width="408" height="3.6" fill="url(#t36)"/>
<rect x="1868" y="443" width="405" height="3.6" fill="url(#t37)"/>
<rect x="1871" y="446" width="399" height="3.6" fill="url(#t38)"/>
<rect x="1871" y="449" width="396" height="3.6" fill="url(#t39)"/>
<rect x="1871" y="452" width="393" height="3.6" fill="url(#t40)"/>
<rect x="1871" y="455" width="390" height="3.6" fill="url(#t41)"/>
<rect x="1871" y="458" width="387" height="3.6" fill="url(#t42)"/>
<rect x="1871" y="461" width="384" height="3.6" fill="url(#t43)"/>
<rect x="1874" y="464" width="378" height="3.6" fill="url(#t44)"/>
<rect x="1874" y="467" width="375" height="3.6" fill="url(#t45)"/>
<rect x="1874" y="470" width="372" height="3.6" fill="url(#t46)"/>
<rect x="1874" y="473" width="369" height="3.6" fill="url(#t47)"/>
<rect x="1874" y="476" width="366" height="3.6" fill="url(#t48)"/>
<rect x="1874" y="479" width="363" height="3.6" fill="url(#t49)"/>
<rect x="1877" y="482" width="357" height="3.6" fill="url(#t50)"/>
<rect x="1877" y="485" width="354" height="3.6" fill="url(#t51)"/>
<rect x="1877" y="488" width="351" height="3.6" fill="url(#t52)"/>
<rect x="1877" y="491" width="348" height="3.6" fill="url(#t53)"/>
<rect x="1877" y="494" width="345" height="3.6" fill="url(#t54)"/>
<rect x="1877" y="497" width="342" height="3.6" fill="url(#t55)"/>
<rect x="1880" y="500" width="336" height="3.6" fill="url(#t56)"/>
<rect x="1880" y="503" width="333" height="3.6" fill="url(#t57)"/>
<rect x="1880" y="506" width="330" height="3.6" fill="url(#t58)"/>
<rect x="1880" y="509" width="327" height="3.6" fill="url(#t59)"/>
<rect x="1880" y="512" width="324" height="3.6" fill="url(#t60)"/>
<rect x="1880" y="515" width="321" height="3.6" fill="url(#t61)"/>
<rect x="1883" y="518" width="315" height="3.6" fill="url(#t62)"/>
<rect x="1883" y="521" width="312" height="3.6" fill="url(#t63)"/>
<rect x="1883" y="524" width="309" height="3.6" fill="url(#t64)"/>
<rect x="1883" y="527" width="306" height="3.6" fill="url(#t65)"/>
<rect x="1883" y="530" width="303" height="3.6" fill="url(#t66)"/>
<rect x="1883" y="533" width="300" height="3.6" fill="url(#t67)"/>
<rect x="1883" y="536" width="297" height="3.6" fill="url(#t68)"/>
<rect x="1886" y="539" width="291" height="3.6" fill="url(#t69)"/>
<rect x="1886" y="542" width="288" height="3.6" fill="url(#t70)"/>
<rect x="1886" y="545" width="285" height="3.6" fill="url(#t71)"/>
<rect x="1886" y="548" width="282" height="3.6" fill="url(#t72)"/>
<rect x="1886" y="551" width="279" height="3.6" fill="url(#t73)"/>
<rect x="1886" y="554" width="276" height="3.6" fill="url(#t74)"/>
<rect x="1889" y="557" width="270" height="3.6" fill="url(#t75)"/>
<rect x="1889" y="560" width="270" height="3.6" fill="url(#t76)"/>
<rect x="1889" y="563" width="267" height="3.6" fill="url(#t77)"/>
<rect x="1889" y="566" width="264" height="3.6" fill="url(#t78)"/>
<rect x="1889" y="569" width="261" height="3.6" fill="url(#t79)"/>
<rect x="1889" y="572" width="258" height="3.6" fill="url(#t80)"/>
<rect x="1892" y="575" width="252" height="3.6" fill="url(#t81)"/>
<rect x="1892" y="578" width="249" height="3.6" fill="url(#t82)"/>
<rect x="1892" y="581" width="246" height="3.6" fill="url(#t83)"/>
<rect x="1892" y="584" width="243" height="3.6" fill="url(#t84)"/>
<rect x="1892" y="587" width="240" height="3.6" fill="url(#t85)"/>
<rect x="1892" y="590" width="237" height="3.6" fill="url(#t86)"/>
<rect x="1895" y="593" width="231" height="3.6" fill="url(#t87)"/>
<rect x="1895" y="596" width="228" height="3.6" fill="url(#t88)"/>
<rect x="1895" y="599" width="225" height="3.6" fill="url(#t89)"/>
<rect x="1895" y="602" width="222" height="3.6" fill="url(#t90)"/>
<rect x="1895" y="605" width="219" height="3.6" fill="url(#t91)"/>
<rect x="1895" y="608" width="216" height="3.6" fill="url(#t92)"/>
<rect x="1898" y="611" width="210" height="3.6" fill="url(#t93)"/>
<rect x="1898" y="614" width="207" height="3.6" fill="url(#t94)"/>
<rect x="1898" y="617" width="204" height="3.6" fill="url(#t95)"/>
<rect x="1898" y="620" width="201" height="3.6" fill="url(#t96)"/>
<rect x="1898" y="623" width="198" height="3.6" fill="url(#t97)"/>
<rect x="1898" y="626" width="195" height="3.6" fill="url(#t98)"/>
<rect x="1898" y="629" width="192" height="3.6" fill="url(#t99)"/>
<rect x="1901" y="632" width="186" height="3.6" fill="url(#t100)"/>
<rect x="1901" y="635" width="183" height="3.6" fill="url(#t101)"/>
<rect x="1901" y="638" width="180" height="3.6" fill="url(#t102)"/>
<rect x="1901" y="641" width="177" height="3.6" fill="url(#t103)"/>
<rect x="1901" y="644" width="174" height="3.6" fill="url(#t104)"/>
<rect x="1901" y="647" width="171" height="3.6" fill="url(#t105)"/>
<rect x="1904" y="650" width="165" height="3.6" fill="url(#t106)"/>
<rect x="1904" y="653" width="162" height="3.6" fill="url(#t107)"/>
<rect x="1904" y="656" width="159" height="3.6" fill="url(#t108)"/>
<rect x="1904" y="659" width="156" height="3.6" fill="url(#t109)"/>
<rect x="1904" y="662" width="153" height="3.6" fill="url(#t110)"/>
<rect x="1904" y="665" width="150" height="3.6" fill="url(#t111)"/>
<rect x="1907" y="668" width="144" height="3.6" fill="url(#t112)"/>
<rect x="1907" y="671" width="141" height="3.6" fill="url(#t113)"/>
<rect x="1907" y="674" width="138" height="3.6" fill="url(#t114)"/>
<rect x="1907" y="677" width="135" height="3.6" fill="url(#t115)"/>
<rect x="1907" y="680" width="132" height="3.6" fill="url(#t116)"/>
<rect x="1907" y="683" width="129" height="3.6" fill="url(#t117)"/>
<rect x="1910" y="686" width="123" height="3.6" fill="url(#t118)"/>
<rect x="1910" y="689" width="120" height="3.6" fill="url(#t119)"/>
<rect x="1910" y="692" width="117" height="3.6" fill="url(#t120)"/>
<rect x="1910" y="695" width="114" height="3.6" fill="url(#t121)"/>
<rect x="1910" y="698" width="111" height="3.6" fill="url(#t122)"/>
<rect x="1910" y="701" width="111" height="3.6" fill="url(#t123)"/>
<rect x="1913" y="704" width="105" height="3.6" fill="url(#t124)"/>
<rect x="1913" y="707" width="102" height="3.6" fill="url(#t125)"/>
<rect x="1913" y="710" width="99" height="3.6" fill="url(#t126)"/>
<rect x="1913" y="713" width="96" height="3.6" fill="url(#t127)"/>
<rect x="1913" y="716" width="93" height="3.6" fill="url(#t128)"/>
<rect x="1913" y="719" width="90" height="3.6" fill="url(#t129)"/>
<rect x="1916" y="722" width="84" height="3.6" fill="url(#t130)"/>
<rect x="1916" y="725" width="81" height="3.6" fill="url(#t131)"/>
<rect x="1916" y="728" width="78" height="3.6" fill="url(#t132)"/>
<rect x="1916" y="731" width="75" height="3.6" fill="url(#t133)"/>
<rect x="1916" y="734" width="72" height="3.6" fill="url(#t134)"/>
<rect x="1916" y="737" width="69" height="3.6" fill="url(#t135)"/>
<rect x="1916" y="740" width="66" height="3.6" fill="url(#t136)"/>
<rect x="1919" y="743" width="60" height="3.6" fill="url(#t137)"/>
<rect x="1919" y="746" width="57" height="3.6" fill="url(#t138)"/>
<rect x="1919" y="749" width="54" height="3.6" fill="url(#t139)"/>
<rect x="1919" y="752" width="51" height="3.6" fill="url(#t140)"/>
<rect x="1919" y="755" width="48" height="3.6" fill="url(#t141)"/>
<rect x="1919" y="758" width="45" height="3.6" fill="url(#t142)"/>
<rect x="1922" y="761" width="39" height="3.6" fill="url(#t143)"/>
<rect x="1922" y="764" width="36" height="3.6" fill="url(#t144)"/>
<rect x="1922" y="767" width="33" height="3.6" fill="url(#t145)"/>
<rect x="1922" y="770" width="30" height="3.6" fill="url(#t146)"/>
<rect x="1922" y="773" width="27" height="3.6" fill="url(#t147)"/>
<rect x="1922" y="776" width="24" height="3.6" fill="url(#t148)"/>
<rect x="1925" y="779" width="18" height="3.6" fill="url(#t149)"/>
</g></g>
<rect x="1678.0" y="290.0" width="868.5" height="2" fill="#8a8a8a"/>
<rect x="2544.5" y="290.0" width="2" height="668.5" fill="#8a8a8a"/>
<rect x="1678.0" y="956.5" width="868.5" height="2" fill="#8a8a8a"/>
<rect x="1678.0" y="290.0" width="2" height="668.5" fill="#8a8a8a"/>
<rect x="1678.0" y="957.5" width="2" height="8" fill="#e0e0e0"/>
<rect x="1671.0" y="956.7" width="7" height="2" fill="#e0e0e0"/>
<rect x="1750.1" y="957.5" width="2" height="8" fill="#e0e0e0"/>
<rect x="1671.0" y="901.2" width="7" height="2" fill="#e0e0e0"/>
<rect x="1822.1" y="957.5" width="2" height="8" fill="#e0e0e0"/>
<rect x="1671.0" y="845.7" width="7" height="2" fill="#e0e0e0"/>
<rect x="1894.2" y="957.5" width="2" height="8" fill="#e0e0e0"/>
<rect x="1671.0" y="790.1" width="7" height="2" fill="#e0e0e0"/>
<rect x="1966.3" y="957.5" width="2" height="8" fill="#e0e0e0"/>
<rect x="1671.0" y="734.6" width="7" height="2" fill="#e0e0e0"/>
<rect x="2038.3" y="957.5" width="2" height="8" fill="#e0e0e0"/>
<rect x="1671.0" y="679.1" width="7" height="2" fill="#e0e0e0"/>
<rect x="2110.4" y="957.5" width="2" height="8" fill="#e0e0e0"/>
<rect x="1671.0" y="623.5" width="7" height="2" fill="#e0e0e0"/>
<rect x="2182.5" y="957.5" width="2" height="8" fill="#e0e0e0"/>
<rect x="1671.0" y="568.0" width="7" height="2" fill="#e0e0e0"/>
<rect x="2254.6" y="957.5" width="2" height="8" fill="#e0e0e0"/>
<rect x="1671.0" y="512.5" width="7" height="2" fill="#e0e0e0"/>
<rect x="2326.6" y="957.5" width="2" height="8" fill="#e0e0e0"/>
<rect x="1671.0" y="457.0" width="7" height="2" fill="#e0e0e0"/>
<rect x="2398.7" y="957.5" width="2" height="8" fill="#e0e0e0"/>
<rect x="1671.0" y="401.5" width="7" height="2" fill="#e0e0e0"/>
<rect x="2470.8" y="957.5" width="2" height="8" fill="#e0e0e0"/>
<rect x="1671.0" y="345.9" width="7" height="2" fill="#e0e0e0"/>
<rect x="1925.9" y="397.2" width="17.8" height="18.6" fill="none" stroke="#fff" stroke-width="2"/>
<rect x="1902.3" y="375.4" width="17.8" height="18.6" fill="none" stroke="#fff" stroke-width="2"/>
<rect x="1882.3" y="354.6" width="17.8" height="18.6" fill="none" stroke="#fff" stroke-width="2"/>
<rect x="1865.2" y="338.6" width="17.8" height="18.6" fill="none" stroke="#fff" stroke-width="2"/>
<rect x="1848.9" y="321.7" width="17.8" height="18.6" fill="none" stroke="#fff" stroke-width="2"/>
<rect x="1958.0" y="402.4" width="17.8" height="18.6" fill="none" stroke="#fff" stroke-width="2"/>
<rect x="1959.3" y="382.2" width="17.8" height="18.6" fill="none" stroke="#fff" stroke-width="2"/>
<rect x="1960.9" y="364.8" width="17.8" height="18.6" fill="none" stroke="#fff" stroke-width="2"/>
<rect x="1960.9" y="348.6" width="17.8" height="18.6" fill="none" stroke="#fff" stroke-width="2"/>
<rect x="1963.0" y="332.5" width="17.8" height="18.6" fill="none" stroke="#fff" stroke-width="2"/>
<rect x="1939.1" y="430.8" width="17.8" height="18.6" fill="none" stroke="#fff" stroke-width="2"/>
<rect x="1921.2" y="432.1" width="17.8" height="18.6" fill="none" stroke="#fff" stroke-width="2"/>
<rect x="1902.8" y="435.8" width="17.8" height="18.6" fill="none" stroke="#fff" stroke-width="2"/>
<rect x="1886.3" y="437.9" width="17.8" height="18.6" fill="none" stroke="#fff" stroke-width="2"/>
<rect x="1868.9" y="441.9" width="17.8" height="18.6" fill="none" stroke="#fff" stroke-width="2"/>
<rect x="1950.0" y="467.2" width="17.8" height="18.6" fill="none" stroke="#fff" stroke-width="2"/>
<rect x="1946.5" y="516.8" width="17.8" height="18.6" fill="none" stroke="#fff" stroke-width="2"/>
<rect x="1941.2" y="577.9" width="17.8" height="18.6" fill="none" stroke="#fff" stroke-width="2"/>
<rect x="1934.0" y="655.1" width="17.8" height="18.6" fill="none" stroke="#fff" stroke-width="2"/>
<rect x="1923.2" y="771.0" width="17.8" height="18.6" fill="none" stroke="#fff" stroke-width="2"/>
<rect x="1978.2" y="448.6" width="17.8" height="18.6" fill="none" stroke="#fff" stroke-width="2"/>
<rect x="2004.1" y="474.8" width="17.8" height="18.6" fill="none" stroke="#fff" stroke-width="2"/>
<rect x="2029.7" y="502.3" width="17.8" height="18.6" fill="none" stroke="#fff" stroke-width="2"/>
<rect x="2064.6" y="537.4" width="17.8" height="18.6" fill="none" stroke="#fff" stroke-width="2"/>
<rect x="2109.1" y="579.6" width="17.8" height="18.6" fill="none" stroke="#fff" stroke-width="2"/>
<rect x="2020.1" y="415.6" width="17.8" height="18.6" fill="none" stroke="#fff" stroke-width="2"/>
<rect x="2092.3" y="402.5" width="17.8" height="18.6" fill="none" stroke="#fff" stroke-width="2"/>
<rect x="2158.6" y="393.8" width="17.8" height="18.6" fill="none" stroke="#fff" stroke-width="2"/>
<rect x="2232.0" y="380.7" width="17.8" height="18.6" fill="none" stroke="#fff" stroke-width="2"/>
<rect x="2319.1" y="365.8" width="17.8" height="18.6" fill="none" stroke="#fff" stroke-width="2"/>
<rect x="1954.1" y="426.9" width="17.8" height="18.6" fill="none" stroke="#000" stroke-width="2"/>
<circle cx="1937.5" cy="404.5" r="5.1" fill="#96be96" stroke="#000" stroke-width="1.6"/>
<circle cx="1913.6" cy="380.6" r="5.1" fill="#7abe7a" stroke="#000" stroke-width="1.6"/>
<circle cx="1894.6" cy="362.5" r="5.1" fill="#5fbe5f" stroke="#000" stroke-width="1.6"/>
<circle cx="1878.3" cy="345.4" r="5.1" fill="#41be41" stroke="#000" stroke-width="1.6"/>
<circle cx="1861.3" cy="330.9" r="5.1" fill="#0fbe0f" stroke="#000" stroke-width="1.6"/>
<circle cx="1968.2" cy="408.7" r="5.1" fill="#bebe96" stroke="#000" stroke-width="1.6"/>
<circle cx="1970.1" cy="388.5" r="5.1" fill="#bebe7a" stroke="#000" stroke-width="1.6"/>
<circle cx="1972.4" cy="371.7" r="5.1" fill="#bebe5f" stroke="#000" stroke-width="1.6"/>
<circle cx="1974.0" cy="356.7" r="5.1" fill="#bebe41" stroke="#000" stroke-width="1.6"/>
<circle cx="1974.0" cy="340.4" r="5.1" fill="#bebe0f" stroke="#000" stroke-width="1.6"/>
<circle cx="1950.4" cy="436.6" r="5.1" fill="#96bebe" stroke="#000" stroke-width="1.6"/>
<circle cx="1933.3" cy="437.4" r="5.1" fill="#7abebe" stroke="#000" stroke-width="1.6"/>
<circle cx="1915.4" cy="441.3" r="5.1" fill="#5fbebe" stroke="#000" stroke-width="1.6"/>
<circle cx="1900.4" cy="443.7" r="5.1" fill="#41bebe" stroke="#000" stroke-width="1.6"/>
<circle cx="1881.2" cy="447.4" r="5.1" fill="#0fbebe" stroke="#000" stroke-width="1.6"/>
<circle cx="1964.4" cy="476.4" r="5.1" fill="#9696be" stroke="#000" stroke-width="1.6"/>
<circle cx="1959.5" cy="526.4" r="5.1" fill="#7a7abe" stroke="#000" stroke-width="1.6"/>
<circle cx="1953.4" cy="590.3" r="5.1" fill="#5f5fbe" stroke="#000" stroke-width="1.6"/>
<circle cx="1948.6" cy="673.3" r="5.1" fill="#4141be" stroke="#000" stroke-width="1.6"/>
<circle cx="1938.9" cy="798.9" r="5.1" fill="#0f0fbe" stroke="#000" stroke-width="1.6"/>
<circle cx="1992.5" cy="456.5" r="5.1" fill="#be96be" stroke="#000" stroke-width="1.6"/>
<circle cx="2018.5" cy="482.6" r="5.1" fill="#be7abe" stroke="#000" stroke-width="1.6"/>
<circle cx="2045.4" cy="509.6" r="5.1" fill="#be5fbe" stroke="#000" stroke-width="1.6"/>
<circle cx="2080.4" cy="544.5" r="5.1" fill="#be41be" stroke="#000" stroke-width="1.6"/>
<circle cx="2128.5" cy="590.4" r="5.1" fill="#be0fbe" stroke="#000" stroke-width="1.6"/>
<circle cx="2031.4" cy="423.6" r="5.1" fill="#be9696" stroke="#000" stroke-width="1.6"/>
<circle cx="2106.5" cy="410.4" r="5.1" fill="#be7a7a" stroke="#000" stroke-width="1.6"/>
<circle cx="2172.8" cy="400.9" r="5.1" fill="#be5f5f" stroke="#000" stroke-width="1.6"/>
<circle cx="2250.7" cy="386.6" r="5.1" fill="#be4141" stroke="#000" stroke-width="1.6"/>
<circle cx="2336.9" cy="371.5" r="5.1" fill="#be0f0f" stroke="#000" stroke-width="1.6"/>
<circle cx="1964.5" cy="434.6" r="5.1" fill="#fff" stroke="#000" stroke-width="1.6"/>
<rect x="2246.2" y="747.4" width="293.4" height="201.8" fill="#2e2e2e"/>
<defs><linearGradient id="ib" gradientUnits="userSpaceOnUse" x1="2283.3" y1="741.6" x2="2509.6" y2="967.9"><stop offset="0" stop-color="#afff00"/><stop offset=".516" stop-color="#ffff14"/><stop offset="1" stop-color="#ffb400"/></linearGradient><linearGradient id="id" gradientUnits="userSpaceOnUse" x1="2269.1" y1="722.2" x2="2546.6" y2="878.5"><stop offset="0" stop-color="#669600"/><stop offset=".533" stop-color="#989800"/><stop offset="1" stop-color="#986e00"/></linearGradient><clipPath id="ic"><rect x="2250.9" y="752.6" width="284.0" height="191.60000000000002"/></clipPath></defs>
<g clip-path="url(#ic)"><rect x="2250.9" y="752.6" width="284.0" height="191.60000000000002" fill="url(#ib)"/>
<path d="M2250.9 752.6H2534.9V924.3L2250.9 772.5Z" fill="url(#id)"/></g>
<rect x="2250.1" y="751.8000000000001" width="285.6" height="193.20000000000002" fill="none" stroke="#9a9a9a" stroke-width="1.6"/>
<rect x="2383.3" y="838.2" width="17.8" height="18.6" fill="none" stroke="#fff" stroke-width="2"/>
<circle cx="2410.6" cy="836.8" r="5.1" fill="#b4ac00" stroke="#000" stroke-width="1.6"/>
</svg>
<span class="t" style="left:2030.29px;top:268.01px;font-size:19.6px;color:#dcdcdc;transform:scaleX(1.0146);">CIE 1976 u&#x27;v&#x27;</span>
<span class="t" style="left:1673.43px;top:970.01px;font-size:19.6px;color:#dcdcdc;transform:scaleX(1.1307);">0</span>
<span class="t" style="left:1658.53px;top:937.51px;font-size:19.6px;color:#dcdcdc;transform:scaleX(1.1307);">0</span>
<span class="t" style="left:1732.08px;top:970.01px;font-size:19.6px;color:#dcdcdc;transform:scaleX(1.0287);">0.05</span>
<span class="t" style="left:1631.61px;top:894.58px;font-size:19.6px;color:#dcdcdc;transform:scaleX(1.0287);">0.05</span>
<span class="t" style="left:1809.64px;top:970.01px;font-size:19.6px;color:#dcdcdc;transform:scaleX(1.0420);">0.1</span>
<span class="t" style="left:1642.60px;top:839.66px;font-size:19.6px;color:#dcdcdc;transform:scaleX(1.0420);">0.1</span>
<span class="t" style="left:1876.22px;top:970.01px;font-size:19.6px;color:#dcdcdc;transform:scaleX(1.0287);">0.15</span>
<span class="t" style="left:1631.61px;top:783.53px;font-size:19.6px;color:#dcdcdc;transform:scaleX(1.0287);">0.15</span>
<span class="t" style="left:1953.78px;top:970.01px;font-size:19.6px;color:#dcdcdc;transform:scaleX(1.0432);">0.2</span>
<span class="t" style="left:1642.60px;top:728.61px;font-size:19.6px;color:#dcdcdc;transform:scaleX(1.0432);">0.2</span>
<span class="t" style="left:2020.36px;top:970.01px;font-size:19.6px;color:#dcdcdc;transform:scaleX(1.0287);">0.25</span>
<span class="t" style="left:1631.61px;top:673.08px;font-size:19.6px;color:#dcdcdc;transform:scaleX(1.0287);">0.25</span>
<span class="t" style="left:2097.93px;top:970.01px;font-size:19.6px;color:#dcdcdc;transform:scaleX(1.0381);">0.3</span>
<span class="t" style="left:1642.61px;top:617.56px;font-size:19.6px;color:#dcdcdc;transform:scaleX(1.0381);">0.3</span>
<span class="t" style="left:2164.50px;top:970.01px;font-size:19.6px;color:#dcdcdc;transform:scaleX(1.0287);">0.35</span>
<span class="t" style="left:1631.61px;top:562.03px;font-size:19.6px;color:#dcdcdc;transform:scaleX(1.0287);">0.35</span>
<span class="t" style="left:2242.07px;top:970.01px;font-size:19.6px;color:#dcdcdc;transform:scaleX(1.0266);">0.4</span>
<span class="t" style="left:1642.61px;top:505.91px;font-size:19.6px;color:#dcdcdc;transform:scaleX(1.0266);">0.4</span>
<span class="t" style="left:2308.64px;top:970.01px;font-size:19.6px;color:#dcdcdc;transform:scaleX(1.0287);">0.45</span>
<span class="t" style="left:1631.61px;top:450.98px;font-size:19.6px;color:#dcdcdc;transform:scaleX(1.0287);">0.45</span>
<span class="t" style="left:2386.21px;top:970.01px;font-size:19.6px;color:#dcdcdc;transform:scaleX(1.0366);">0.5</span>
<span class="t" style="left:1642.61px;top:394.86px;font-size:19.6px;color:#dcdcdc;transform:scaleX(1.0366);">0.5</span>
<span class="t" style="left:2452.78px;top:970.01px;font-size:19.6px;color:#dcdcdc;transform:scaleX(1.0287);">0.55</span>
<span class="t" style="left:1631.61px;top:339.93px;font-size:19.6px;color:#dcdcdc;transform:scaleX(1.0287);">0.55</span>
<svg style="left:760px;top:1040px" width="380" height="280" viewBox="760 1040 380 280">
<defs><linearGradient id="rbr" x1="0" x2="0" y1="0" y2="1"><stop offset="0" stop-color="#ff5c5c"/><stop offset="1" stop-color="#ff2626"/></linearGradient><linearGradient id="rbg" x1="0" x2="0" y1="0" y2="1"><stop offset="0" stop-color="#5cb05c"/><stop offset="1" stop-color="#269526"/></linearGradient><linearGradient id="rbb" x1="0" x2="0" y1="0" y2="1"><stop offset="0" stop-color="#5c5cff"/><stop offset="1" stop-color="#4646ff"/></linearGradient></defs>
<rect x="784.0" y="1058.5" width="338.0" height="243.0" fill="#222"/>
<rect x="784.0" y="1118.2" width="338.0" height="2" fill="#8a8a8a"/>
<rect x="784.0" y="1179.0" width="338.0" height="2" fill="#8a8a8a"/>
<rect x="784.0" y="1239.8" width="338.0" height="2" fill="#8a8a8a"/>
<rect x="783.0" y="1056.5" width="340.0" height="3.4" fill="#8a8a8a"/>
<rect x="783.0" y="1300.5" width="340.0" height="2" fill="#8a8a8a"/>
<rect x="783.0" y="1057.5" width="2" height="245.0" fill="#8a8a8a"/>
<rect x="1121.0" y="1057.5" width="2" height="245.0" fill="#8a8a8a"/>
<rect x="783.0" y="1302.5" width="2" height="7.5" fill="#e4e4e4"/>
<rect x="1121.0" y="1302.5" width="2" height="7.5" fill="#e4e4e4"/>
<rect x="776.5" y="1057.5" width="6.5" height="2" fill="#e4e4e4"/>
<rect x="776.5" y="1118.2" width="6.5" height="2" fill="#e4e4e4"/>
<rect x="776.5" y="1179.0" width="6.5" height="2" fill="#e4e4e4"/>
<rect x="776.5" y="1239.8" width="6.5" height="2" fill="#e4e4e4"/>
<rect x="776.5" y="1300.5" width="6.5" height="2" fill="#e4e4e4"/>
<rect x="817.5" y="1175.7" width="87.2" height="125.80000000000004" fill="url(#rbr)" stroke="#000" stroke-width="1.8"/>
<rect x="818.4" y="1300.9" width="85.4" height="1.6" fill="url(#rbr)" opacity=".55"/>
<rect x="907.5" y="1179.1000000000001" width="88.2" height="122.39999999999995" fill="url(#rbg)" stroke="#000" stroke-width="1.8"/>
<rect x="908.4" y="1300.9" width="86.4" height="1.6" fill="url(#rbg)" opacity=".55"/>
<rect x="997.5" y="1252.3000000000002" width="88.19999999999989" height="49.19999999999991" fill="url(#rbb)" stroke="#000" stroke-width="1.8"/>
<rect x="998.4" y="1300.9" width="86.39999999999989" height="1.6" fill="url(#rbb)" opacity=".55"/>
</svg>
<span class="t" style="left:874.85px;top:1033.61px;font-size:19.6px;color:#dcdcdc;transform:scaleX(0.9635);">RGB Balance</span>
<span class="t" style="left:742.00px;top:1049.91px;font-size:19.6px;color:#dcdcdc;transform:scaleX(1.0693);">110</span>
<span class="t" style="left:742.08px;top:1110.66px;font-size:19.6px;color:#dcdcdc;transform:scaleX(1.0202);">105</span>
<span class="t" style="left:742.08px;top:1172.01px;font-size:19.6px;color:#dcdcdc;transform:scaleX(1.0182);">100</span>
<span class="t" style="left:753.06px;top:1232.76px;font-size:19.6px;color:#dcdcdc;transform:scaleX(1.0272);">95</span>
<span class="t" style="left:753.06px;top:1293.51px;font-size:19.6px;color:#dcdcdc;transform:scaleX(1.0242);">90</span>
<span class="t" style="left:927.91px;top:1306.91px;font-size:19.6px;color:#dcdcdc;">100%</span>
<span class="t" style="left:369.12px;top:1014.66px;font-size:39.5px;color:#f0f0f0;transform:scaleX(1.0087);">Avg dE2000: 1.32</span>
<span class="t" style="left:361.66px;top:1069.86px;font-size:39.5px;color:#f0f0f0;transform:scaleX(1.0304);">Max dE2000: 2.57</span>
<span class="t" style="left:319.03px;top:1134.56px;font-size:39.5px;color:#f0f0f0;transform:scaleX(1.0330);">Current Reading</span>
<span class="t" style="left:319.92px;top:1187.77px;font-size:33px;color:#f0f0f0;transform:scaleX(1.0334);">x: 0.4225</span>
<span class="t" style="left:532.62px;top:1187.77px;font-size:33px;color:#f0f0f0;transform:scaleX(1.0329);">y: 0.5081</span>
<span class="t" style="left:319.82px;top:1242.67px;font-size:33px;color:#f0f0f0;transform:scaleX(1.0264);">fL: 81.5</span>
<span class="t" style="left:318.79px;top:1289.07px;font-size:33px;color:#f0f0f0;transform:scaleX(1.0798);">cd/m²: 279.23</span>
<div id="datagrid" style="left:1149px;top:1013.7px;width:988px;height:323px;background:#000"></div>
<div style="left:1152px;top:1016.6px;width:983.2px;height:37.3px;background:linear-gradient(#303030 0,#2f2f2f 48%,#181818 50%,#0f0f0f 100%)"></div>
<span class="t" style="left:1458.38px;top:1026.84px;font-size:19.8px;color:#f6f6f6;transform:scaleX(1.4304);">20%</span>
<span class="t" style="left:1603.31px;top:1026.84px;font-size:19.8px;color:#f6f6f6;transform:scaleX(1.4102);">40%</span>
<span class="t" style="left:1746.66px;top:1026.84px;font-size:19.8px;color:#f6f6f6;transform:scaleX(1.4307);">60%</span>
<span class="t" style="left:1891.02px;top:1026.84px;font-size:19.8px;color:#f6f6f6;transform:scaleX(1.4253);">80%</span>
<span class="t" style="left:2025.57px;top:1026.84px;font-size:19.8px;color:#f6f6f6;transform:scaleX(1.4758);">100%</span>
<div style="left:1152px;top:1053.9px;width:983.2px;height:35.1px;background:linear-gradient(#464646,#3c3c3c)"></div>
<span class="t" style="left:1175.50px;top:1061.55px;font-size:22.5px;font-weight:700;color:#f2f2f2;transform:scaleX(1.3054);">x: CIE31</span>
<span class="t" style="left:1423.11px;top:1061.55px;font-size:22.5px;color:#f2f2f2;transform:scaleX(1.3575);">0.3403</span>
<span class="t" style="left:1567.01px;top:1061.55px;font-size:22.5px;color:#f2f2f2;transform:scaleX(1.3509);">0.3604</span>
<span class="t" style="left:1710.91px;top:1061.55px;font-size:22.5px;color:#f2f2f2;transform:scaleX(1.3591);">0.3819</span>
<span class="t" style="left:1854.81px;top:1061.55px;font-size:22.5px;color:#f2f2f2;transform:scaleX(1.3575);">0.4016</span>
<span class="t" style="left:1998.71px;top:1061.55px;font-size:22.5px;color:#f2f2f2;transform:scaleX(1.3566);">0.4225</span>
<div style="left:1152px;top:1088.9px;width:983.2px;height:35.1px;background:linear-gradient(#868686,#7c7c7c)"></div>
<span class="t" style="left:1175.47px;top:1096.55px;font-size:22.5px;font-weight:700;color:#f2f2f2;transform:scaleX(1.3058);">y: CIE31</span>
<span class="t" style="left:1423.10px;top:1096.55px;font-size:22.5px;color:#f2f2f2;transform:scaleX(1.3604);">0.3692</span>
<span class="t" style="left:1567.00px;top:1096.55px;font-size:22.5px;color:#f2f2f2;transform:scaleX(1.3604);">0.4047</span>
<span class="t" style="left:1710.91px;top:1096.55px;font-size:22.5px;color:#f2f2f2;transform:scaleX(1.3573);">0.4378</span>
<span class="t" style="left:1854.80px;top:1096.55px;font-size:22.5px;color:#f2f2f2;transform:scaleX(1.3604);">0.4702</span>
<span class="t" style="left:1998.70px;top:1096.55px;font-size:22.5px;color:#f2f2f2;transform:scaleX(1.3597);">0.5081</span>
<div style="left:1152px;top:1123.9px;width:983.2px;height:35.1px;background:linear-gradient(#464646,#3c3c3c)"></div>
<span class="t" style="left:1175.20px;top:1131.55px;font-size:22.5px;font-weight:700;color:#f2f2f2;transform:scaleX(1.2966);">Y</span>
<span class="t" style="left:1422.74px;top:1131.55px;font-size:22.5px;color:#f2f2f2;transform:scaleX(1.3787);">292.5818</span>
<span class="t" style="left:1566.64px;top:1131.55px;font-size:22.5px;color:#f2f2f2;transform:scaleX(1.3811);">288.4407</span>
<span class="t" style="left:1710.54px;top:1131.55px;font-size:22.5px;color:#f2f2f2;transform:scaleX(1.3789);">283.7846</span>
<span class="t" style="left:1854.44px;top:1131.55px;font-size:22.5px;color:#f2f2f2;transform:scaleX(1.3789);">281.9006</span>
<span class="t" style="left:1998.34px;top:1131.55px;font-size:22.5px;color:#f2f2f2;transform:scaleX(1.3811);">279.2322</span>
<div style="left:1152px;top:1158.9px;width:983.2px;height:35.1px;background:linear-gradient(#868686,#7c7c7c)"></div>
<span class="t" style="left:1175.35px;top:1166.55px;font-size:22.5px;font-weight:700;color:#f2f2f2;transform:scaleX(1.3676);">Target x:CIE31</span>
<span class="t" style="left:1423.11px;top:1166.55px;font-size:22.5px;color:#f2f2f2;transform:scaleX(1.3509);">0.3344</span>
<span class="t" style="left:1567.01px;top:1166.55px;font-size:22.5px;color:#f2f2f2;transform:scaleX(1.3509);">0.3564</span>
<span class="t" style="left:1710.91px;top:1166.55px;font-size:22.5px;color:#f2f2f2;transform:scaleX(1.3575);">0.3773</span>
<span class="t" style="left:1854.81px;top:1166.55px;font-size:22.5px;color:#f2f2f2;transform:scaleX(1.3591);">0.3969</span>
<span class="t" style="left:1998.71px;top:1166.55px;font-size:22.5px;color:#f2f2f2;transform:scaleX(1.3575);">0.4193</span>
<div style="left:1152px;top:1193.9px;width:983.2px;height:35.1px;background:linear-gradient(#464646,#3c3c3c)"></div>
<span class="t" style="left:1175.35px;top:1201.55px;font-size:22.5px;font-weight:700;color:#f2f2f2;transform:scaleX(1.3676);">Target y:CIE31</span>
<span class="t" style="left:1423.11px;top:1201.55px;font-size:22.5px;color:#f2f2f2;transform:scaleX(1.3573);">0.3648</span>
<span class="t" style="left:1567.01px;top:1201.55px;font-size:22.5px;color:#f2f2f2;transform:scaleX(1.3575);">0.4013</span>
<span class="t" style="left:1710.91px;top:1201.55px;font-size:22.5px;color:#f2f2f2;transform:scaleX(1.3573);">0.4358</span>
<span class="t" style="left:1854.80px;top:1201.55px;font-size:22.5px;color:#f2f2f2;transform:scaleX(1.3604);">0.4682</span>
<span class="t" style="left:1998.71px;top:1201.55px;font-size:22.5px;color:#f2f2f2;transform:scaleX(1.3575);">0.5053</span>
<div style="left:1152px;top:1228.9px;width:983.2px;height:35.1px;background:linear-gradient(#868686,#7c7c7c)"></div>
<span class="t" style="left:1175.38px;top:1236.55px;font-size:22.5px;font-weight:700;color:#f2f2f2;transform:scaleX(1.2824);">Target Y</span>
<span class="t" style="left:1422.74px;top:1236.55px;font-size:22.5px;color:#f2f2f2;transform:scaleX(1.3811);">293.1807</span>
<span class="t" style="left:1566.64px;top:1236.55px;font-size:22.5px;color:#f2f2f2;transform:scaleX(1.3783);">288.0345</span>
<span class="t" style="left:1710.55px;top:1236.55px;font-size:22.5px;color:#f2f2f2;transform:scaleX(1.3740);">284.0804</span>
<span class="t" style="left:1854.44px;top:1236.55px;font-size:22.5px;color:#f2f2f2;transform:scaleX(1.3811);">280.9772</span>
<span class="t" style="left:1998.34px;top:1236.55px;font-size:22.5px;color:#f2f2f2;transform:scaleX(1.3806);">277.9771</span>
<div style="left:1152px;top:1263.9px;width:983.2px;height:35.1px;background:linear-gradient(#464646,#3c3c3c)"></div>
<span class="t" style="left:1174.41px;top:1271.55px;font-size:22.5px;font-weight:700;color:#f2f2f2;transform:scaleX(1.4127);">ΔE 2000</span>
<span class="t" style="left:1421.94px;top:1271.55px;font-size:22.5px;color:#f2f2f2;transform:scaleX(1.3769);">1.7681</span>
<span class="t" style="left:1567.01px;top:1271.55px;font-size:22.5px;color:#f2f2f2;transform:scaleX(1.3566);">0.8925</span>
<span class="t" style="left:1710.90px;top:1271.55px;font-size:22.5px;color:#f2f2f2;transform:scaleX(1.3597);">0.9731</span>
<span class="t" style="left:1854.81px;top:1271.55px;font-size:22.5px;color:#f2f2f2;transform:scaleX(1.3566);">0.9285</span>
<span class="t" style="left:1998.71px;top:1271.55px;font-size:22.5px;color:#f2f2f2;transform:scaleX(1.3575);">0.6586</span>
<div style="left:1152px;top:1298.9px;width:983.2px;height:35.1px;background:linear-gradient(#868686,#7c7c7c)"></div>
<span class="t" style="left:1174.45px;top:1306.55px;font-size:22.5px;font-weight:700;color:#f2f2f2;transform:scaleX(1.3709);">ΔE ITP</span>
<span class="t" style="left:1423.14px;top:1306.55px;font-size:22.5px;color:#f2f2f2;transform:scaleX(1.3571);">3.4106</span>
<span class="t" style="left:1566.66px;top:1306.55px;font-size:22.5px;color:#f2f2f2;transform:scaleX(1.3627);">2.4166</span>
<span class="t" style="left:1710.56px;top:1306.55px;font-size:22.5px;color:#f2f2f2;transform:scaleX(1.3642);">2.6919</span>
<span class="t" style="left:1854.46px;top:1306.55px;font-size:22.5px;color:#f2f2f2;transform:scaleX(1.3624);">2.9978</span>
<span class="t" style="left:1998.73px;top:1306.55px;font-size:22.5px;color:#f2f2f2;transform:scaleX(1.3600);">3.2052</span>
<div style="left:1149.7px;top:1013.9px;width:1400px;height:2.2px;background:repeating-linear-gradient(90deg,#f2f2f2 0,#f2f2f2 2.2px,transparent 2.2px,transparent 5.53px)"></div>
<div style="left:1149.7px;top:1335px;width:1400px;height:2.2px;background:repeating-linear-gradient(90deg,#f2f2f2 0,#f2f2f2 2.2px,transparent 2.2px,transparent 5.53px)"></div>
<div style="left:1149.7px;top:1013.9px;width:2.2px;height:323px;background:repeating-linear-gradient(180deg,#f2f2f2 0,#f2f2f2 2.2px,transparent 2.2px,transparent 5.53px)"></div>
<div style="left:2547.2px;top:1013.9px;width:2.2px;height:323px;background:repeating-linear-gradient(180deg,#f2f2f2 0,#f2f2f2 2.2px,transparent 2.2px,transparent 5.53px)"></div>
<div id="bottombar" style="left:301.5px;top:1434.6px;width:2258.5px;height:93.4px;background:linear-gradient(#4a4a4a,#353535 50%,#222)"></div>
<div style="left:301.5px;top:1435px;width:67px;height:92px;border-radius:6px;background:linear-gradient(#a6a6a6,#8a8a8a 40%,#5a5a5a)"></div>
<div class="rb" style="left:324px;top:1437.8px;width:23px;height:23px;background:linear-gradient(#6a6a6a,#9c9c9c)"></div>
<svg style="left:329px;top:1445px" width="13" height="7" viewBox="0 0 13 7"><path d="M0 7h13l-6.5 -7z" fill="#1c1c1c"/></svg>
<div style="left:309px;top:1474px;width:53px;height:45.5px;border-radius:5px;background:#ff0;box-shadow:inset 2px 2px 1px #d8d800"></div>
<div style="left:378.0px;top:1435px;width:225px;height:92px;border-radius:6px;background:linear-gradient(#a6a6a6,#8a8a8a 40%,#5a5a5a)"></div>
<div style="left:385.8px;top:1442px;width:210px;height:55px;border-radius:5px;background:#bebea3;box-shadow:inset 1.5px 2px 1px #858572"></div>
<span class="t" style="left:474.24px;top:1506.83px;font-size:15.2px;font-weight:700;color:#222;transform:scaleX(1.0652);">20%</span>
<div style="left:606.1px;top:1435px;width:225px;height:92px;border-radius:6px;background:linear-gradient(#a6a6a6,#8a8a8a 40%,#5a5a5a)"></div>
<div style="left:613.9px;top:1442px;width:210px;height:55px;border-radius:5px;background:#c0c085;box-shadow:inset 1.5px 2px 1px #86865d"></div>
<span class="t" style="left:702.66px;top:1506.83px;font-size:15.2px;font-weight:700;color:#222;transform:scaleX(1.0546);">40%</span>
<div style="left:834.2px;top:1435px;width:225px;height:92px;border-radius:6px;background:linear-gradient(#a6a6a6,#8a8a8a 40%,#5a5a5a)"></div>
<div style="left:842.0px;top:1442px;width:210px;height:55px;border-radius:5px;background:#c0c069;box-shadow:inset 1.5px 2px 1px #86864a"></div>
<span class="t" style="left:930.41px;top:1506.83px;font-size:15.2px;font-weight:700;color:#222;transform:scaleX(1.0663);">60%</span>
<div style="left:1062.3px;top:1435px;width:225px;height:92px;border-radius:6px;background:linear-gradient(#a6a6a6,#8a8a8a 40%,#5a5a5a)"></div>
<div style="left:1070.1px;top:1442px;width:210px;height:55px;border-radius:5px;background:#c1c148;box-shadow:inset 1.5px 2px 1px #878732"></div>
<span class="t" style="left:1158.59px;top:1506.83px;font-size:15.2px;font-weight:700;color:#222;transform:scaleX(1.0636);">80%</span>
<div style="left:1290.4px;top:1435px;width:225px;height:92px;border-radius:6px;background:linear-gradient(#1b1b1b,#232323 55%,#393939)"></div>
<div style="left:1298.2px;top:1442px;width:210px;height:55px;border-radius:5px;background:#c4c200;box-shadow:inset 1.5px 2px 1px #898800"></div>
<span class="t" style="left:1381.62px;top:1506.83px;font-size:15.2px;font-weight:700;color:#fff;transform:scaleX(1.0800);">100%</span>
<div style="left:2060px;top:1434px;width:15px;height:94px;background:linear-gradient(90deg,rgba(40,40,40,0),#2a2a2a)"></div>
<div style="left:2075.5px;top:1435px;width:72px;height:92px;border-radius:6px;background:linear-gradient(#a8a8a8,#8c8c8c 28%,#8a8a8a 31%,#909090 33%,#5c5c5c);overflow:hidden"><div style="left:0;top:26.5px;width:72px;height:1.5px;background:#3c3c3c"></div></div>
<div class="rb" style="left:2099.9px;top:1437.5px;width:23px;height:23px;background:linear-gradient(#7a7a7a,#a4a4a4)"></div>
<svg style="left:2104.9px;top:1444.8px" width="13" height="7" viewBox="0 0 13 7"><path d="M0 7h13l-6.5 -7z" fill="#2a2a2a"/></svg>
<div style="left:2088px;top:1471px;width:47px;height:47px;border-radius:7px;border:3.5px solid #1e1e1e;background:linear-gradient(#ababab 0,#a4a4a4 50%,#8e8e8e 50%,#8a8a8a 100%)"></div>
<div style="left:2101.3px;top:1485px;width:20.7px;height:20px;background:linear-gradient(#1a1a1a 0,#111 49%,#000 50%)"></div>
<div style="left:2149px;top:1435px;width:408.7px;height:45.3px;border-radius:6px 6px 0 0;background:linear-gradient(#adadad,#8e8e8e 50%,#6a6a6a)"></div>
<div style="left:2217.7px;top:1435px;width:1.6px;height:45px;background:#3c3c3c"></div>
<div style="left:2285.2px;top:1435px;width:1.6px;height:45px;background:#3c3c3c"></div>
<div style="left:2352.6px;top:1435px;width:1.6px;height:45px;background:#3c3c3c"></div>
<div style="left:2420.1px;top:1435px;width:1.6px;height:45px;background:#3c3c3c"></div>
<div style="left:2487.5px;top:1435px;width:1.6px;height:45px;background:#3c3c3c"></div>
<div class="rb" style="left:2172.28px;top:1445px;width:25px;height:25px;background:linear-gradient(#787878,#a0a0a0)"></div>
<div class="rb" style="left:2239.73px;top:1445px;width:25px;height:25px;background:linear-gradient(#787878,#a0a0a0)"></div>
<div class="rb" style="left:2307.18px;top:1445px;width:25px;height:25px;background:linear-gradient(#787878,#a0a0a0)"></div>
<div class="rb" style="left:2374.62px;top:1445px;width:25px;height:25px;background:linear-gradient(#787878,#a0a0a0)"></div>
<div class="rb" style="left:2442.08px;top:1445px;width:25px;height:25px;background:linear-gradient(#787878,#a0a0a0)"></div>
<div class="rb" style="left:2509.53px;top:1445px;width:25px;height:25px;background:linear-gradient(#787878,#a0a0a0)"></div>
<svg style="left:2149px;top:1435px" width="411" height="45" viewBox="2149 1435 411 45" fill="#262626"><path d="M2244 1450v15l13-7.5z"/><path d="M2314 1452h2v11h-2zM2324 1452h2v11h-2z M2316 1461h8v2h-8z" opacity=".8"/><path d="M2380 1457.5c3-5 6-5 7 0s4 5 7 0" fill="none" stroke="#262626" stroke-width="2"/><path d="M2449 1457.5a6 6 0 1 1 6 6" fill="none" stroke="#262626" stroke-width="2.2"/><path d="M2452 1449l5 3-5 3z"/></svg>
<div style="left:2149px;top:1481.5px;width:203.7px;height:44.6px;border-radius:6px 0 0 6px;background:linear-gradient(#a8a8a8,#8a8a8a 50%,#666)"></div>
<div style="left:2354.3px;top:1481.5px;width:203.4px;height:44.6px;border-radius:0 0 6px 0;background:linear-gradient(#a8a8a8,#8a8a8a 50%,#666)"></div>
<div class="rb" style="left:2181px;top:1491.1px;width:27px;height:27px;background:linear-gradient(#767676,#9e9e9e)"></div>
<div class="rb" style="left:2502.2px;top:1491.1px;width:27px;height:27px;background:linear-gradient(#767676,#9e9e9e)"></div>
<svg style="left:2180px;top:1490px" width="350" height="30" viewBox="2180 1490 350 30" fill="none" stroke="#2a2a2a" stroke-width="2"><path d="M2193 1499l-5 5.5 5 5.5M2199 1499l-5 5.5 5 5.5"/><path d="M2512 1499l5 5.5-5 5.5M2518 1499l5 5.5-5 5.5"/></svg>
<span class="t" style="left:2233.57px;top:1488.51px;font-size:32px;color:#303030;transform:scaleX(1.0793);">Back</span>
<span class="t" style="left:2393.43px;top:1488.61px;font-size:32px;color:#303030;transform:scaleX(1.2091);">Next</span>
<svg id="watermark" style="left:2165px;top:1436px" width="395" height="86" viewBox="2165 1436 395 86">
<g fill="none" stroke-linejoin="miter" stroke-linecap="butt">
<path d="M2229.0 1486.3L2226.4 1455.9L2175.1 1447.1L2178.0 1493.7L2207.9 1511.4L2263.1 1493.7L2232.4 1488.1" stroke="#f0f0f0" stroke-opacity=".75" stroke-width="5.6"/>
<path d="M2187.2 1490.5L2229.0 1486.3" stroke="#f0f0f0" stroke-opacity=".75" stroke-width="4.6"/>
<path d="M2229.0 1486.3L2226.4 1455.9L2175.1 1447.1L2178.0 1493.7L2207.9 1511.4L2263.1 1493.7L2232.4 1488.1" stroke="#962b34" stroke-opacity=".8" stroke-width="3.4"/>
<path d="M2187.2 1490.5L2229.0 1486.3" stroke="#962b34" stroke-opacity=".8" stroke-width="2.4"/>
<path d="M2189.1 1463.6C2192.2 1461.0 2196.2 1459.8 2199.6 1462.8L2206.5 1470.9C2213.1 1460.6 2222.7 1450.1 2231.2 1443.8L2233.0 1445.4C2222.7 1456.5 2212.3 1470.2 2204.4 1483.7C2200.2 1475.0 2195.4 1467.8 2189.1 1463.6Z" fill="#3a3a3a" fill-opacity=".85" stroke="#f0f0f0" stroke-opacity=".8" stroke-width="1.2"/>
</g>
<text x="2231.4" y="1483.2" font-family="Liberation Sans, sans-serif" font-weight="700" font-size="35" textLength="199.5" lengthAdjust="spacingAndGlyphs" fill="#962b34" fill-opacity=".78" stroke="#f0f0f0" stroke-opacity=".8" stroke-width="2.4" paint-order="stroke">NOTEBOOK</text>
<text x="2432.2" y="1483.2" font-family="Liberation Sans, sans-serif" font-weight="400" font-size="33.7" textLength="117.5" lengthAdjust="spacingAndGlyphs" fill="#4c4c4c" fill-opacity=".8" stroke="#f0f0f0" stroke-opacity=".8" stroke-width="2.4" paint-order="stroke">CHECK</text>
</svg>
</div></body></html>
